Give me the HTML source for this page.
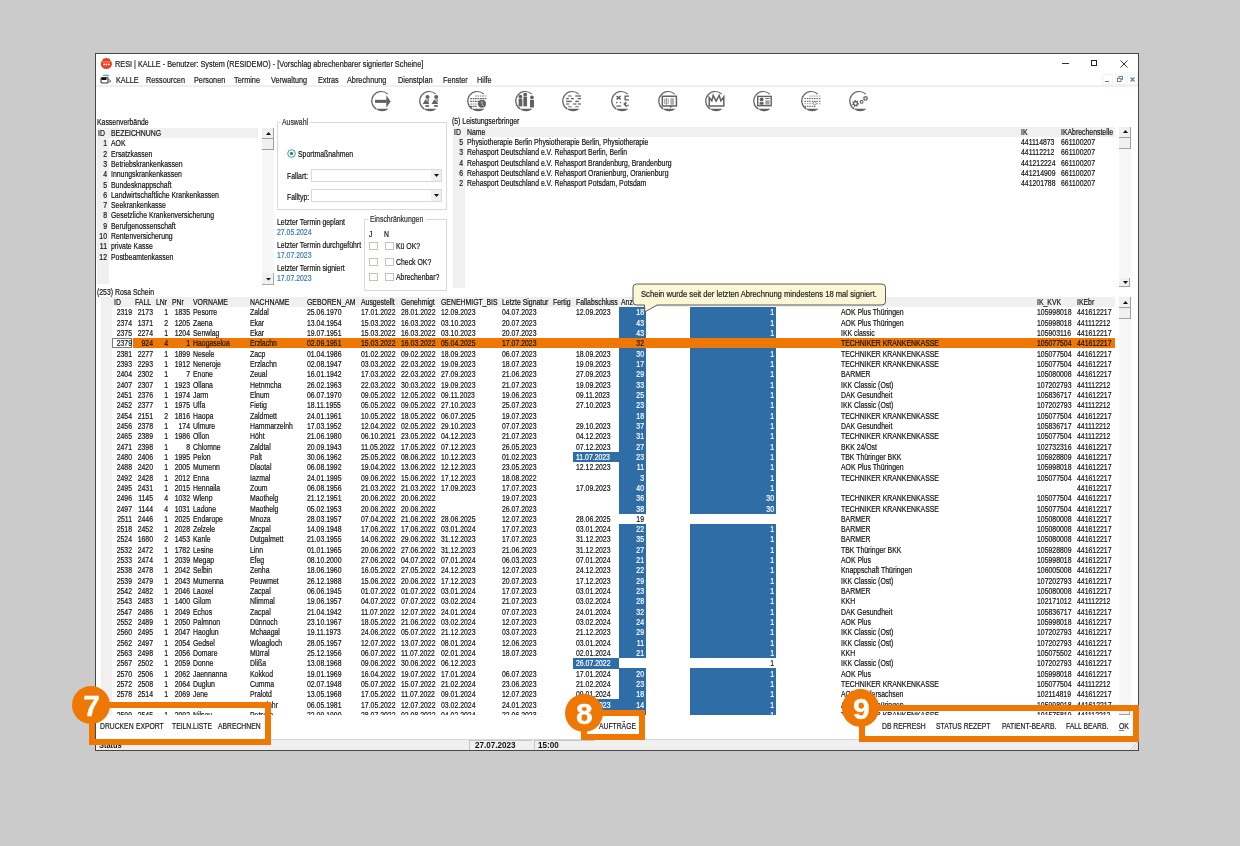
<!DOCTYPE html>
<html><head><meta charset="utf-8"><style>
html,body{margin:0;padding:0;}
body{width:1240px;height:846px;background:#cbcbcb;position:relative;overflow:hidden;font-family:"Liberation Sans",sans-serif;}
div,span,svg{position:absolute;}
span{white-space:pre;}
</style></head><body>
<div style="left:0;top:0;width:1240px;height:846px;will-change:transform;">
<div style="left:95px;top:53px;width:1044px;height:698px;background:#fff;box-sizing:border-box;border:1px solid #474747;"></div>
<svg style="position:absolute;left:100px;top:57px" width="13" height="13" viewBox="0 0 13 13"><ellipse cx="6.4" cy="6.9" rx="5.6" ry="5.2" fill="#e8431f"/><ellipse cx="6.4" cy="2.6" rx="3.6" ry="1.6" fill="#e8431f"/><circle cx="4.1" cy="7.4" r="0.9" fill="#fff"/><circle cx="6.4" cy="7.4" r="0.9" fill="#fff"/><circle cx="8.7" cy="7.4" r="0.9" fill="#fff"/><rect x="2.2" y="4.6" width="8.4" height="0.6" fill="#f7b9a8"/></svg>
<span style="left:114.80px;top:57.95px;font-size:8.30px;line-height:12px;color:#222;font-weight:normal;transform:scaleX(0.88);-webkit-text-stroke:0.2px currentColor;transform-origin:0 0;">RESI | KALLE - Benutzer: System (RESIDEMO) - [Vorschlag abrechenbarer signierter Scheine]</span>
<div style="left:1062px;top:63px;width:7px;height:1px;background:#333;"></div>
<div style="left:1091px;top:60px;width:6px;height:6px;box-sizing:border-box;border:1px solid #222;"></div>
<svg style="position:absolute;left:1120px;top:59.5px" width="8" height="8" viewBox="0 0 8 8"><path d="M0.5 0.5L7.5 7.5M7.5 0.5L0.5 7.5" stroke="#333" stroke-width="1"/></svg>
<svg style="position:absolute;left:100px;top:74px" width="12" height="11" viewBox="0 0 12 11"><path d="M3 1.5 Q6 0.5 9 2" stroke="#39a6b8" stroke-width="1.2" fill="none"/><rect x="1" y="3.5" width="7" height="5.5" rx="1" fill="#fff" stroke="#333" stroke-width="1.1"/><rect x="1.5" y="4" width="5" height="2" fill="#111"/><path d="M8.5 5 L11 7.2 L8.5 8.5" stroke="#555" stroke-width="0.9" fill="none"/></svg>
<span style="left:115.60px;top:73.75px;font-size:8.30px;line-height:12px;color:#222;font-weight:normal;transform:scaleX(0.88);-webkit-text-stroke:0.2px currentColor;transform-origin:0 0;">KALLE</span>
<span style="left:145.80px;top:73.75px;font-size:8.30px;line-height:12px;color:#222;font-weight:normal;transform:scaleX(0.88);-webkit-text-stroke:0.2px currentColor;transform-origin:0 0;">Ressourcen</span>
<span style="left:193.70px;top:73.75px;font-size:8.30px;line-height:12px;color:#222;font-weight:normal;transform:scaleX(0.88);-webkit-text-stroke:0.2px currentColor;transform-origin:0 0;">Personen</span>
<span style="left:234.00px;top:73.75px;font-size:8.30px;line-height:12px;color:#222;font-weight:normal;transform:scaleX(0.88);-webkit-text-stroke:0.2px currentColor;transform-origin:0 0;">Termine</span>
<span style="left:270.90px;top:73.75px;font-size:8.30px;line-height:12px;color:#222;font-weight:normal;transform:scaleX(0.88);-webkit-text-stroke:0.2px currentColor;transform-origin:0 0;">Verwaltung</span>
<span style="left:317.60px;top:73.75px;font-size:8.30px;line-height:12px;color:#222;font-weight:normal;transform:scaleX(0.88);-webkit-text-stroke:0.2px currentColor;transform-origin:0 0;">Extras</span>
<span style="left:346.60px;top:73.75px;font-size:8.30px;line-height:12px;color:#222;font-weight:normal;transform:scaleX(0.88);-webkit-text-stroke:0.2px currentColor;transform-origin:0 0;">Abrechnung</span>
<span style="left:397.80px;top:73.75px;font-size:8.30px;line-height:12px;color:#222;font-weight:normal;transform:scaleX(0.88);-webkit-text-stroke:0.2px currentColor;transform-origin:0 0;">Dienstplan</span>
<span style="left:443.40px;top:73.75px;font-size:8.30px;line-height:12px;color:#222;font-weight:normal;transform:scaleX(0.88);-webkit-text-stroke:0.2px currentColor;transform-origin:0 0;">Fenster</span>
<span style="left:476.50px;top:73.75px;font-size:8.30px;line-height:12px;color:#222;font-weight:normal;transform:scaleX(0.88);-webkit-text-stroke:0.2px currentColor;transform-origin:0 0;">Hilfe</span>
<div style="left:96px;top:85px;width:1042px;height:1.5px;background:#efefef;"></div>
<div style="left:1102px;top:74px;width:11px;height:11px;background:#fff;box-sizing:border-box;border:1px solid #f2f2f2;"></div>
<div style="left:1114.5px;top:74px;width:11px;height:11px;background:#fff;box-sizing:border-box;border:1px solid #f2f2f2;"></div>
<div style="left:1127px;top:74px;width:11px;height:11px;background:#fff;box-sizing:border-box;border:1px solid #f2f2f2;"></div>
<div style="left:1105px;top:81.2px;width:4.2px;height:1.2px;background:#5a7a96;"></div>
<svg style="position:absolute;left:1117px;top:76.2px" width="6" height="6" viewBox="0 0 6 6"><rect x="2" y="0.5" width="3.5" height="3" fill="none" stroke="#5a7a96" stroke-width="0.9"/><rect x="0.5" y="2.5" width="3.5" height="3" fill="#fff" stroke="#5a7a96" stroke-width="0.9"/></svg>
<svg style="position:absolute;left:1130px;top:77px" width="5" height="5" viewBox="0 0 5 5"><path d="M0.5 0.5L4.5 4.5M4.5 0.5L0.5 4.5" stroke="#5a7a96" stroke-width="1.1"/></svg>
<svg style="position:absolute;left:368.00px;top:88px" width="26" height="26" viewBox="0 0 26 26"><path d="M19.73 6.14 A9.4 9.4 0 1 0 8.22 20.87" stroke="#616161" stroke-width="1.2" fill="none"/><path d="M8.0 20.8 L20.3 20.8 Q18.6 23.2 14.1 23.2 Q9.7 23.1 8.0 20.8Z" fill="#616161"/><g transform="translate(0.00,0)"><rect x="7.07" y="11.8" width="11.5" height="3.1" fill="#616161"/><path d="M18.3 7.2 L22.6 13.4 L18.3 19.7Z" fill="#616161"/></g></svg>
<svg style="position:absolute;left:415.87px;top:88px" width="26" height="26" viewBox="0 0 26 26"><path d="M19.73 6.14 A9.4 9.4 0 1 0 8.22 20.87" stroke="#616161" stroke-width="1.2" fill="none"/><path d="M8.0 20.8 L20.3 20.8 Q18.6 23.2 14.1 23.2 Q9.7 23.1 8.0 20.8Z" fill="#616161"/><g transform="translate(0.13,0)"><circle cx="11.37" cy="9.07" r="2.0" fill="#616161"/><path d="M6.60 16.1 L9.30 11.5 L12.90 11.5 L12.90 16.1Z" fill="#616161"/><path d="M10.00 11.4 L13.10 14.6" stroke="#fff" stroke-width="0.9"/><rect x="9.20" y="17.1" width="3.7" height="1.7" fill="#616161"/><circle cx="20.13" cy="9.07" r="2.0" fill="#616161"/><path d="M15.36 16.1 L18.06 11.5 L21.66 11.5 L21.66 16.1Z" fill="#616161"/><path d="M18.76 11.4 L21.86 14.6" stroke="#fff" stroke-width="0.9"/><rect x="17.96" y="17.1" width="3.7" height="1.7" fill="#616161"/></g></svg>
<svg style="position:absolute;left:464.00px;top:88px" width="26" height="26" viewBox="0 0 26 26"><path d="M19.73 6.14 A9.4 9.4 0 1 0 8.22 20.87" stroke="#616161" stroke-width="1.2" fill="none"/><path d="M8.0 20.8 L20.3 20.8 Q18.6 23.2 14.1 23.2 Q9.7 23.1 8.0 20.8Z" fill="#616161"/><g transform="translate(0.00,0)"><rect x="10.9" y="7.4" width="1.8" height="1.2" fill="#616161" opacity="0.6"/><rect x="13.4" y="7.4" width="1.8" height="1.2" fill="#616161" opacity="0.6"/><rect x="15.8" y="7.4" width="1.8" height="1.2" fill="#616161" opacity="0.6"/><rect x="18.2" y="7.4" width="1.8" height="1.2" fill="#616161" opacity="0.6"/><rect x="20.6" y="7.4" width="1.8" height="1.2" fill="#616161" opacity="0.6"/><rect x="6.2" y="10.0" width="1.8" height="1.2" fill="#616161" opacity="1"/><rect x="8.6" y="10.0" width="1.8" height="1.2" fill="#616161" opacity="1"/><rect x="10.9" y="10.0" width="1.8" height="1.2" fill="#616161" opacity="1"/><rect x="13.4" y="10.0" width="1.8" height="1.2" fill="#616161" opacity="1"/><rect x="15.8" y="10.0" width="1.8" height="1.2" fill="#616161" opacity="1"/><rect x="18.2" y="10.0" width="1.8" height="1.2" fill="#616161" opacity="1"/><rect x="20.6" y="10.0" width="1.8" height="1.2" fill="#616161" opacity="1"/><rect x="6.2" y="12.8" width="1.8" height="1.2" fill="#616161" opacity="1"/><rect x="8.6" y="12.8" width="1.8" height="1.2" fill="#616161" opacity="1"/><rect x="10.9" y="12.8" width="1.8" height="1.2" fill="#616161" opacity="1"/><rect x="13.4" y="12.8" width="1.8" height="1.2" fill="#616161" opacity="1"/><rect x="6.2" y="15.4" width="1.8" height="1.2" fill="#616161" opacity="0.6"/><rect x="8.6" y="15.4" width="1.8" height="1.2" fill="#616161" opacity="0.6"/><rect x="10.9" y="15.4" width="1.8" height="1.2" fill="#616161" opacity="0.6"/><rect x="13.4" y="15.4" width="1.8" height="1.2" fill="#616161" opacity="0.6"/><rect x="6.2" y="17.8" width="1.8" height="1.2" fill="#616161" opacity="1"/><rect x="8.6" y="17.8" width="1.8" height="1.2" fill="#616161" opacity="1"/><rect x="10.9" y="17.8" width="1.8" height="1.2" fill="#616161" opacity="1"/><circle cx="18" cy="15.8" r="4.0" fill="#616161"/><path d="M17.9 12.9 V16.3 L20.0 18.3" stroke="#c8c8c8" stroke-width="0.9" fill="none"/></g></svg>
<svg style="position:absolute;left:511.70px;top:88px" width="26" height="26" viewBox="0 0 26 26"><path d="M19.73 6.14 A9.4 9.4 0 1 0 8.22 20.87" stroke="#616161" stroke-width="1.2" fill="none"/><path d="M8.0 20.8 L20.3 20.8 Q18.6 23.2 14.1 23.2 Q9.7 23.1 8.0 20.8Z" fill="#616161"/><g transform="translate(0.30,0)"><circle cx="8.14" cy="8.76" r="1.9" fill="#616161"/><rect x="6.3" y="10.9" width="3.7" height="7.5" fill="#616161"/><circle cx="12.9" cy="6.76" r="1.9" fill="#616161"/><rect x="11.06" y="8.9" width="3.7" height="9.5" fill="#616161"/><circle cx="19.67" cy="9.37" r="1.85" fill="#616161"/><rect x="17.67" y="11.8" width="4.0" height="7.7" fill="#616161"/></g></svg>
<svg style="position:absolute;left:559.00px;top:88px" width="26" height="26" viewBox="0 0 26 26"><path d="M19.73 6.14 A9.4 9.4 0 1 0 8.22 20.87" stroke="#616161" stroke-width="1.2" fill="none"/><path d="M8.0 20.8 L20.3 20.8 Q18.6 23.2 14.1 23.2 Q9.7 23.1 8.0 20.8Z" fill="#616161"/><g transform="translate(0.00,0)"><rect x="9.2" y="7.3" width="3.4" height="1.4" fill="#616161" opacity="0.75"/><rect x="16.3" y="7.3" width="5.7" height="1.4" fill="#616161" opacity="0.9"/><rect x="7.1" y="9.9" width="2.7" height="1.4" fill="#616161" opacity="1"/><rect x="12" y="9.9" width="2.8" height="1.4" fill="#616161" opacity="1"/><rect x="18.7" y="9.9" width="3.3" height="1.4" fill="#616161" opacity="1"/><rect x="7.1" y="12.7" width="5.5" height="1.4" fill="#616161" opacity="1"/><rect x="16.3" y="12.7" width="3.5" height="1.4" fill="#616161" opacity="1"/><rect x="7.1" y="15.3" width="2.9" height="1.4" fill="#616161" opacity="0.85"/><rect x="14.1" y="15.3" width="3.4" height="1.4" fill="#616161" opacity="0.85"/><rect x="19" y="15.3" width="3.0" height="1.4" fill="#616161" opacity="0.85"/><rect x="9.2" y="17.9" width="3.4" height="1.4" fill="#616161" opacity="0.7"/><rect x="16.3" y="17.9" width="3.4" height="1.4" fill="#616161" opacity="0.7"/></g></svg>
<svg style="position:absolute;left:607.80px;top:88px" width="26" height="26" viewBox="0 0 26 26"><path d="M19.73 6.14 A9.4 9.4 0 1 0 8.22 20.87" stroke="#616161" stroke-width="1.2" fill="none"/><path d="M8.0 20.8 L20.3 20.8 Q18.6 23.2 14.1 23.2 Q9.7 23.1 8.0 20.8Z" fill="#616161"/><g transform="translate(-0.80,0)"><path d="M9.4 8.0 L13.4 11.4 M13.4 8.0 L9.4 11.4" stroke="#616161" stroke-width="1.5"/><path d="M21.8 8.1 H18.0 V11.9 H21.8" stroke="#616161" stroke-width="1.4" fill="none"/><circle cx="9.5" cy="14.6" r="0.8" fill="#616161"/><circle cx="13.4" cy="14.6" r="0.8" fill="#616161"/><rect x="9.1" y="17.5" width="4.9" height="1.2" fill="#616161"/><path d="M16.6 15.4 L19.6 18.6 M19.2 14.3 L18.0 15.6 M20.3 17.4 L21.4 17.6" stroke="#616161" stroke-width="1.6"/></g></svg>
<svg style="position:absolute;left:654.87px;top:88px" width="26" height="26" viewBox="0 0 26 26"><path d="M19.73 6.14 A9.4 9.4 0 1 0 8.22 20.87" stroke="#616161" stroke-width="1.2" fill="none"/><path d="M8.0 20.8 L20.3 20.8 Q18.6 23.2 14.1 23.2 Q9.7 23.1 8.0 20.8Z" fill="#616161"/><g transform="translate(0.13,0)"><rect x="7.2" y="8.25" width="14.1" height="9.7" fill="none" stroke="#616161" stroke-width="1.5"/><rect x="15.2" y="10.1" width="3.7" height="6.6" fill="#616161" opacity="0.5"/><path d="M9.7 10.6 Q8.9 13.4 9.7 16.2 M12.9 10.6 Q13.7 13.4 12.9 16.2" stroke="#616161" stroke-width="0.6" fill="none"/><path d="M11.3 10.4 Q10.5 13.4 11.3 16.5 Q12.1 13.4 11.3 10.4Z" stroke="#616161" stroke-width="0.6" fill="none"/><path d="M14.2 17.9 L15.4 20.1 L17.4 17.9Z" fill="#616161"/></g></svg>
<svg style="position:absolute;left:702.40px;top:88px" width="26" height="26" viewBox="0 0 26 26"><path d="M19.73 6.14 A9.4 9.4 0 1 0 8.22 20.87" stroke="#616161" stroke-width="1.2" fill="none"/><path d="M8.0 20.8 L20.3 20.8 Q18.6 23.2 14.1 23.2 Q9.7 23.1 8.0 20.8Z" fill="#616161"/><g transform="translate(0.60,0)"><path d="M6.6 18.1 V9.5 L9.2 12.9 L10.6 7.4 L13.5 13.2 L16.6 7.4 L18.3 12.9 L21.2 8.9 V18.1Z" fill="none" stroke="#616161" stroke-width="1.5" stroke-linejoin="miter"/></g></svg>
<svg style="position:absolute;left:750.20px;top:88px" width="26" height="26" viewBox="0 0 26 26"><path d="M19.73 6.14 A9.4 9.4 0 1 0 8.22 20.87" stroke="#616161" stroke-width="1.2" fill="none"/><path d="M8.0 20.8 L20.3 20.8 Q18.6 23.2 14.1 23.2 Q9.7 23.1 8.0 20.8Z" fill="#616161"/><g transform="translate(-0.20,0)"><rect x="7.9" y="8.4" width="13.5" height="9.3" fill="none" stroke="#616161" stroke-width="1.4"/><circle cx="11.8" cy="11.5" r="1.9" fill="#616161"/><rect x="9.8" y="14.1" width="4.0" height="2.6" fill="#616161"/><rect x="15.4" y="10.0" width="4.3" height="0.9" fill="#616161"/><rect x="15.5" y="12.3" width="4.2" height="4.4" fill="#616161" opacity="0.6"/></g></svg>
<svg style="position:absolute;left:797.87px;top:88px" width="26" height="26" viewBox="0 0 26 26"><path d="M19.73 6.14 A9.4 9.4 0 1 0 8.22 20.87" stroke="#616161" stroke-width="1.2" fill="none"/><path d="M8.0 20.8 L20.3 20.8 Q18.6 23.2 14.1 23.2 Q9.7 23.1 8.0 20.8Z" fill="#616161"/><g transform="translate(0.13,0)"><rect x="11.0" y="7.5" width="1.6" height="1.1" fill="#616161" opacity="0.55"/><rect x="13.5" y="7.5" width="1.6" height="1.1" fill="#616161" opacity="0.55"/><rect x="15.8" y="7.5" width="1.6" height="1.1" fill="#616161" opacity="0.55"/><rect x="18.2" y="7.5" width="1.6" height="1.1" fill="#616161" opacity="0.55"/><rect x="20.7" y="7.5" width="1.6" height="1.1" fill="#616161" opacity="0.55"/><rect x="6.3" y="10.0" width="1.6" height="1.1" fill="#616161" opacity="0.95"/><rect x="8.7" y="10.0" width="1.6" height="1.1" fill="#616161" opacity="0.95"/><rect x="11.0" y="10.0" width="1.6" height="1.1" fill="#616161" opacity="0.95"/><rect x="13.5" y="10.0" width="1.6" height="1.1" fill="#616161" opacity="0.95"/><rect x="15.8" y="10.0" width="1.6" height="1.1" fill="#616161" opacity="0.95"/><rect x="18.2" y="10.0" width="1.6" height="1.1" fill="#616161" opacity="0.95"/><rect x="20.7" y="10.0" width="1.6" height="1.1" fill="#616161" opacity="0.95"/><rect x="6.3" y="12.8" width="1.6" height="1.1" fill="#616161" opacity="0.95"/><rect x="8.7" y="12.8" width="1.6" height="1.1" fill="#616161" opacity="0.95"/><rect x="11.0" y="12.8" width="1.6" height="1.1" fill="#616161" opacity="0.95"/><rect x="13.5" y="12.8" width="1.6" height="1.1" fill="#616161" opacity="0.95"/><rect x="15.8" y="12.8" width="1.6" height="1.1" fill="#616161" opacity="0.95"/><rect x="18.2" y="12.8" width="1.6" height="1.1" fill="#616161" opacity="0.95"/><rect x="20.7" y="12.8" width="1.6" height="1.1" fill="#616161" opacity="0.95"/><rect x="6.3" y="15.1" width="1.6" height="1.1" fill="#616161" opacity="0.55"/><rect x="8.7" y="15.1" width="1.6" height="1.1" fill="#616161" opacity="0.55"/><rect x="11.0" y="15.1" width="1.6" height="1.1" fill="#616161" opacity="0.55"/><rect x="13.5" y="15.1" width="1.6" height="1.1" fill="#616161" opacity="0.55"/><rect x="15.8" y="15.1" width="1.6" height="1.1" fill="#616161" opacity="0.55"/><rect x="18.2" y="15.1" width="1.6" height="1.1" fill="#616161" opacity="0.55"/><rect x="20.7" y="15.1" width="1.6" height="1.1" fill="#616161" opacity="0.55"/><rect x="6.3" y="17.8" width="1.6" height="1.1" fill="#616161" opacity="0.95"/><rect x="8.7" y="17.8" width="1.6" height="1.1" fill="#616161" opacity="0.95"/><rect x="11.0" y="17.8" width="1.6" height="1.1" fill="#616161" opacity="0.95"/><rect x="13.5" y="17.8" width="1.6" height="1.1" fill="#616161" opacity="0.95"/><rect x="15.8" y="17.8" width="1.6" height="1.1" fill="#616161" opacity="0.95"/><circle cx="16.6" cy="15.4" r="1.5" fill="#fff" stroke="#616161" stroke-width="0.6"/></g></svg>
<svg style="position:absolute;left:846.00px;top:88px" width="26" height="26" viewBox="0 0 26 26"><path d="M19.73 6.14 A9.4 9.4 0 1 0 8.22 20.87" stroke="#616161" stroke-width="1.2" fill="none"/><path d="M8.0 20.8 L20.3 20.8 Q18.6 23.2 14.1 23.2 Q9.7 23.1 8.0 20.8Z" fill="#616161"/><g transform="translate(0.00,0)"><path d="M13.00 15.50 L12.91 16.28 L11.84 16.63 L11.53 17.12 L11.68 18.24 L11.02 18.65 L10.08 18.03 L9.50 18.10 L8.72 18.91 L7.98 18.65 L7.88 17.53 L7.47 17.12 L6.35 17.02 L6.09 16.28 L6.90 15.50 L6.97 14.92 L6.35 13.98 L6.76 13.32 L7.88 13.47 L8.37 13.16 L8.72 12.09 L9.50 12.00 L10.08 12.97 L10.63 13.16 L11.68 12.76 L12.24 13.32 L11.84 14.37 L12.03 14.92Z M10.80 15.50 A1.3 1.3 0 1 0 8.20 15.50 A1.3 1.3 0 1 0 10.80 15.50Z" fill="#616161" fill-rule="evenodd"/><path d="M17.80 13.80 L17.73 14.37 L17.07 14.65 L16.80 15.00 L16.70 15.71 L16.17 15.93 L15.60 15.50 L15.16 15.44 L14.50 15.71 L14.04 15.36 L14.13 14.65 L13.96 14.24 L13.40 13.80 L13.47 13.23 L14.13 12.95 L14.40 12.60 L14.50 11.89 L15.03 11.67 L15.60 12.10 L16.04 12.16 L16.70 11.89 L17.16 12.24 L17.07 12.95 L17.24 13.36Z M16.50 13.80 A0.9 0.9 0 1 0 14.70 13.80 A0.9 0.9 0 1 0 16.50 13.80Z" fill="#616161" fill-rule="evenodd"/><path d="M22.20 10.40 L22.13 11.00 L21.30 11.27 L21.06 11.65 L21.18 12.51 L20.67 12.83 L19.95 12.35 L19.50 12.40 L18.90 13.03 L18.33 12.83 L18.25 11.96 L17.94 11.65 L17.07 11.57 L16.87 11.00 L17.50 10.40 L17.55 9.95 L17.07 9.23 L17.39 8.72 L18.25 8.84 L18.63 8.60 L18.90 7.77 L19.50 7.70 L19.95 8.45 L20.37 8.60 L21.18 8.29 L21.61 8.72 L21.30 9.53 L21.45 9.95Z M20.50 10.40 A1.0 1.0 0 1 0 18.50 10.40 A1.0 1.0 0 1 0 20.50 10.40Z" fill="#616161" fill-rule="evenodd"/></g></svg>
<span style="left:96.60px;top:116.45px;font-size:8.31px;line-height:12px;color:#141414;font-weight:normal;transform:scaleX(0.83);-webkit-text-stroke:0.2px currentColor;transform-origin:0 0;">Kassenverbände</span>
<div style="left:97px;top:128px;width:161px;height:10px;background:#f0f0f0;"></div>
<div style="left:97px;top:138px;width:12px;height:146px;background:#f0f0f0;"></div>
<span style="left:97.80px;top:127.15px;font-size:8.31px;line-height:12px;color:#141414;font-weight:normal;transform:scaleX(0.83);-webkit-text-stroke:0.2px currentColor;transform-origin:0 0;">ID</span>
<span style="left:110.80px;top:127.15px;font-size:8.31px;line-height:12px;color:#141414;font-weight:normal;transform:scaleX(0.83);-webkit-text-stroke:0.2px currentColor;transform-origin:0 0;">BEZEICHNUNG</span>
<span style="left:-193.00px;width:300px;text-align:right;top:137.25px;font-size:8.31px;line-height:12px;color:#141414;font-weight:normal;transform:scaleX(0.83);-webkit-text-stroke:0.2px currentColor;transform-origin:100% 0;">1</span>
<span style="left:110.80px;top:137.25px;font-size:8.31px;line-height:12px;color:#141414;font-weight:normal;transform:scaleX(0.83);-webkit-text-stroke:0.2px currentColor;transform-origin:0 0;">AOK</span>
<span style="left:-193.00px;width:300px;text-align:right;top:147.57px;font-size:8.31px;line-height:12px;color:#141414;font-weight:normal;transform:scaleX(0.83);-webkit-text-stroke:0.2px currentColor;transform-origin:100% 0;">2</span>
<span style="left:110.80px;top:147.57px;font-size:8.31px;line-height:12px;color:#141414;font-weight:normal;transform:scaleX(0.83);-webkit-text-stroke:0.2px currentColor;transform-origin:0 0;">Ersatzkassen</span>
<span style="left:-193.00px;width:300px;text-align:right;top:157.89px;font-size:8.31px;line-height:12px;color:#141414;font-weight:normal;transform:scaleX(0.83);-webkit-text-stroke:0.2px currentColor;transform-origin:100% 0;">3</span>
<span style="left:110.80px;top:157.89px;font-size:8.31px;line-height:12px;color:#141414;font-weight:normal;transform:scaleX(0.83);-webkit-text-stroke:0.2px currentColor;transform-origin:0 0;">Betriebskrankenkassen</span>
<span style="left:-193.00px;width:300px;text-align:right;top:168.21px;font-size:8.31px;line-height:12px;color:#141414;font-weight:normal;transform:scaleX(0.83);-webkit-text-stroke:0.2px currentColor;transform-origin:100% 0;">4</span>
<span style="left:110.80px;top:168.21px;font-size:8.31px;line-height:12px;color:#141414;font-weight:normal;transform:scaleX(0.83);-webkit-text-stroke:0.2px currentColor;transform-origin:0 0;">Innungskrankenkassen</span>
<span style="left:-193.00px;width:300px;text-align:right;top:178.53px;font-size:8.31px;line-height:12px;color:#141414;font-weight:normal;transform:scaleX(0.83);-webkit-text-stroke:0.2px currentColor;transform-origin:100% 0;">5</span>
<span style="left:110.80px;top:178.53px;font-size:8.31px;line-height:12px;color:#141414;font-weight:normal;transform:scaleX(0.83);-webkit-text-stroke:0.2px currentColor;transform-origin:0 0;">Bundesknappschaft</span>
<span style="left:-193.00px;width:300px;text-align:right;top:188.85px;font-size:8.31px;line-height:12px;color:#141414;font-weight:normal;transform:scaleX(0.83);-webkit-text-stroke:0.2px currentColor;transform-origin:100% 0;">6</span>
<span style="left:110.80px;top:188.85px;font-size:8.31px;line-height:12px;color:#141414;font-weight:normal;transform:scaleX(0.83);-webkit-text-stroke:0.2px currentColor;transform-origin:0 0;">Landwirtschaftliche Krankenkassen</span>
<span style="left:-193.00px;width:300px;text-align:right;top:199.17px;font-size:8.31px;line-height:12px;color:#141414;font-weight:normal;transform:scaleX(0.83);-webkit-text-stroke:0.2px currentColor;transform-origin:100% 0;">7</span>
<span style="left:110.80px;top:199.17px;font-size:8.31px;line-height:12px;color:#141414;font-weight:normal;transform:scaleX(0.83);-webkit-text-stroke:0.2px currentColor;transform-origin:0 0;">Seekrankenkasse</span>
<span style="left:-193.00px;width:300px;text-align:right;top:209.49px;font-size:8.31px;line-height:12px;color:#141414;font-weight:normal;transform:scaleX(0.83);-webkit-text-stroke:0.2px currentColor;transform-origin:100% 0;">8</span>
<span style="left:110.80px;top:209.49px;font-size:8.31px;line-height:12px;color:#141414;font-weight:normal;transform:scaleX(0.83);-webkit-text-stroke:0.2px currentColor;transform-origin:0 0;">Gesetzliche Krankenversicherung</span>
<span style="left:-193.00px;width:300px;text-align:right;top:219.81px;font-size:8.31px;line-height:12px;color:#141414;font-weight:normal;transform:scaleX(0.83);-webkit-text-stroke:0.2px currentColor;transform-origin:100% 0;">9</span>
<span style="left:110.80px;top:219.81px;font-size:8.31px;line-height:12px;color:#141414;font-weight:normal;transform:scaleX(0.83);-webkit-text-stroke:0.2px currentColor;transform-origin:0 0;">Berufgenossenschaft</span>
<span style="left:-193.00px;width:300px;text-align:right;top:230.13px;font-size:8.31px;line-height:12px;color:#141414;font-weight:normal;transform:scaleX(0.83);-webkit-text-stroke:0.2px currentColor;transform-origin:100% 0;">10</span>
<span style="left:110.80px;top:230.13px;font-size:8.31px;line-height:12px;color:#141414;font-weight:normal;transform:scaleX(0.83);-webkit-text-stroke:0.2px currentColor;transform-origin:0 0;">Rentenversicherung</span>
<span style="left:-193.00px;width:300px;text-align:right;top:240.45px;font-size:8.31px;line-height:12px;color:#141414;font-weight:normal;transform:scaleX(0.83);-webkit-text-stroke:0.2px currentColor;transform-origin:100% 0;">11</span>
<span style="left:110.80px;top:240.45px;font-size:8.31px;line-height:12px;color:#141414;font-weight:normal;transform:scaleX(0.83);-webkit-text-stroke:0.2px currentColor;transform-origin:0 0;">private Kasse</span>
<span style="left:-193.00px;width:300px;text-align:right;top:250.77px;font-size:8.31px;line-height:12px;color:#141414;font-weight:normal;transform:scaleX(0.83);-webkit-text-stroke:0.2px currentColor;transform-origin:100% 0;">12</span>
<span style="left:110.80px;top:250.77px;font-size:8.31px;line-height:12px;color:#141414;font-weight:normal;transform:scaleX(0.83);-webkit-text-stroke:0.2px currentColor;transform-origin:0 0;">Postbeamtenkassen</span>
<div style="left:262.3px;top:128px;width:11.5px;height:156.7px;background:#f7f7f7;"></div>
<div style="left:262.3px;top:128px;width:11.5px;height:10.8px;background:#f0f0f0;box-sizing:border-box;border-right:1px solid #a0a0a0;border-bottom:1px solid #a0a0a0;"></div>
<svg style="position:absolute;left:265.5px;top:131.6px" width="5" height="3" viewBox="0 0 5 3"><path d="M0 3 L2.5 0 L5 3Z" fill="#111"/></svg>
<div style="left:262.3px;top:139px;width:11.5px;height:11px;background:#f0f0f0;box-sizing:border-box;border-right:1px solid #a0a0a0;border-bottom:1px solid #a0a0a0;"></div>
<div style="left:262.3px;top:273.3px;width:11.3px;height:11.4px;background:#f0f0f0;box-sizing:border-box;border-right:1.5px solid #a8a8a8;border-bottom:1.5px solid #a8a8a8;"></div>
<svg style="position:absolute;left:265.6px;top:277.9px" width="5" height="3" viewBox="0 0 5 3"><path d="M0 0 L5 0 L2.5 2.5Z" fill="#111"/></svg>
<div style="left:276.8px;top:121.5px;width:170.2px;height:88.3px;box-sizing:border-box;border:1px solid #d9d9d9;"></div>
<div style="left:280.5px;top:118px;width:29.5px;height:7px;background:#fff;"></div>
<span style="left:282.30px;top:115.85px;font-size:8.31px;line-height:12px;color:#333;font-weight:normal;transform:scaleX(0.83);-webkit-text-stroke:0.2px currentColor;transform-origin:0 0;">Auswahl</span>
<svg style="position:absolute;left:286.5px;top:149px" width="9" height="9" viewBox="0 0 9 9"><circle cx="4.5" cy="4.5" r="3.8" fill="#fff" stroke="#3c7fb1" stroke-width="0.9"/><circle cx="4.5" cy="4.5" r="1.7" fill="#1c9a4a"/></svg>
<span style="left:297.90px;top:147.75px;font-size:8.31px;line-height:12px;color:#141414;font-weight:normal;transform:scaleX(0.83);-webkit-text-stroke:0.2px currentColor;transform-origin:0 0;">Sportmaßnahmen</span>
<span style="left:287.00px;top:170.15px;font-size:8.31px;line-height:12px;color:#141414;font-weight:normal;transform:scaleX(0.83);-webkit-text-stroke:0.2px currentColor;transform-origin:0 0;">Fallart:</span>
<span style="left:287.00px;top:190.95px;font-size:8.31px;line-height:12px;color:#141414;font-weight:normal;transform:scaleX(0.83);-webkit-text-stroke:0.2px currentColor;transform-origin:0 0;">Falltyp:</span>
<div style="left:310.6px;top:169.0px;width:131.4px;height:12.8px;box-sizing:border-box;border:1px solid #dadada;background:#fff;"></div>
<div style="left:431px;top:170.0px;width:10px;height:10.8px;background:#f0f0f0;"></div>
<svg style="position:absolute;left:433.5px;top:174.0px" width="5" height="3" viewBox="0 0 5 3"><path d="M0 0 L2.5 3 L5 0Z" fill="#111"/></svg>
<div style="left:310.6px;top:189.2px;width:131.4px;height:12.8px;box-sizing:border-box;border:1px solid #dadada;background:#fff;"></div>
<div style="left:431px;top:190.2px;width:10px;height:10.8px;background:#f0f0f0;"></div>
<svg style="position:absolute;left:433.5px;top:194.2px" width="5" height="3" viewBox="0 0 5 3"><path d="M0 0 L2.5 3 L5 0Z" fill="#111"/></svg>
<span style="left:277.00px;top:215.85px;font-size:8.31px;line-height:12px;color:#141414;font-weight:normal;transform:scaleX(0.83);-webkit-text-stroke:0.2px currentColor;transform-origin:0 0;">Letzter Termin geplant</span>
<span style="left:277.00px;top:226.45px;font-size:8.31px;line-height:12px;color:#3b78b8;font-weight:normal;transform:scaleX(0.83);-webkit-text-stroke:0.2px currentColor;transform-origin:0 0;">27.05.2024</span>
<span style="left:277.00px;top:239.15px;font-size:8.31px;line-height:12px;color:#141414;font-weight:normal;transform:scaleX(0.83);-webkit-text-stroke:0.2px currentColor;transform-origin:0 0;">Letzter Termin durchgeführt</span>
<span style="left:277.00px;top:249.45px;font-size:8.31px;line-height:12px;color:#3b78b8;font-weight:normal;transform:scaleX(0.83);-webkit-text-stroke:0.2px currentColor;transform-origin:0 0;">17.07.2023</span>
<span style="left:277.00px;top:262.05px;font-size:8.31px;line-height:12px;color:#141414;font-weight:normal;transform:scaleX(0.83);-webkit-text-stroke:0.2px currentColor;transform-origin:0 0;">Letzter Termin signiert</span>
<span style="left:277.00px;top:272.15px;font-size:8.31px;line-height:12px;color:#3b78b8;font-weight:normal;transform:scaleX(0.83);-webkit-text-stroke:0.2px currentColor;transform-origin:0 0;">17.07.2023</span>
<div style="left:364.0px;top:218.5px;width:82.8px;height:72.8px;box-sizing:border-box;border:1px solid #d9d9d9;"></div>
<div style="left:367.5px;top:214px;width:58.5px;height:8px;background:#fff;"></div>
<span style="left:370.20px;top:212.75px;font-size:8.31px;line-height:12px;color:#333;font-weight:normal;transform:scaleX(0.83);-webkit-text-stroke:0.2px currentColor;transform-origin:0 0;">Einschränkungen</span>
<span style="left:369.20px;top:227.95px;font-size:8.31px;line-height:12px;color:#141414;font-weight:normal;transform:scaleX(0.83);-webkit-text-stroke:0.2px currentColor;transform-origin:0 0;">J</span>
<span style="left:384.20px;top:227.95px;font-size:8.31px;line-height:12px;color:#141414;font-weight:normal;transform:scaleX(0.83);-webkit-text-stroke:0.2px currentColor;transform-origin:0 0;">N</span>
<div style="left:369.2px;top:242.1px;width:8.5px;height:8.0px;box-sizing:border-box;border:1px solid #c4c4b6;background:#fff;"></div>
<div style="left:385.1px;top:242.1px;width:8.6px;height:8.0px;box-sizing:border-box;border:1px solid #c4c4b6;background:#fff;"></div>
<span style="left:395.50px;top:239.85px;font-size:8.31px;line-height:12px;color:#141414;font-weight:normal;transform:scaleX(0.83);-webkit-text-stroke:0.2px currentColor;transform-origin:0 0;">Kü OK?</span>
<div style="left:369.2px;top:257.9px;width:8.5px;height:8.0px;box-sizing:border-box;border:1px solid #c4c4b6;background:#fff;"></div>
<div style="left:385.1px;top:257.9px;width:8.6px;height:8.0px;box-sizing:border-box;border:1px solid #c4c4b6;background:#fff;"></div>
<span style="left:395.50px;top:255.65px;font-size:8.31px;line-height:12px;color:#141414;font-weight:normal;transform:scaleX(0.83);-webkit-text-stroke:0.2px currentColor;transform-origin:0 0;">Check OK?</span>
<div style="left:369.2px;top:273.0px;width:8.5px;height:8.0px;box-sizing:border-box;border:1px solid #c4c4b6;background:#fff;"></div>
<div style="left:385.1px;top:273.0px;width:8.6px;height:8.0px;box-sizing:border-box;border:1px solid #c4c4b6;background:#fff;"></div>
<span style="left:395.50px;top:270.75px;font-size:8.31px;line-height:12px;color:#141414;font-weight:normal;transform:scaleX(0.83);-webkit-text-stroke:0.2px currentColor;transform-origin:0 0;">Abrechenbar?</span>
<span style="left:451.90px;top:114.65px;font-size:8.31px;line-height:12px;color:#141414;font-weight:normal;transform:scaleX(0.83);-webkit-text-stroke:0.2px currentColor;transform-origin:0 0;">(5) Leistungserbringer</span>
<div style="left:452.7px;top:126.7px;width:662px;height:10px;background:#f0f0f0;"></div>
<div style="left:452.7px;top:136.7px;width:12px;height:151px;background:#f0f0f0;"></div>
<span style="left:454.00px;top:125.85px;font-size:8.31px;line-height:12px;color:#141414;font-weight:normal;transform:scaleX(0.83);-webkit-text-stroke:0.2px currentColor;transform-origin:0 0;">ID</span>
<span style="left:466.80px;top:125.85px;font-size:8.31px;line-height:12px;color:#141414;font-weight:normal;transform:scaleX(0.83);-webkit-text-stroke:0.2px currentColor;transform-origin:0 0;">Name</span>
<span style="left:1020.90px;top:125.85px;font-size:8.31px;line-height:12px;color:#141414;font-weight:normal;transform:scaleX(0.83);-webkit-text-stroke:0.2px currentColor;transform-origin:0 0;">IK</span>
<span style="left:1060.80px;top:125.85px;font-size:8.31px;line-height:12px;color:#141414;font-weight:normal;transform:scaleX(0.83);-webkit-text-stroke:0.2px currentColor;transform-origin:0 0;">IKAbrechenstelle</span>
<span style="left:162.60px;width:300px;text-align:right;top:136.05px;font-size:8.31px;line-height:12px;color:#141414;font-weight:normal;transform:scaleX(0.83);-webkit-text-stroke:0.2px currentColor;transform-origin:100% 0;">5</span>
<span style="left:466.60px;top:136.05px;font-size:8.31px;line-height:12px;color:#141414;font-weight:normal;transform:scaleX(0.83);-webkit-text-stroke:0.2px currentColor;transform-origin:0 0;">Physiotherapie Berlin Physiotherapie Berlin, Physiotherapie</span>
<span style="left:1020.90px;top:136.05px;font-size:8.31px;line-height:12px;color:#141414;font-weight:normal;transform:scaleX(0.83);-webkit-text-stroke:0.2px currentColor;transform-origin:0 0;">441114873</span>
<span style="left:1060.80px;top:136.05px;font-size:8.31px;line-height:12px;color:#141414;font-weight:normal;transform:scaleX(0.83);-webkit-text-stroke:0.2px currentColor;transform-origin:0 0;">661100207</span>
<span style="left:162.60px;width:300px;text-align:right;top:146.37px;font-size:8.31px;line-height:12px;color:#141414;font-weight:normal;transform:scaleX(0.83);-webkit-text-stroke:0.2px currentColor;transform-origin:100% 0;">3</span>
<span style="left:466.60px;top:146.37px;font-size:8.31px;line-height:12px;color:#141414;font-weight:normal;transform:scaleX(0.83);-webkit-text-stroke:0.2px currentColor;transform-origin:0 0;">Rehasport Deutschland e.V. Rehasport Berlin, Berlin</span>
<span style="left:1020.90px;top:146.37px;font-size:8.31px;line-height:12px;color:#141414;font-weight:normal;transform:scaleX(0.83);-webkit-text-stroke:0.2px currentColor;transform-origin:0 0;">441112212</span>
<span style="left:1060.80px;top:146.37px;font-size:8.31px;line-height:12px;color:#141414;font-weight:normal;transform:scaleX(0.83);-webkit-text-stroke:0.2px currentColor;transform-origin:0 0;">661100207</span>
<span style="left:162.60px;width:300px;text-align:right;top:156.69px;font-size:8.31px;line-height:12px;color:#141414;font-weight:normal;transform:scaleX(0.83);-webkit-text-stroke:0.2px currentColor;transform-origin:100% 0;">4</span>
<span style="left:466.60px;top:156.69px;font-size:8.31px;line-height:12px;color:#141414;font-weight:normal;transform:scaleX(0.83);-webkit-text-stroke:0.2px currentColor;transform-origin:0 0;">Rehasport Deutschland e.V. Rehasport Brandenburg, Brandenburg</span>
<span style="left:1020.90px;top:156.69px;font-size:8.31px;line-height:12px;color:#141414;font-weight:normal;transform:scaleX(0.83);-webkit-text-stroke:0.2px currentColor;transform-origin:0 0;">441212224</span>
<span style="left:1060.80px;top:156.69px;font-size:8.31px;line-height:12px;color:#141414;font-weight:normal;transform:scaleX(0.83);-webkit-text-stroke:0.2px currentColor;transform-origin:0 0;">661100207</span>
<span style="left:162.60px;width:300px;text-align:right;top:167.01px;font-size:8.31px;line-height:12px;color:#141414;font-weight:normal;transform:scaleX(0.83);-webkit-text-stroke:0.2px currentColor;transform-origin:100% 0;">6</span>
<span style="left:466.60px;top:167.01px;font-size:8.31px;line-height:12px;color:#141414;font-weight:normal;transform:scaleX(0.83);-webkit-text-stroke:0.2px currentColor;transform-origin:0 0;">Rehasport Deutschland e.V. Rehasport Oranienburg, Oranienburg</span>
<span style="left:1020.90px;top:167.01px;font-size:8.31px;line-height:12px;color:#141414;font-weight:normal;transform:scaleX(0.83);-webkit-text-stroke:0.2px currentColor;transform-origin:0 0;">441214909</span>
<span style="left:1060.80px;top:167.01px;font-size:8.31px;line-height:12px;color:#141414;font-weight:normal;transform:scaleX(0.83);-webkit-text-stroke:0.2px currentColor;transform-origin:0 0;">661100207</span>
<span style="left:162.60px;width:300px;text-align:right;top:177.33px;font-size:8.31px;line-height:12px;color:#141414;font-weight:normal;transform:scaleX(0.83);-webkit-text-stroke:0.2px currentColor;transform-origin:100% 0;">2</span>
<span style="left:466.60px;top:177.33px;font-size:8.31px;line-height:12px;color:#141414;font-weight:normal;transform:scaleX(0.83);-webkit-text-stroke:0.2px currentColor;transform-origin:0 0;">Rehasport Deutschland e.V. Rehasport Potsdam, Potsdam</span>
<span style="left:1020.90px;top:177.33px;font-size:8.31px;line-height:12px;color:#141414;font-weight:normal;transform:scaleX(0.83);-webkit-text-stroke:0.2px currentColor;transform-origin:0 0;">441201788</span>
<span style="left:1060.80px;top:177.33px;font-size:8.31px;line-height:12px;color:#141414;font-weight:normal;transform:scaleX(0.83);-webkit-text-stroke:0.2px currentColor;transform-origin:0 0;">661100207</span>
<div style="left:1119.4px;top:126.8px;width:11.5px;height:160.7px;background:#f7f7f7;"></div>
<div style="left:1119.4px;top:126.8px;width:11.5px;height:10.8px;background:#f0f0f0;box-sizing:border-box;border-right:1px solid #a0a0a0;border-bottom:1px solid #a0a0a0;"></div>
<svg style="position:absolute;left:1122.6000000000001px;top:130.4px" width="5" height="3" viewBox="0 0 5 3"><path d="M0 3 L2.5 0 L5 3Z" fill="#111"/></svg>
<div style="left:1119.4px;top:137.8px;width:11.5px;height:11px;background:#f0f0f0;box-sizing:border-box;border-right:1px solid #a0a0a0;border-bottom:1px solid #a0a0a0;"></div>
<div style="left:1119.4px;top:277.8px;width:11px;height:9.5px;background:#f0f0f0;box-sizing:border-box;border-right:1px solid #a0a0a0;border-bottom:1px solid #a0a0a0;"></div>
<svg style="position:absolute;left:1122.5px;top:281px" width="5" height="3" viewBox="0 0 5 3"><path d="M0 0 L2.5 3 L5 0Z" fill="#111"/></svg>
<span style="left:96.50px;top:286.45px;font-size:8.31px;line-height:12px;color:#141414;font-weight:normal;transform:scaleX(0.83);-webkit-text-stroke:0.2px currentColor;transform-origin:0 0;">(253) Rosa Schein</span>
<div style="left:101px;top:297px;width:1013.8px;height:10px;background:#f0f0f0;"></div>
<div style="left:101px;top:307px;width:11px;height:407.5px;background:#f0f0f0;"></div>
<span style="left:114.20px;top:296.05px;font-size:8.31px;line-height:12px;color:#141414;font-weight:normal;transform:scaleX(0.83);-webkit-text-stroke:0.2px currentColor;transform-origin:0 0;">ID</span>
<span style="left:134.80px;top:296.05px;font-size:8.31px;line-height:12px;color:#141414;font-weight:normal;transform:scaleX(0.83);-webkit-text-stroke:0.2px currentColor;transform-origin:0 0;">FALL</span>
<span style="left:156.30px;top:296.05px;font-size:8.31px;line-height:12px;color:#141414;font-weight:normal;transform:scaleX(0.83);-webkit-text-stroke:0.2px currentColor;transform-origin:0 0;">LNr</span>
<span style="left:172.30px;top:296.05px;font-size:8.31px;line-height:12px;color:#141414;font-weight:normal;transform:scaleX(0.83);-webkit-text-stroke:0.2px currentColor;transform-origin:0 0;">PNr</span>
<span style="left:192.90px;top:296.05px;font-size:8.31px;line-height:12px;color:#141414;font-weight:normal;transform:scaleX(0.83);-webkit-text-stroke:0.2px currentColor;transform-origin:0 0;">VORNAME</span>
<span style="left:250.20px;top:296.05px;font-size:8.31px;line-height:12px;color:#141414;font-weight:normal;transform:scaleX(0.83);-webkit-text-stroke:0.2px currentColor;transform-origin:0 0;">NACHNAME</span>
<span style="left:307.20px;top:296.05px;font-size:8.31px;line-height:12px;color:#141414;font-weight:normal;transform:scaleX(0.83);-webkit-text-stroke:0.2px currentColor;transform-origin:0 0;">GEBOREN_AM</span>
<span style="left:360.60px;top:296.05px;font-size:8.31px;line-height:12px;color:#141414;font-weight:normal;transform:scaleX(0.83);-webkit-text-stroke:0.2px currentColor;transform-origin:0 0;">Ausgestellt</span>
<span style="left:400.60px;top:296.05px;font-size:8.31px;line-height:12px;color:#141414;font-weight:normal;transform:scaleX(0.83);-webkit-text-stroke:0.2px currentColor;transform-origin:0 0;">Genehmigt</span>
<span style="left:440.90px;top:296.05px;font-size:8.31px;line-height:12px;color:#141414;font-weight:normal;transform:scaleX(0.83);-webkit-text-stroke:0.2px currentColor;transform-origin:0 0;">GENEHMIGT_BIS</span>
<span style="left:502.40px;top:296.05px;font-size:8.31px;line-height:12px;color:#141414;font-weight:normal;transform:scaleX(0.83);-webkit-text-stroke:0.2px currentColor;transform-origin:0 0;">Letzte Signatur</span>
<span style="left:553.20px;top:296.05px;font-size:8.31px;line-height:12px;color:#141414;font-weight:normal;transform:scaleX(0.83);-webkit-text-stroke:0.2px currentColor;transform-origin:0 0;">Fertig</span>
<span style="left:575.80px;top:296.05px;font-size:8.31px;line-height:12px;color:#141414;font-weight:normal;transform:scaleX(0.83);-webkit-text-stroke:0.2px currentColor;transform-origin:0 0;">Fallabschluss</span>
<span style="left:621.00px;top:296.05px;font-size:8.31px;line-height:12px;color:#141414;font-weight:normal;transform:scaleX(0.83);-webkit-text-stroke:0.2px currentColor;transform-origin:0 0;">Anz</span>
<span style="left:841.20px;top:296.05px;font-size:8.31px;line-height:12px;color:#141414;font-weight:normal;transform:scaleX(0.83);-webkit-text-stroke:0.2px currentColor;transform-origin:0 0;">Krankenkasse</span>
<span style="left:1037.40px;top:296.05px;font-size:8.31px;line-height:12px;color:#141414;font-weight:normal;transform:scaleX(0.83);-webkit-text-stroke:0.2px currentColor;transform-origin:0 0;">IK_KVK</span>
<span style="left:1077.20px;top:296.05px;font-size:8.31px;line-height:12px;color:#141414;font-weight:normal;transform:scaleX(0.83);-webkit-text-stroke:0.2px currentColor;transform-origin:0 0;">IKEbr</span>
<div style="left:96px;top:307.0px;width:1042px;height:407.5px;overflow:hidden;">
<div style="left:523.2px;top:0.0px;width:26.8px;height:10.527px;background:#2f6da6;"></div>
<div style="left:594.1px;top:0.0px;width:85.8px;height:10.527px;background:#2f6da6;"></div>
<div style="left:523.2px;top:10.326999999999998px;width:26.8px;height:10.527px;background:#2f6da6;"></div>
<div style="left:594.1px;top:10.326999999999998px;width:85.8px;height:10.527px;background:#2f6da6;"></div>
<div style="left:523.2px;top:20.653999999999996px;width:26.8px;height:10.527px;background:#2f6da6;"></div>
<div style="left:594.1px;top:20.653999999999996px;width:85.8px;height:10.527px;background:#2f6da6;"></div>
<div style="left:36.599999999999994px;top:30.899999999999977px;width:982.1px;height:10.3px;background:#ef7804;"></div>
<div style="left:523.2px;top:41.30799999999999px;width:26.8px;height:10.527px;background:#2f6da6;"></div>
<div style="left:594.1px;top:41.30799999999999px;width:85.8px;height:10.527px;background:#2f6da6;"></div>
<div style="left:523.2px;top:51.63499999999999px;width:26.8px;height:10.527px;background:#2f6da6;"></div>
<div style="left:594.1px;top:51.63499999999999px;width:85.8px;height:10.527px;background:#2f6da6;"></div>
<div style="left:523.2px;top:61.96199999999999px;width:26.8px;height:10.527px;background:#2f6da6;"></div>
<div style="left:594.1px;top:61.96199999999999px;width:85.8px;height:10.527px;background:#2f6da6;"></div>
<div style="left:523.2px;top:72.28899999999999px;width:26.8px;height:10.527px;background:#2f6da6;"></div>
<div style="left:594.1px;top:72.28899999999999px;width:85.8px;height:10.527px;background:#2f6da6;"></div>
<div style="left:523.2px;top:82.61599999999999px;width:26.8px;height:10.527px;background:#2f6da6;"></div>
<div style="left:594.1px;top:82.61599999999999px;width:85.8px;height:10.527px;background:#2f6da6;"></div>
<div style="left:523.2px;top:92.94299999999998px;width:26.8px;height:10.527px;background:#2f6da6;"></div>
<div style="left:594.1px;top:92.94299999999998px;width:85.8px;height:10.527px;background:#2f6da6;"></div>
<div style="left:523.2px;top:103.26999999999998px;width:26.8px;height:10.527px;background:#2f6da6;"></div>
<div style="left:594.1px;top:103.26999999999998px;width:85.8px;height:10.527px;background:#2f6da6;"></div>
<div style="left:523.2px;top:113.59699999999998px;width:26.8px;height:10.527px;background:#2f6da6;"></div>
<div style="left:594.1px;top:113.59699999999998px;width:85.8px;height:10.527px;background:#2f6da6;"></div>
<div style="left:523.2px;top:123.92399999999998px;width:26.8px;height:10.527px;background:#2f6da6;"></div>
<div style="left:594.1px;top:123.92399999999998px;width:85.8px;height:10.527px;background:#2f6da6;"></div>
<div style="left:523.2px;top:134.25099999999998px;width:26.8px;height:10.527px;background:#2f6da6;"></div>
<div style="left:594.1px;top:134.25099999999998px;width:85.8px;height:10.527px;background:#2f6da6;"></div>
<div style="left:523.2px;top:144.57799999999997px;width:26.8px;height:10.527px;background:#2f6da6;"></div>
<div style="left:594.1px;top:144.57799999999997px;width:85.8px;height:10.527px;background:#2f6da6;"></div>
<div style="left:477.29999999999995px;top:144.57799999999997px;width:45.90000000000009px;height:10.527px;background:#2f6da6;"></div>
<div style="left:523.2px;top:154.90499999999997px;width:26.8px;height:10.527px;background:#2f6da6;"></div>
<div style="left:594.1px;top:154.90499999999997px;width:85.8px;height:10.527px;background:#2f6da6;"></div>
<div style="left:523.2px;top:165.23199999999997px;width:26.8px;height:10.527px;background:#2f6da6;"></div>
<div style="left:594.1px;top:165.23199999999997px;width:85.8px;height:10.527px;background:#2f6da6;"></div>
<div style="left:523.2px;top:175.55899999999997px;width:26.8px;height:10.527px;background:#2f6da6;"></div>
<div style="left:594.1px;top:175.55899999999997px;width:85.8px;height:10.527px;background:#2f6da6;"></div>
<div style="left:523.2px;top:185.88599999999997px;width:26.8px;height:10.527px;background:#2f6da6;"></div>
<div style="left:594.1px;top:185.88599999999997px;width:85.8px;height:10.527px;background:#2f6da6;"></div>
<div style="left:523.2px;top:196.21299999999997px;width:26.8px;height:10.527px;background:#2f6da6;"></div>
<div style="left:594.1px;top:196.21299999999997px;width:85.8px;height:10.527px;background:#2f6da6;"></div>
<div style="left:523.2px;top:216.86699999999996px;width:26.8px;height:10.527px;background:#2f6da6;"></div>
<div style="left:594.1px;top:216.86699999999996px;width:85.8px;height:10.527px;background:#2f6da6;"></div>
<div style="left:523.2px;top:227.19399999999996px;width:26.8px;height:10.527px;background:#2f6da6;"></div>
<div style="left:594.1px;top:227.19399999999996px;width:85.8px;height:10.527px;background:#2f6da6;"></div>
<div style="left:523.2px;top:237.52099999999996px;width:26.8px;height:10.527px;background:#2f6da6;"></div>
<div style="left:594.1px;top:237.52099999999996px;width:85.8px;height:10.527px;background:#2f6da6;"></div>
<div style="left:523.2px;top:247.84799999999996px;width:26.8px;height:10.527px;background:#2f6da6;"></div>
<div style="left:594.1px;top:247.84799999999996px;width:85.8px;height:10.527px;background:#2f6da6;"></div>
<div style="left:523.2px;top:258.17499999999995px;width:26.8px;height:10.527px;background:#2f6da6;"></div>
<div style="left:594.1px;top:258.17499999999995px;width:85.8px;height:10.527px;background:#2f6da6;"></div>
<div style="left:523.2px;top:268.50199999999995px;width:26.8px;height:10.527px;background:#2f6da6;"></div>
<div style="left:594.1px;top:268.50199999999995px;width:85.8px;height:10.527px;background:#2f6da6;"></div>
<div style="left:523.2px;top:278.82899999999995px;width:26.8px;height:10.527px;background:#2f6da6;"></div>
<div style="left:594.1px;top:278.82899999999995px;width:85.8px;height:10.527px;background:#2f6da6;"></div>
<div style="left:523.2px;top:289.15599999999995px;width:26.8px;height:10.527px;background:#2f6da6;"></div>
<div style="left:594.1px;top:289.15599999999995px;width:85.8px;height:10.527px;background:#2f6da6;"></div>
<div style="left:523.2px;top:299.48299999999995px;width:26.8px;height:10.527px;background:#2f6da6;"></div>
<div style="left:594.1px;top:299.48299999999995px;width:85.8px;height:10.527px;background:#2f6da6;"></div>
<div style="left:523.2px;top:309.80999999999995px;width:26.8px;height:10.527px;background:#2f6da6;"></div>
<div style="left:594.1px;top:309.80999999999995px;width:85.8px;height:10.527px;background:#2f6da6;"></div>
<div style="left:523.2px;top:320.13699999999994px;width:26.8px;height:10.527px;background:#2f6da6;"></div>
<div style="left:594.1px;top:320.13699999999994px;width:85.8px;height:10.527px;background:#2f6da6;"></div>
<div style="left:523.2px;top:330.46399999999994px;width:26.8px;height:10.527px;background:#2f6da6;"></div>
<div style="left:594.1px;top:330.46399999999994px;width:85.8px;height:10.527px;background:#2f6da6;"></div>
<div style="left:523.2px;top:340.79099999999994px;width:26.8px;height:10.527px;background:#2f6da6;"></div>
<div style="left:594.1px;top:340.79099999999994px;width:85.8px;height:10.527px;background:#2f6da6;"></div>
<div style="left:477.29999999999995px;top:351.11799999999994px;width:45.90000000000009px;height:10.527px;background:#2f6da6;"></div>
<div style="left:523.2px;top:361.44499999999994px;width:26.8px;height:10.527px;background:#2f6da6;"></div>
<div style="left:594.1px;top:361.44499999999994px;width:85.8px;height:10.527px;background:#2f6da6;"></div>
<div style="left:523.2px;top:371.77199999999993px;width:26.8px;height:10.527px;background:#2f6da6;"></div>
<div style="left:594.1px;top:371.77199999999993px;width:85.8px;height:10.527px;background:#2f6da6;"></div>
<div style="left:523.2px;top:382.09899999999993px;width:26.8px;height:10.527px;background:#2f6da6;"></div>
<div style="left:594.1px;top:382.09899999999993px;width:85.8px;height:10.527px;background:#2f6da6;"></div>
<div style="left:523.2px;top:392.42599999999993px;width:26.8px;height:10.527px;background:#2f6da6;"></div>
<div style="left:594.1px;top:392.42599999999993px;width:85.8px;height:10.527px;background:#2f6da6;"></div>
<div style="left:477.29999999999995px;top:392.42599999999993px;width:45.90000000000009px;height:10.527px;background:#2f6da6;"></div>
<div style="left:523.2px;top:402.75299999999993px;width:26.8px;height:10.527px;background:#2f6da6;"></div>
<div style="left:594.1px;top:402.75299999999993px;width:85.8px;height:10.527px;background:#2f6da6;"></div>
<div style="left:16.200000000000003px;top:31.0px;width:19.6px;height:9.8px;box-sizing:border-box;border:1px solid #7a7a7a;"></div>
<span style="left:-264.50px;width:300px;text-align:right;top:-0.70px;font-size:8.31px;line-height:12px;color:#141414;font-weight:normal;transform:scaleX(0.83);-webkit-text-stroke:0.2px currentColor;transform-origin:100% 0;">2319</span>
<span style="left:-243.10px;width:300px;text-align:right;top:-0.70px;font-size:8.31px;line-height:12px;color:#141414;font-weight:normal;transform:scaleX(0.83);-webkit-text-stroke:0.2px currentColor;transform-origin:100% 0;">2173</span>
<span style="left:-227.60px;width:300px;text-align:right;top:-0.70px;font-size:8.31px;line-height:12px;color:#141414;font-weight:normal;transform:scaleX(0.83);-webkit-text-stroke:0.2px currentColor;transform-origin:100% 0;">1</span>
<span style="left:-205.70px;width:300px;text-align:right;top:-0.70px;font-size:8.31px;line-height:12px;color:#141414;font-weight:normal;transform:scaleX(0.83);-webkit-text-stroke:0.2px currentColor;transform-origin:100% 0;">1835</span>
<span style="left:96.90px;top:-0.70px;font-size:8.31px;line-height:12px;color:#141414;font-weight:normal;transform:scaleX(0.83);-webkit-text-stroke:0.2px currentColor;transform-origin:0 0;">Pesorre</span>
<span style="left:154.20px;top:-0.70px;font-size:8.31px;line-height:12px;color:#141414;font-weight:normal;transform:scaleX(0.83);-webkit-text-stroke:0.2px currentColor;transform-origin:0 0;">Zaldal</span>
<span style="left:211.20px;top:-0.70px;font-size:8.31px;line-height:12px;color:#141414;font-weight:normal;transform:scaleX(0.83);-webkit-text-stroke:0.2px currentColor;transform-origin:0 0;">25.06.1970</span>
<span style="left:264.60px;top:-0.70px;font-size:8.31px;line-height:12px;color:#141414;font-weight:normal;transform:scaleX(0.83);-webkit-text-stroke:0.2px currentColor;transform-origin:0 0;">17.01.2022</span>
<span style="left:304.60px;top:-0.70px;font-size:8.31px;line-height:12px;color:#141414;font-weight:normal;transform:scaleX(0.83);-webkit-text-stroke:0.2px currentColor;transform-origin:0 0;">28.01.2022</span>
<span style="left:344.90px;top:-0.70px;font-size:8.31px;line-height:12px;color:#141414;font-weight:normal;transform:scaleX(0.83);-webkit-text-stroke:0.2px currentColor;transform-origin:0 0;">12.09.2023</span>
<span style="left:406.40px;top:-0.70px;font-size:8.31px;line-height:12px;color:#141414;font-weight:normal;transform:scaleX(0.83);-webkit-text-stroke:0.2px currentColor;transform-origin:0 0;">04.07.2023</span>
<span style="left:479.80px;top:-0.70px;font-size:8.31px;line-height:12px;color:#141414;font-weight:normal;transform:scaleX(0.83);-webkit-text-stroke:0.2px currentColor;transform-origin:0 0;">12.09.2023</span>
<span style="left:248.40px;width:300px;text-align:right;top:-0.70px;font-size:8.31px;line-height:12px;color:#fff;font-weight:normal;transform:scaleX(0.83);-webkit-text-stroke:0.2px currentColor;transform-origin:100% 0;">18</span>
<span style="left:377.70px;width:300px;text-align:right;top:-0.70px;font-size:8.31px;line-height:12px;color:#fff;font-weight:normal;transform:scaleX(0.83);-webkit-text-stroke:0.2px currentColor;transform-origin:100% 0;">1</span>
<span style="left:745.20px;top:-0.70px;font-size:8.31px;line-height:12px;color:#141414;font-weight:normal;transform:scaleX(0.83);-webkit-text-stroke:0.2px currentColor;transform-origin:0 0;">AOK Plus Thüringen</span>
<span style="left:941.40px;top:-0.70px;font-size:8.31px;line-height:12px;color:#141414;font-weight:normal;transform:scaleX(0.83);-webkit-text-stroke:0.2px currentColor;transform-origin:0 0;">105998018</span>
<span style="left:981.20px;top:-0.70px;font-size:8.31px;line-height:12px;color:#141414;font-weight:normal;transform:scaleX(0.83);-webkit-text-stroke:0.2px currentColor;transform-origin:0 0;">441612217</span>
<span style="left:-264.50px;width:300px;text-align:right;top:9.63px;font-size:8.31px;line-height:12px;color:#141414;font-weight:normal;transform:scaleX(0.83);-webkit-text-stroke:0.2px currentColor;transform-origin:100% 0;">2374</span>
<span style="left:-243.10px;width:300px;text-align:right;top:9.63px;font-size:8.31px;line-height:12px;color:#141414;font-weight:normal;transform:scaleX(0.83);-webkit-text-stroke:0.2px currentColor;transform-origin:100% 0;">1371</span>
<span style="left:-227.60px;width:300px;text-align:right;top:9.63px;font-size:8.31px;line-height:12px;color:#141414;font-weight:normal;transform:scaleX(0.83);-webkit-text-stroke:0.2px currentColor;transform-origin:100% 0;">2</span>
<span style="left:-205.70px;width:300px;text-align:right;top:9.63px;font-size:8.31px;line-height:12px;color:#141414;font-weight:normal;transform:scaleX(0.83);-webkit-text-stroke:0.2px currentColor;transform-origin:100% 0;">1205</span>
<span style="left:96.90px;top:9.63px;font-size:8.31px;line-height:12px;color:#141414;font-weight:normal;transform:scaleX(0.83);-webkit-text-stroke:0.2px currentColor;transform-origin:0 0;">Zaena</span>
<span style="left:154.20px;top:9.63px;font-size:8.31px;line-height:12px;color:#141414;font-weight:normal;transform:scaleX(0.83);-webkit-text-stroke:0.2px currentColor;transform-origin:0 0;">Ekar</span>
<span style="left:211.20px;top:9.63px;font-size:8.31px;line-height:12px;color:#141414;font-weight:normal;transform:scaleX(0.83);-webkit-text-stroke:0.2px currentColor;transform-origin:0 0;">13.04.1954</span>
<span style="left:264.60px;top:9.63px;font-size:8.31px;line-height:12px;color:#141414;font-weight:normal;transform:scaleX(0.83);-webkit-text-stroke:0.2px currentColor;transform-origin:0 0;">15.03.2022</span>
<span style="left:304.60px;top:9.63px;font-size:8.31px;line-height:12px;color:#141414;font-weight:normal;transform:scaleX(0.83);-webkit-text-stroke:0.2px currentColor;transform-origin:0 0;">16.03.2022</span>
<span style="left:344.90px;top:9.63px;font-size:8.31px;line-height:12px;color:#141414;font-weight:normal;transform:scaleX(0.83);-webkit-text-stroke:0.2px currentColor;transform-origin:0 0;">03.10.2023</span>
<span style="left:406.40px;top:9.63px;font-size:8.31px;line-height:12px;color:#141414;font-weight:normal;transform:scaleX(0.83);-webkit-text-stroke:0.2px currentColor;transform-origin:0 0;">20.07.2023</span>
<span style="left:479.80px;top:9.63px;font-size:8.31px;line-height:12px;color:#141414;font-weight:normal;transform:scaleX(0.83);-webkit-text-stroke:0.2px currentColor;transform-origin:0 0;"></span>
<span style="left:248.40px;width:300px;text-align:right;top:9.63px;font-size:8.31px;line-height:12px;color:#fff;font-weight:normal;transform:scaleX(0.83);-webkit-text-stroke:0.2px currentColor;transform-origin:100% 0;">43</span>
<span style="left:377.70px;width:300px;text-align:right;top:9.63px;font-size:8.31px;line-height:12px;color:#fff;font-weight:normal;transform:scaleX(0.83);-webkit-text-stroke:0.2px currentColor;transform-origin:100% 0;">1</span>
<span style="left:745.20px;top:9.63px;font-size:8.31px;line-height:12px;color:#141414;font-weight:normal;transform:scaleX(0.83);-webkit-text-stroke:0.2px currentColor;transform-origin:0 0;">AOK Plus Thüringen</span>
<span style="left:941.40px;top:9.63px;font-size:8.31px;line-height:12px;color:#141414;font-weight:normal;transform:scaleX(0.83);-webkit-text-stroke:0.2px currentColor;transform-origin:0 0;">105998018</span>
<span style="left:981.20px;top:9.63px;font-size:8.31px;line-height:12px;color:#141414;font-weight:normal;transform:scaleX(0.83);-webkit-text-stroke:0.2px currentColor;transform-origin:0 0;">441112212</span>
<span style="left:-264.50px;width:300px;text-align:right;top:19.95px;font-size:8.31px;line-height:12px;color:#141414;font-weight:normal;transform:scaleX(0.83);-webkit-text-stroke:0.2px currentColor;transform-origin:100% 0;">2375</span>
<span style="left:-243.10px;width:300px;text-align:right;top:19.95px;font-size:8.31px;line-height:12px;color:#141414;font-weight:normal;transform:scaleX(0.83);-webkit-text-stroke:0.2px currentColor;transform-origin:100% 0;">2274</span>
<span style="left:-227.60px;width:300px;text-align:right;top:19.95px;font-size:8.31px;line-height:12px;color:#141414;font-weight:normal;transform:scaleX(0.83);-webkit-text-stroke:0.2px currentColor;transform-origin:100% 0;">1</span>
<span style="left:-205.70px;width:300px;text-align:right;top:19.95px;font-size:8.31px;line-height:12px;color:#141414;font-weight:normal;transform:scaleX(0.83);-webkit-text-stroke:0.2px currentColor;transform-origin:100% 0;">1204</span>
<span style="left:96.90px;top:19.95px;font-size:8.31px;line-height:12px;color:#141414;font-weight:normal;transform:scaleX(0.83);-webkit-text-stroke:0.2px currentColor;transform-origin:0 0;">Senwlag</span>
<span style="left:154.20px;top:19.95px;font-size:8.31px;line-height:12px;color:#141414;font-weight:normal;transform:scaleX(0.83);-webkit-text-stroke:0.2px currentColor;transform-origin:0 0;">Ekar</span>
<span style="left:211.20px;top:19.95px;font-size:8.31px;line-height:12px;color:#141414;font-weight:normal;transform:scaleX(0.83);-webkit-text-stroke:0.2px currentColor;transform-origin:0 0;">19.07.1951</span>
<span style="left:264.60px;top:19.95px;font-size:8.31px;line-height:12px;color:#141414;font-weight:normal;transform:scaleX(0.83);-webkit-text-stroke:0.2px currentColor;transform-origin:0 0;">15.03.2022</span>
<span style="left:304.60px;top:19.95px;font-size:8.31px;line-height:12px;color:#141414;font-weight:normal;transform:scaleX(0.83);-webkit-text-stroke:0.2px currentColor;transform-origin:0 0;">16.03.2022</span>
<span style="left:344.90px;top:19.95px;font-size:8.31px;line-height:12px;color:#141414;font-weight:normal;transform:scaleX(0.83);-webkit-text-stroke:0.2px currentColor;transform-origin:0 0;">03.10.2023</span>
<span style="left:406.40px;top:19.95px;font-size:8.31px;line-height:12px;color:#141414;font-weight:normal;transform:scaleX(0.83);-webkit-text-stroke:0.2px currentColor;transform-origin:0 0;">20.07.2023</span>
<span style="left:479.80px;top:19.95px;font-size:8.31px;line-height:12px;color:#141414;font-weight:normal;transform:scaleX(0.83);-webkit-text-stroke:0.2px currentColor;transform-origin:0 0;"></span>
<span style="left:248.40px;width:300px;text-align:right;top:19.95px;font-size:8.31px;line-height:12px;color:#fff;font-weight:normal;transform:scaleX(0.83);-webkit-text-stroke:0.2px currentColor;transform-origin:100% 0;">43</span>
<span style="left:377.70px;width:300px;text-align:right;top:19.95px;font-size:8.31px;line-height:12px;color:#fff;font-weight:normal;transform:scaleX(0.83);-webkit-text-stroke:0.2px currentColor;transform-origin:100% 0;">1</span>
<span style="left:745.20px;top:19.95px;font-size:8.31px;line-height:12px;color:#141414;font-weight:normal;transform:scaleX(0.83);-webkit-text-stroke:0.2px currentColor;transform-origin:0 0;">IKK classic</span>
<span style="left:941.40px;top:19.95px;font-size:8.31px;line-height:12px;color:#141414;font-weight:normal;transform:scaleX(0.83);-webkit-text-stroke:0.2px currentColor;transform-origin:0 0;">105903116</span>
<span style="left:981.20px;top:19.95px;font-size:8.31px;line-height:12px;color:#141414;font-weight:normal;transform:scaleX(0.83);-webkit-text-stroke:0.2px currentColor;transform-origin:0 0;">441612217</span>
<span style="left:-264.50px;width:300px;text-align:right;top:30.28px;font-size:8.31px;line-height:12px;color:#141414;font-weight:normal;transform:scaleX(0.83);-webkit-text-stroke:0.2px currentColor;transform-origin:100% 0;">2379</span>
<span style="left:-243.10px;width:300px;text-align:right;top:30.28px;font-size:8.31px;line-height:12px;color:#141414;font-weight:normal;transform:scaleX(0.83);-webkit-text-stroke:0.2px currentColor;transform-origin:100% 0;">924</span>
<span style="left:-227.60px;width:300px;text-align:right;top:30.28px;font-size:8.31px;line-height:12px;color:#141414;font-weight:normal;transform:scaleX(0.83);-webkit-text-stroke:0.2px currentColor;transform-origin:100% 0;">4</span>
<span style="left:-205.70px;width:300px;text-align:right;top:30.28px;font-size:8.31px;line-height:12px;color:#141414;font-weight:normal;transform:scaleX(0.83);-webkit-text-stroke:0.2px currentColor;transform-origin:100% 0;">1</span>
<span style="left:96.90px;top:30.28px;font-size:8.31px;line-height:12px;color:#141414;font-weight:normal;transform:scaleX(0.83);-webkit-text-stroke:0.2px currentColor;transform-origin:0 0;">Haogaseloa</span>
<span style="left:154.20px;top:30.28px;font-size:8.31px;line-height:12px;color:#141414;font-weight:normal;transform:scaleX(0.83);-webkit-text-stroke:0.2px currentColor;transform-origin:0 0;">Erzlachn</span>
<span style="left:211.20px;top:30.28px;font-size:8.31px;line-height:12px;color:#141414;font-weight:normal;transform:scaleX(0.83);-webkit-text-stroke:0.2px currentColor;transform-origin:0 0;">02.09.1951</span>
<span style="left:264.60px;top:30.28px;font-size:8.31px;line-height:12px;color:#141414;font-weight:normal;transform:scaleX(0.83);-webkit-text-stroke:0.2px currentColor;transform-origin:0 0;">15.03.2022</span>
<span style="left:304.60px;top:30.28px;font-size:8.31px;line-height:12px;color:#141414;font-weight:normal;transform:scaleX(0.83);-webkit-text-stroke:0.2px currentColor;transform-origin:0 0;">16.03.2022</span>
<span style="left:344.90px;top:30.28px;font-size:8.31px;line-height:12px;color:#141414;font-weight:normal;transform:scaleX(0.83);-webkit-text-stroke:0.2px currentColor;transform-origin:0 0;">05.04.2025</span>
<span style="left:406.40px;top:30.28px;font-size:8.31px;line-height:12px;color:#141414;font-weight:normal;transform:scaleX(0.83);-webkit-text-stroke:0.2px currentColor;transform-origin:0 0;">17.07.2023</span>
<span style="left:479.80px;top:30.28px;font-size:8.31px;line-height:12px;color:#141414;font-weight:normal;transform:scaleX(0.83);-webkit-text-stroke:0.2px currentColor;transform-origin:0 0;"></span>
<span style="left:248.40px;width:300px;text-align:right;top:30.28px;font-size:8.31px;line-height:12px;color:#141414;font-weight:normal;transform:scaleX(0.83);-webkit-text-stroke:0.2px currentColor;transform-origin:100% 0;">32</span>
<span style="left:377.70px;width:300px;text-align:right;top:30.28px;font-size:8.31px;line-height:12px;color:#141414;font-weight:normal;transform:scaleX(0.83);-webkit-text-stroke:0.2px currentColor;transform-origin:100% 0;"></span>
<span style="left:745.20px;top:30.28px;font-size:8.31px;line-height:12px;color:#141414;font-weight:normal;transform:scaleX(0.83);-webkit-text-stroke:0.2px currentColor;transform-origin:0 0;">TECHNIKER KRANKENKASSE</span>
<span style="left:941.40px;top:30.28px;font-size:8.31px;line-height:12px;color:#141414;font-weight:normal;transform:scaleX(0.83);-webkit-text-stroke:0.2px currentColor;transform-origin:0 0;">105077504</span>
<span style="left:981.20px;top:30.28px;font-size:8.31px;line-height:12px;color:#141414;font-weight:normal;transform:scaleX(0.83);-webkit-text-stroke:0.2px currentColor;transform-origin:0 0;">441612217</span>
<span style="left:-264.50px;width:300px;text-align:right;top:40.61px;font-size:8.31px;line-height:12px;color:#141414;font-weight:normal;transform:scaleX(0.83);-webkit-text-stroke:0.2px currentColor;transform-origin:100% 0;">2381</span>
<span style="left:-243.10px;width:300px;text-align:right;top:40.61px;font-size:8.31px;line-height:12px;color:#141414;font-weight:normal;transform:scaleX(0.83);-webkit-text-stroke:0.2px currentColor;transform-origin:100% 0;">2277</span>
<span style="left:-227.60px;width:300px;text-align:right;top:40.61px;font-size:8.31px;line-height:12px;color:#141414;font-weight:normal;transform:scaleX(0.83);-webkit-text-stroke:0.2px currentColor;transform-origin:100% 0;">1</span>
<span style="left:-205.70px;width:300px;text-align:right;top:40.61px;font-size:8.31px;line-height:12px;color:#141414;font-weight:normal;transform:scaleX(0.83);-webkit-text-stroke:0.2px currentColor;transform-origin:100% 0;">1899</span>
<span style="left:96.90px;top:40.61px;font-size:8.31px;line-height:12px;color:#141414;font-weight:normal;transform:scaleX(0.83);-webkit-text-stroke:0.2px currentColor;transform-origin:0 0;">Nesele</span>
<span style="left:154.20px;top:40.61px;font-size:8.31px;line-height:12px;color:#141414;font-weight:normal;transform:scaleX(0.83);-webkit-text-stroke:0.2px currentColor;transform-origin:0 0;">Zacp</span>
<span style="left:211.20px;top:40.61px;font-size:8.31px;line-height:12px;color:#141414;font-weight:normal;transform:scaleX(0.83);-webkit-text-stroke:0.2px currentColor;transform-origin:0 0;">01.04.1986</span>
<span style="left:264.60px;top:40.61px;font-size:8.31px;line-height:12px;color:#141414;font-weight:normal;transform:scaleX(0.83);-webkit-text-stroke:0.2px currentColor;transform-origin:0 0;">01.02.2022</span>
<span style="left:304.60px;top:40.61px;font-size:8.31px;line-height:12px;color:#141414;font-weight:normal;transform:scaleX(0.83);-webkit-text-stroke:0.2px currentColor;transform-origin:0 0;">09.02.2022</span>
<span style="left:344.90px;top:40.61px;font-size:8.31px;line-height:12px;color:#141414;font-weight:normal;transform:scaleX(0.83);-webkit-text-stroke:0.2px currentColor;transform-origin:0 0;">18.09.2023</span>
<span style="left:406.40px;top:40.61px;font-size:8.31px;line-height:12px;color:#141414;font-weight:normal;transform:scaleX(0.83);-webkit-text-stroke:0.2px currentColor;transform-origin:0 0;">06.07.2023</span>
<span style="left:479.80px;top:40.61px;font-size:8.31px;line-height:12px;color:#141414;font-weight:normal;transform:scaleX(0.83);-webkit-text-stroke:0.2px currentColor;transform-origin:0 0;">18.09.2023</span>
<span style="left:248.40px;width:300px;text-align:right;top:40.61px;font-size:8.31px;line-height:12px;color:#fff;font-weight:normal;transform:scaleX(0.83);-webkit-text-stroke:0.2px currentColor;transform-origin:100% 0;">30</span>
<span style="left:377.70px;width:300px;text-align:right;top:40.61px;font-size:8.31px;line-height:12px;color:#fff;font-weight:normal;transform:scaleX(0.83);-webkit-text-stroke:0.2px currentColor;transform-origin:100% 0;">1</span>
<span style="left:745.20px;top:40.61px;font-size:8.31px;line-height:12px;color:#141414;font-weight:normal;transform:scaleX(0.83);-webkit-text-stroke:0.2px currentColor;transform-origin:0 0;">TECHNIKER KRANKENKASSE</span>
<span style="left:941.40px;top:40.61px;font-size:8.31px;line-height:12px;color:#141414;font-weight:normal;transform:scaleX(0.83);-webkit-text-stroke:0.2px currentColor;transform-origin:0 0;">105077504</span>
<span style="left:981.20px;top:40.61px;font-size:8.31px;line-height:12px;color:#141414;font-weight:normal;transform:scaleX(0.83);-webkit-text-stroke:0.2px currentColor;transform-origin:0 0;">441612217</span>
<span style="left:-264.50px;width:300px;text-align:right;top:50.93px;font-size:8.31px;line-height:12px;color:#141414;font-weight:normal;transform:scaleX(0.83);-webkit-text-stroke:0.2px currentColor;transform-origin:100% 0;">2393</span>
<span style="left:-243.10px;width:300px;text-align:right;top:50.93px;font-size:8.31px;line-height:12px;color:#141414;font-weight:normal;transform:scaleX(0.83);-webkit-text-stroke:0.2px currentColor;transform-origin:100% 0;">2293</span>
<span style="left:-227.60px;width:300px;text-align:right;top:50.93px;font-size:8.31px;line-height:12px;color:#141414;font-weight:normal;transform:scaleX(0.83);-webkit-text-stroke:0.2px currentColor;transform-origin:100% 0;">1</span>
<span style="left:-205.70px;width:300px;text-align:right;top:50.93px;font-size:8.31px;line-height:12px;color:#141414;font-weight:normal;transform:scaleX(0.83);-webkit-text-stroke:0.2px currentColor;transform-origin:100% 0;">1912</span>
<span style="left:96.90px;top:50.93px;font-size:8.31px;line-height:12px;color:#141414;font-weight:normal;transform:scaleX(0.83);-webkit-text-stroke:0.2px currentColor;transform-origin:0 0;">Neneroje</span>
<span style="left:154.20px;top:50.93px;font-size:8.31px;line-height:12px;color:#141414;font-weight:normal;transform:scaleX(0.83);-webkit-text-stroke:0.2px currentColor;transform-origin:0 0;">Erzlachn</span>
<span style="left:211.20px;top:50.93px;font-size:8.31px;line-height:12px;color:#141414;font-weight:normal;transform:scaleX(0.83);-webkit-text-stroke:0.2px currentColor;transform-origin:0 0;">02.08.1947</span>
<span style="left:264.60px;top:50.93px;font-size:8.31px;line-height:12px;color:#141414;font-weight:normal;transform:scaleX(0.83);-webkit-text-stroke:0.2px currentColor;transform-origin:0 0;">03.03.2022</span>
<span style="left:304.60px;top:50.93px;font-size:8.31px;line-height:12px;color:#141414;font-weight:normal;transform:scaleX(0.83);-webkit-text-stroke:0.2px currentColor;transform-origin:0 0;">22.03.2022</span>
<span style="left:344.90px;top:50.93px;font-size:8.31px;line-height:12px;color:#141414;font-weight:normal;transform:scaleX(0.83);-webkit-text-stroke:0.2px currentColor;transform-origin:0 0;">19.09.2023</span>
<span style="left:406.40px;top:50.93px;font-size:8.31px;line-height:12px;color:#141414;font-weight:normal;transform:scaleX(0.83);-webkit-text-stroke:0.2px currentColor;transform-origin:0 0;">18.07.2023</span>
<span style="left:479.80px;top:50.93px;font-size:8.31px;line-height:12px;color:#141414;font-weight:normal;transform:scaleX(0.83);-webkit-text-stroke:0.2px currentColor;transform-origin:0 0;">19.09.2023</span>
<span style="left:248.40px;width:300px;text-align:right;top:50.93px;font-size:8.31px;line-height:12px;color:#fff;font-weight:normal;transform:scaleX(0.83);-webkit-text-stroke:0.2px currentColor;transform-origin:100% 0;">17</span>
<span style="left:377.70px;width:300px;text-align:right;top:50.93px;font-size:8.31px;line-height:12px;color:#fff;font-weight:normal;transform:scaleX(0.83);-webkit-text-stroke:0.2px currentColor;transform-origin:100% 0;">1</span>
<span style="left:745.20px;top:50.93px;font-size:8.31px;line-height:12px;color:#141414;font-weight:normal;transform:scaleX(0.83);-webkit-text-stroke:0.2px currentColor;transform-origin:0 0;">TECHNIKER KRANKENKASSE</span>
<span style="left:941.40px;top:50.93px;font-size:8.31px;line-height:12px;color:#141414;font-weight:normal;transform:scaleX(0.83);-webkit-text-stroke:0.2px currentColor;transform-origin:0 0;">105077504</span>
<span style="left:981.20px;top:50.93px;font-size:8.31px;line-height:12px;color:#141414;font-weight:normal;transform:scaleX(0.83);-webkit-text-stroke:0.2px currentColor;transform-origin:0 0;">441612217</span>
<span style="left:-264.50px;width:300px;text-align:right;top:61.26px;font-size:8.31px;line-height:12px;color:#141414;font-weight:normal;transform:scaleX(0.83);-webkit-text-stroke:0.2px currentColor;transform-origin:100% 0;">2404</span>
<span style="left:-243.10px;width:300px;text-align:right;top:61.26px;font-size:8.31px;line-height:12px;color:#141414;font-weight:normal;transform:scaleX(0.83);-webkit-text-stroke:0.2px currentColor;transform-origin:100% 0;">2302</span>
<span style="left:-227.60px;width:300px;text-align:right;top:61.26px;font-size:8.31px;line-height:12px;color:#141414;font-weight:normal;transform:scaleX(0.83);-webkit-text-stroke:0.2px currentColor;transform-origin:100% 0;">1</span>
<span style="left:-205.70px;width:300px;text-align:right;top:61.26px;font-size:8.31px;line-height:12px;color:#141414;font-weight:normal;transform:scaleX(0.83);-webkit-text-stroke:0.2px currentColor;transform-origin:100% 0;">7</span>
<span style="left:96.90px;top:61.26px;font-size:8.31px;line-height:12px;color:#141414;font-weight:normal;transform:scaleX(0.83);-webkit-text-stroke:0.2px currentColor;transform-origin:0 0;">Enone</span>
<span style="left:154.20px;top:61.26px;font-size:8.31px;line-height:12px;color:#141414;font-weight:normal;transform:scaleX(0.83);-webkit-text-stroke:0.2px currentColor;transform-origin:0 0;">Zeual</span>
<span style="left:211.20px;top:61.26px;font-size:8.31px;line-height:12px;color:#141414;font-weight:normal;transform:scaleX(0.83);-webkit-text-stroke:0.2px currentColor;transform-origin:0 0;">16.01.1942</span>
<span style="left:264.60px;top:61.26px;font-size:8.31px;line-height:12px;color:#141414;font-weight:normal;transform:scaleX(0.83);-webkit-text-stroke:0.2px currentColor;transform-origin:0 0;">17.03.2022</span>
<span style="left:304.60px;top:61.26px;font-size:8.31px;line-height:12px;color:#141414;font-weight:normal;transform:scaleX(0.83);-webkit-text-stroke:0.2px currentColor;transform-origin:0 0;">22.03.2022</span>
<span style="left:344.90px;top:61.26px;font-size:8.31px;line-height:12px;color:#141414;font-weight:normal;transform:scaleX(0.83);-webkit-text-stroke:0.2px currentColor;transform-origin:0 0;">27.09.2023</span>
<span style="left:406.40px;top:61.26px;font-size:8.31px;line-height:12px;color:#141414;font-weight:normal;transform:scaleX(0.83);-webkit-text-stroke:0.2px currentColor;transform-origin:0 0;">21.06.2023</span>
<span style="left:479.80px;top:61.26px;font-size:8.31px;line-height:12px;color:#141414;font-weight:normal;transform:scaleX(0.83);-webkit-text-stroke:0.2px currentColor;transform-origin:0 0;">27.09.2023</span>
<span style="left:248.40px;width:300px;text-align:right;top:61.26px;font-size:8.31px;line-height:12px;color:#fff;font-weight:normal;transform:scaleX(0.83);-webkit-text-stroke:0.2px currentColor;transform-origin:100% 0;">29</span>
<span style="left:377.70px;width:300px;text-align:right;top:61.26px;font-size:8.31px;line-height:12px;color:#fff;font-weight:normal;transform:scaleX(0.83);-webkit-text-stroke:0.2px currentColor;transform-origin:100% 0;">1</span>
<span style="left:745.20px;top:61.26px;font-size:8.31px;line-height:12px;color:#141414;font-weight:normal;transform:scaleX(0.83);-webkit-text-stroke:0.2px currentColor;transform-origin:0 0;">BARMER</span>
<span style="left:941.40px;top:61.26px;font-size:8.31px;line-height:12px;color:#141414;font-weight:normal;transform:scaleX(0.83);-webkit-text-stroke:0.2px currentColor;transform-origin:0 0;">105080008</span>
<span style="left:981.20px;top:61.26px;font-size:8.31px;line-height:12px;color:#141414;font-weight:normal;transform:scaleX(0.83);-webkit-text-stroke:0.2px currentColor;transform-origin:0 0;">441612217</span>
<span style="left:-264.50px;width:300px;text-align:right;top:71.59px;font-size:8.31px;line-height:12px;color:#141414;font-weight:normal;transform:scaleX(0.83);-webkit-text-stroke:0.2px currentColor;transform-origin:100% 0;">2407</span>
<span style="left:-243.10px;width:300px;text-align:right;top:71.59px;font-size:8.31px;line-height:12px;color:#141414;font-weight:normal;transform:scaleX(0.83);-webkit-text-stroke:0.2px currentColor;transform-origin:100% 0;">2307</span>
<span style="left:-227.60px;width:300px;text-align:right;top:71.59px;font-size:8.31px;line-height:12px;color:#141414;font-weight:normal;transform:scaleX(0.83);-webkit-text-stroke:0.2px currentColor;transform-origin:100% 0;">1</span>
<span style="left:-205.70px;width:300px;text-align:right;top:71.59px;font-size:8.31px;line-height:12px;color:#141414;font-weight:normal;transform:scaleX(0.83);-webkit-text-stroke:0.2px currentColor;transform-origin:100% 0;">1923</span>
<span style="left:96.90px;top:71.59px;font-size:8.31px;line-height:12px;color:#141414;font-weight:normal;transform:scaleX(0.83);-webkit-text-stroke:0.2px currentColor;transform-origin:0 0;">Ollana</span>
<span style="left:154.20px;top:71.59px;font-size:8.31px;line-height:12px;color:#141414;font-weight:normal;transform:scaleX(0.83);-webkit-text-stroke:0.2px currentColor;transform-origin:0 0;">Hetnmcha</span>
<span style="left:211.20px;top:71.59px;font-size:8.31px;line-height:12px;color:#141414;font-weight:normal;transform:scaleX(0.83);-webkit-text-stroke:0.2px currentColor;transform-origin:0 0;">26.02.1963</span>
<span style="left:264.60px;top:71.59px;font-size:8.31px;line-height:12px;color:#141414;font-weight:normal;transform:scaleX(0.83);-webkit-text-stroke:0.2px currentColor;transform-origin:0 0;">22.03.2022</span>
<span style="left:304.60px;top:71.59px;font-size:8.31px;line-height:12px;color:#141414;font-weight:normal;transform:scaleX(0.83);-webkit-text-stroke:0.2px currentColor;transform-origin:0 0;">30.03.2022</span>
<span style="left:344.90px;top:71.59px;font-size:8.31px;line-height:12px;color:#141414;font-weight:normal;transform:scaleX(0.83);-webkit-text-stroke:0.2px currentColor;transform-origin:0 0;">19.09.2023</span>
<span style="left:406.40px;top:71.59px;font-size:8.31px;line-height:12px;color:#141414;font-weight:normal;transform:scaleX(0.83);-webkit-text-stroke:0.2px currentColor;transform-origin:0 0;">21.07.2023</span>
<span style="left:479.80px;top:71.59px;font-size:8.31px;line-height:12px;color:#141414;font-weight:normal;transform:scaleX(0.83);-webkit-text-stroke:0.2px currentColor;transform-origin:0 0;">19.09.2023</span>
<span style="left:248.40px;width:300px;text-align:right;top:71.59px;font-size:8.31px;line-height:12px;color:#fff;font-weight:normal;transform:scaleX(0.83);-webkit-text-stroke:0.2px currentColor;transform-origin:100% 0;">33</span>
<span style="left:377.70px;width:300px;text-align:right;top:71.59px;font-size:8.31px;line-height:12px;color:#fff;font-weight:normal;transform:scaleX(0.83);-webkit-text-stroke:0.2px currentColor;transform-origin:100% 0;">1</span>
<span style="left:745.20px;top:71.59px;font-size:8.31px;line-height:12px;color:#141414;font-weight:normal;transform:scaleX(0.83);-webkit-text-stroke:0.2px currentColor;transform-origin:0 0;">IKK Classic (Ost)</span>
<span style="left:941.40px;top:71.59px;font-size:8.31px;line-height:12px;color:#141414;font-weight:normal;transform:scaleX(0.83);-webkit-text-stroke:0.2px currentColor;transform-origin:0 0;">107202793</span>
<span style="left:981.20px;top:71.59px;font-size:8.31px;line-height:12px;color:#141414;font-weight:normal;transform:scaleX(0.83);-webkit-text-stroke:0.2px currentColor;transform-origin:0 0;">441112212</span>
<span style="left:-264.50px;width:300px;text-align:right;top:81.92px;font-size:8.31px;line-height:12px;color:#141414;font-weight:normal;transform:scaleX(0.83);-webkit-text-stroke:0.2px currentColor;transform-origin:100% 0;">2451</span>
<span style="left:-243.10px;width:300px;text-align:right;top:81.92px;font-size:8.31px;line-height:12px;color:#141414;font-weight:normal;transform:scaleX(0.83);-webkit-text-stroke:0.2px currentColor;transform-origin:100% 0;">2376</span>
<span style="left:-227.60px;width:300px;text-align:right;top:81.92px;font-size:8.31px;line-height:12px;color:#141414;font-weight:normal;transform:scaleX(0.83);-webkit-text-stroke:0.2px currentColor;transform-origin:100% 0;">1</span>
<span style="left:-205.70px;width:300px;text-align:right;top:81.92px;font-size:8.31px;line-height:12px;color:#141414;font-weight:normal;transform:scaleX(0.83);-webkit-text-stroke:0.2px currentColor;transform-origin:100% 0;">1974</span>
<span style="left:96.90px;top:81.92px;font-size:8.31px;line-height:12px;color:#141414;font-weight:normal;transform:scaleX(0.83);-webkit-text-stroke:0.2px currentColor;transform-origin:0 0;">Jarm</span>
<span style="left:154.20px;top:81.92px;font-size:8.31px;line-height:12px;color:#141414;font-weight:normal;transform:scaleX(0.83);-webkit-text-stroke:0.2px currentColor;transform-origin:0 0;">Elnum</span>
<span style="left:211.20px;top:81.92px;font-size:8.31px;line-height:12px;color:#141414;font-weight:normal;transform:scaleX(0.83);-webkit-text-stroke:0.2px currentColor;transform-origin:0 0;">06.07.1970</span>
<span style="left:264.60px;top:81.92px;font-size:8.31px;line-height:12px;color:#141414;font-weight:normal;transform:scaleX(0.83);-webkit-text-stroke:0.2px currentColor;transform-origin:0 0;">09.05.2022</span>
<span style="left:304.60px;top:81.92px;font-size:8.31px;line-height:12px;color:#141414;font-weight:normal;transform:scaleX(0.83);-webkit-text-stroke:0.2px currentColor;transform-origin:0 0;">12.05.2022</span>
<span style="left:344.90px;top:81.92px;font-size:8.31px;line-height:12px;color:#141414;font-weight:normal;transform:scaleX(0.83);-webkit-text-stroke:0.2px currentColor;transform-origin:0 0;">09.11.2023</span>
<span style="left:406.40px;top:81.92px;font-size:8.31px;line-height:12px;color:#141414;font-weight:normal;transform:scaleX(0.83);-webkit-text-stroke:0.2px currentColor;transform-origin:0 0;">19.06.2023</span>
<span style="left:479.80px;top:81.92px;font-size:8.31px;line-height:12px;color:#141414;font-weight:normal;transform:scaleX(0.83);-webkit-text-stroke:0.2px currentColor;transform-origin:0 0;">09.11.2023</span>
<span style="left:248.40px;width:300px;text-align:right;top:81.92px;font-size:8.31px;line-height:12px;color:#fff;font-weight:normal;transform:scaleX(0.83);-webkit-text-stroke:0.2px currentColor;transform-origin:100% 0;">25</span>
<span style="left:377.70px;width:300px;text-align:right;top:81.92px;font-size:8.31px;line-height:12px;color:#fff;font-weight:normal;transform:scaleX(0.83);-webkit-text-stroke:0.2px currentColor;transform-origin:100% 0;">1</span>
<span style="left:745.20px;top:81.92px;font-size:8.31px;line-height:12px;color:#141414;font-weight:normal;transform:scaleX(0.83);-webkit-text-stroke:0.2px currentColor;transform-origin:0 0;">DAK Gesundheit</span>
<span style="left:941.40px;top:81.92px;font-size:8.31px;line-height:12px;color:#141414;font-weight:normal;transform:scaleX(0.83);-webkit-text-stroke:0.2px currentColor;transform-origin:0 0;">105836717</span>
<span style="left:981.20px;top:81.92px;font-size:8.31px;line-height:12px;color:#141414;font-weight:normal;transform:scaleX(0.83);-webkit-text-stroke:0.2px currentColor;transform-origin:0 0;">441612217</span>
<span style="left:-264.50px;width:300px;text-align:right;top:92.24px;font-size:8.31px;line-height:12px;color:#141414;font-weight:normal;transform:scaleX(0.83);-webkit-text-stroke:0.2px currentColor;transform-origin:100% 0;">2452</span>
<span style="left:-243.10px;width:300px;text-align:right;top:92.24px;font-size:8.31px;line-height:12px;color:#141414;font-weight:normal;transform:scaleX(0.83);-webkit-text-stroke:0.2px currentColor;transform-origin:100% 0;">2377</span>
<span style="left:-227.60px;width:300px;text-align:right;top:92.24px;font-size:8.31px;line-height:12px;color:#141414;font-weight:normal;transform:scaleX(0.83);-webkit-text-stroke:0.2px currentColor;transform-origin:100% 0;">1</span>
<span style="left:-205.70px;width:300px;text-align:right;top:92.24px;font-size:8.31px;line-height:12px;color:#141414;font-weight:normal;transform:scaleX(0.83);-webkit-text-stroke:0.2px currentColor;transform-origin:100% 0;">1975</span>
<span style="left:96.90px;top:92.24px;font-size:8.31px;line-height:12px;color:#141414;font-weight:normal;transform:scaleX(0.83);-webkit-text-stroke:0.2px currentColor;transform-origin:0 0;">Ulfa</span>
<span style="left:154.20px;top:92.24px;font-size:8.31px;line-height:12px;color:#141414;font-weight:normal;transform:scaleX(0.83);-webkit-text-stroke:0.2px currentColor;transform-origin:0 0;">Fietig</span>
<span style="left:211.20px;top:92.24px;font-size:8.31px;line-height:12px;color:#141414;font-weight:normal;transform:scaleX(0.83);-webkit-text-stroke:0.2px currentColor;transform-origin:0 0;">18.11.1955</span>
<span style="left:264.60px;top:92.24px;font-size:8.31px;line-height:12px;color:#141414;font-weight:normal;transform:scaleX(0.83);-webkit-text-stroke:0.2px currentColor;transform-origin:0 0;">05.05.2022</span>
<span style="left:304.60px;top:92.24px;font-size:8.31px;line-height:12px;color:#141414;font-weight:normal;transform:scaleX(0.83);-webkit-text-stroke:0.2px currentColor;transform-origin:0 0;">09.05.2022</span>
<span style="left:344.90px;top:92.24px;font-size:8.31px;line-height:12px;color:#141414;font-weight:normal;transform:scaleX(0.83);-webkit-text-stroke:0.2px currentColor;transform-origin:0 0;">27.10.2023</span>
<span style="left:406.40px;top:92.24px;font-size:8.31px;line-height:12px;color:#141414;font-weight:normal;transform:scaleX(0.83);-webkit-text-stroke:0.2px currentColor;transform-origin:0 0;">25.07.2023</span>
<span style="left:479.80px;top:92.24px;font-size:8.31px;line-height:12px;color:#141414;font-weight:normal;transform:scaleX(0.83);-webkit-text-stroke:0.2px currentColor;transform-origin:0 0;">27.10.2023</span>
<span style="left:248.40px;width:300px;text-align:right;top:92.24px;font-size:8.31px;line-height:12px;color:#fff;font-weight:normal;transform:scaleX(0.83);-webkit-text-stroke:0.2px currentColor;transform-origin:100% 0;">23</span>
<span style="left:377.70px;width:300px;text-align:right;top:92.24px;font-size:8.31px;line-height:12px;color:#fff;font-weight:normal;transform:scaleX(0.83);-webkit-text-stroke:0.2px currentColor;transform-origin:100% 0;">1</span>
<span style="left:745.20px;top:92.24px;font-size:8.31px;line-height:12px;color:#141414;font-weight:normal;transform:scaleX(0.83);-webkit-text-stroke:0.2px currentColor;transform-origin:0 0;">IKK Classic (Ost)</span>
<span style="left:941.40px;top:92.24px;font-size:8.31px;line-height:12px;color:#141414;font-weight:normal;transform:scaleX(0.83);-webkit-text-stroke:0.2px currentColor;transform-origin:0 0;">107202793</span>
<span style="left:981.20px;top:92.24px;font-size:8.31px;line-height:12px;color:#141414;font-weight:normal;transform:scaleX(0.83);-webkit-text-stroke:0.2px currentColor;transform-origin:0 0;">441112212</span>
<span style="left:-264.50px;width:300px;text-align:right;top:102.57px;font-size:8.31px;line-height:12px;color:#141414;font-weight:normal;transform:scaleX(0.83);-webkit-text-stroke:0.2px currentColor;transform-origin:100% 0;">2454</span>
<span style="left:-243.10px;width:300px;text-align:right;top:102.57px;font-size:8.31px;line-height:12px;color:#141414;font-weight:normal;transform:scaleX(0.83);-webkit-text-stroke:0.2px currentColor;transform-origin:100% 0;">2151</span>
<span style="left:-227.60px;width:300px;text-align:right;top:102.57px;font-size:8.31px;line-height:12px;color:#141414;font-weight:normal;transform:scaleX(0.83);-webkit-text-stroke:0.2px currentColor;transform-origin:100% 0;">2</span>
<span style="left:-205.70px;width:300px;text-align:right;top:102.57px;font-size:8.31px;line-height:12px;color:#141414;font-weight:normal;transform:scaleX(0.83);-webkit-text-stroke:0.2px currentColor;transform-origin:100% 0;">1816</span>
<span style="left:96.90px;top:102.57px;font-size:8.31px;line-height:12px;color:#141414;font-weight:normal;transform:scaleX(0.83);-webkit-text-stroke:0.2px currentColor;transform-origin:0 0;">Haopa</span>
<span style="left:154.20px;top:102.57px;font-size:8.31px;line-height:12px;color:#141414;font-weight:normal;transform:scaleX(0.83);-webkit-text-stroke:0.2px currentColor;transform-origin:0 0;">Zaldmett</span>
<span style="left:211.20px;top:102.57px;font-size:8.31px;line-height:12px;color:#141414;font-weight:normal;transform:scaleX(0.83);-webkit-text-stroke:0.2px currentColor;transform-origin:0 0;">24.01.1961</span>
<span style="left:264.60px;top:102.57px;font-size:8.31px;line-height:12px;color:#141414;font-weight:normal;transform:scaleX(0.83);-webkit-text-stroke:0.2px currentColor;transform-origin:0 0;">10.05.2022</span>
<span style="left:304.60px;top:102.57px;font-size:8.31px;line-height:12px;color:#141414;font-weight:normal;transform:scaleX(0.83);-webkit-text-stroke:0.2px currentColor;transform-origin:0 0;">18.05.2022</span>
<span style="left:344.90px;top:102.57px;font-size:8.31px;line-height:12px;color:#141414;font-weight:normal;transform:scaleX(0.83);-webkit-text-stroke:0.2px currentColor;transform-origin:0 0;">06.07.2025</span>
<span style="left:406.40px;top:102.57px;font-size:8.31px;line-height:12px;color:#141414;font-weight:normal;transform:scaleX(0.83);-webkit-text-stroke:0.2px currentColor;transform-origin:0 0;">19.07.2023</span>
<span style="left:479.80px;top:102.57px;font-size:8.31px;line-height:12px;color:#141414;font-weight:normal;transform:scaleX(0.83);-webkit-text-stroke:0.2px currentColor;transform-origin:0 0;"></span>
<span style="left:248.40px;width:300px;text-align:right;top:102.57px;font-size:8.31px;line-height:12px;color:#fff;font-weight:normal;transform:scaleX(0.83);-webkit-text-stroke:0.2px currentColor;transform-origin:100% 0;">18</span>
<span style="left:377.70px;width:300px;text-align:right;top:102.57px;font-size:8.31px;line-height:12px;color:#fff;font-weight:normal;transform:scaleX(0.83);-webkit-text-stroke:0.2px currentColor;transform-origin:100% 0;">1</span>
<span style="left:745.20px;top:102.57px;font-size:8.31px;line-height:12px;color:#141414;font-weight:normal;transform:scaleX(0.83);-webkit-text-stroke:0.2px currentColor;transform-origin:0 0;">TECHNIKER KRANKENKASSE</span>
<span style="left:941.40px;top:102.57px;font-size:8.31px;line-height:12px;color:#141414;font-weight:normal;transform:scaleX(0.83);-webkit-text-stroke:0.2px currentColor;transform-origin:0 0;">105077504</span>
<span style="left:981.20px;top:102.57px;font-size:8.31px;line-height:12px;color:#141414;font-weight:normal;transform:scaleX(0.83);-webkit-text-stroke:0.2px currentColor;transform-origin:0 0;">441612217</span>
<span style="left:-264.50px;width:300px;text-align:right;top:112.90px;font-size:8.31px;line-height:12px;color:#141414;font-weight:normal;transform:scaleX(0.83);-webkit-text-stroke:0.2px currentColor;transform-origin:100% 0;">2456</span>
<span style="left:-243.10px;width:300px;text-align:right;top:112.90px;font-size:8.31px;line-height:12px;color:#141414;font-weight:normal;transform:scaleX(0.83);-webkit-text-stroke:0.2px currentColor;transform-origin:100% 0;">2378</span>
<span style="left:-227.60px;width:300px;text-align:right;top:112.90px;font-size:8.31px;line-height:12px;color:#141414;font-weight:normal;transform:scaleX(0.83);-webkit-text-stroke:0.2px currentColor;transform-origin:100% 0;">1</span>
<span style="left:-205.70px;width:300px;text-align:right;top:112.90px;font-size:8.31px;line-height:12px;color:#141414;font-weight:normal;transform:scaleX(0.83);-webkit-text-stroke:0.2px currentColor;transform-origin:100% 0;">174</span>
<span style="left:96.90px;top:112.90px;font-size:8.31px;line-height:12px;color:#141414;font-weight:normal;transform:scaleX(0.83);-webkit-text-stroke:0.2px currentColor;transform-origin:0 0;">Ulmure</span>
<span style="left:154.20px;top:112.90px;font-size:8.31px;line-height:12px;color:#141414;font-weight:normal;transform:scaleX(0.83);-webkit-text-stroke:0.2px currentColor;transform-origin:0 0;">Hammarzelnh</span>
<span style="left:211.20px;top:112.90px;font-size:8.31px;line-height:12px;color:#141414;font-weight:normal;transform:scaleX(0.83);-webkit-text-stroke:0.2px currentColor;transform-origin:0 0;">17.03.1952</span>
<span style="left:264.60px;top:112.90px;font-size:8.31px;line-height:12px;color:#141414;font-weight:normal;transform:scaleX(0.83);-webkit-text-stroke:0.2px currentColor;transform-origin:0 0;">12.04.2022</span>
<span style="left:304.60px;top:112.90px;font-size:8.31px;line-height:12px;color:#141414;font-weight:normal;transform:scaleX(0.83);-webkit-text-stroke:0.2px currentColor;transform-origin:0 0;">02.05.2022</span>
<span style="left:344.90px;top:112.90px;font-size:8.31px;line-height:12px;color:#141414;font-weight:normal;transform:scaleX(0.83);-webkit-text-stroke:0.2px currentColor;transform-origin:0 0;">29.10.2023</span>
<span style="left:406.40px;top:112.90px;font-size:8.31px;line-height:12px;color:#141414;font-weight:normal;transform:scaleX(0.83);-webkit-text-stroke:0.2px currentColor;transform-origin:0 0;">07.07.2023</span>
<span style="left:479.80px;top:112.90px;font-size:8.31px;line-height:12px;color:#141414;font-weight:normal;transform:scaleX(0.83);-webkit-text-stroke:0.2px currentColor;transform-origin:0 0;">29.10.2023</span>
<span style="left:248.40px;width:300px;text-align:right;top:112.90px;font-size:8.31px;line-height:12px;color:#fff;font-weight:normal;transform:scaleX(0.83);-webkit-text-stroke:0.2px currentColor;transform-origin:100% 0;">37</span>
<span style="left:377.70px;width:300px;text-align:right;top:112.90px;font-size:8.31px;line-height:12px;color:#fff;font-weight:normal;transform:scaleX(0.83);-webkit-text-stroke:0.2px currentColor;transform-origin:100% 0;">1</span>
<span style="left:745.20px;top:112.90px;font-size:8.31px;line-height:12px;color:#141414;font-weight:normal;transform:scaleX(0.83);-webkit-text-stroke:0.2px currentColor;transform-origin:0 0;">DAK Gesundheit</span>
<span style="left:941.40px;top:112.90px;font-size:8.31px;line-height:12px;color:#141414;font-weight:normal;transform:scaleX(0.83);-webkit-text-stroke:0.2px currentColor;transform-origin:0 0;">105836717</span>
<span style="left:981.20px;top:112.90px;font-size:8.31px;line-height:12px;color:#141414;font-weight:normal;transform:scaleX(0.83);-webkit-text-stroke:0.2px currentColor;transform-origin:0 0;">441112212</span>
<span style="left:-264.50px;width:300px;text-align:right;top:123.22px;font-size:8.31px;line-height:12px;color:#141414;font-weight:normal;transform:scaleX(0.83);-webkit-text-stroke:0.2px currentColor;transform-origin:100% 0;">2465</span>
<span style="left:-243.10px;width:300px;text-align:right;top:123.22px;font-size:8.31px;line-height:12px;color:#141414;font-weight:normal;transform:scaleX(0.83);-webkit-text-stroke:0.2px currentColor;transform-origin:100% 0;">2389</span>
<span style="left:-227.60px;width:300px;text-align:right;top:123.22px;font-size:8.31px;line-height:12px;color:#141414;font-weight:normal;transform:scaleX(0.83);-webkit-text-stroke:0.2px currentColor;transform-origin:100% 0;">1</span>
<span style="left:-205.70px;width:300px;text-align:right;top:123.22px;font-size:8.31px;line-height:12px;color:#141414;font-weight:normal;transform:scaleX(0.83);-webkit-text-stroke:0.2px currentColor;transform-origin:100% 0;">1986</span>
<span style="left:96.90px;top:123.22px;font-size:8.31px;line-height:12px;color:#141414;font-weight:normal;transform:scaleX(0.83);-webkit-text-stroke:0.2px currentColor;transform-origin:0 0;">Ollon</span>
<span style="left:154.20px;top:123.22px;font-size:8.31px;line-height:12px;color:#141414;font-weight:normal;transform:scaleX(0.83);-webkit-text-stroke:0.2px currentColor;transform-origin:0 0;">Höht</span>
<span style="left:211.20px;top:123.22px;font-size:8.31px;line-height:12px;color:#141414;font-weight:normal;transform:scaleX(0.83);-webkit-text-stroke:0.2px currentColor;transform-origin:0 0;">21.06.1980</span>
<span style="left:264.60px;top:123.22px;font-size:8.31px;line-height:12px;color:#141414;font-weight:normal;transform:scaleX(0.83);-webkit-text-stroke:0.2px currentColor;transform-origin:0 0;">06.10.2021</span>
<span style="left:304.60px;top:123.22px;font-size:8.31px;line-height:12px;color:#141414;font-weight:normal;transform:scaleX(0.83);-webkit-text-stroke:0.2px currentColor;transform-origin:0 0;">23.05.2022</span>
<span style="left:344.90px;top:123.22px;font-size:8.31px;line-height:12px;color:#141414;font-weight:normal;transform:scaleX(0.83);-webkit-text-stroke:0.2px currentColor;transform-origin:0 0;">04.12.2023</span>
<span style="left:406.40px;top:123.22px;font-size:8.31px;line-height:12px;color:#141414;font-weight:normal;transform:scaleX(0.83);-webkit-text-stroke:0.2px currentColor;transform-origin:0 0;">21.07.2023</span>
<span style="left:479.80px;top:123.22px;font-size:8.31px;line-height:12px;color:#141414;font-weight:normal;transform:scaleX(0.83);-webkit-text-stroke:0.2px currentColor;transform-origin:0 0;">04.12.2023</span>
<span style="left:248.40px;width:300px;text-align:right;top:123.22px;font-size:8.31px;line-height:12px;color:#fff;font-weight:normal;transform:scaleX(0.83);-webkit-text-stroke:0.2px currentColor;transform-origin:100% 0;">31</span>
<span style="left:377.70px;width:300px;text-align:right;top:123.22px;font-size:8.31px;line-height:12px;color:#fff;font-weight:normal;transform:scaleX(0.83);-webkit-text-stroke:0.2px currentColor;transform-origin:100% 0;">1</span>
<span style="left:745.20px;top:123.22px;font-size:8.31px;line-height:12px;color:#141414;font-weight:normal;transform:scaleX(0.83);-webkit-text-stroke:0.2px currentColor;transform-origin:0 0;">TECHNIKER KRANKENKASSE</span>
<span style="left:941.40px;top:123.22px;font-size:8.31px;line-height:12px;color:#141414;font-weight:normal;transform:scaleX(0.83);-webkit-text-stroke:0.2px currentColor;transform-origin:0 0;">105077504</span>
<span style="left:981.20px;top:123.22px;font-size:8.31px;line-height:12px;color:#141414;font-weight:normal;transform:scaleX(0.83);-webkit-text-stroke:0.2px currentColor;transform-origin:0 0;">441112212</span>
<span style="left:-264.50px;width:300px;text-align:right;top:133.55px;font-size:8.31px;line-height:12px;color:#141414;font-weight:normal;transform:scaleX(0.83);-webkit-text-stroke:0.2px currentColor;transform-origin:100% 0;">2471</span>
<span style="left:-243.10px;width:300px;text-align:right;top:133.55px;font-size:8.31px;line-height:12px;color:#141414;font-weight:normal;transform:scaleX(0.83);-webkit-text-stroke:0.2px currentColor;transform-origin:100% 0;">2398</span>
<span style="left:-227.60px;width:300px;text-align:right;top:133.55px;font-size:8.31px;line-height:12px;color:#141414;font-weight:normal;transform:scaleX(0.83);-webkit-text-stroke:0.2px currentColor;transform-origin:100% 0;">1</span>
<span style="left:-205.70px;width:300px;text-align:right;top:133.55px;font-size:8.31px;line-height:12px;color:#141414;font-weight:normal;transform:scaleX(0.83);-webkit-text-stroke:0.2px currentColor;transform-origin:100% 0;">8</span>
<span style="left:96.90px;top:133.55px;font-size:8.31px;line-height:12px;color:#141414;font-weight:normal;transform:scaleX(0.83);-webkit-text-stroke:0.2px currentColor;transform-origin:0 0;">Chlomne</span>
<span style="left:154.20px;top:133.55px;font-size:8.31px;line-height:12px;color:#141414;font-weight:normal;transform:scaleX(0.83);-webkit-text-stroke:0.2px currentColor;transform-origin:0 0;">Zaldtal</span>
<span style="left:211.20px;top:133.55px;font-size:8.31px;line-height:12px;color:#141414;font-weight:normal;transform:scaleX(0.83);-webkit-text-stroke:0.2px currentColor;transform-origin:0 0;">20.09.1943</span>
<span style="left:264.60px;top:133.55px;font-size:8.31px;line-height:12px;color:#141414;font-weight:normal;transform:scaleX(0.83);-webkit-text-stroke:0.2px currentColor;transform-origin:0 0;">11.05.2022</span>
<span style="left:304.60px;top:133.55px;font-size:8.31px;line-height:12px;color:#141414;font-weight:normal;transform:scaleX(0.83);-webkit-text-stroke:0.2px currentColor;transform-origin:0 0;">17.05.2022</span>
<span style="left:344.90px;top:133.55px;font-size:8.31px;line-height:12px;color:#141414;font-weight:normal;transform:scaleX(0.83);-webkit-text-stroke:0.2px currentColor;transform-origin:0 0;">07.12.2023</span>
<span style="left:406.40px;top:133.55px;font-size:8.31px;line-height:12px;color:#141414;font-weight:normal;transform:scaleX(0.83);-webkit-text-stroke:0.2px currentColor;transform-origin:0 0;">26.05.2023</span>
<span style="left:479.80px;top:133.55px;font-size:8.31px;line-height:12px;color:#141414;font-weight:normal;transform:scaleX(0.83);-webkit-text-stroke:0.2px currentColor;transform-origin:0 0;">07.12.2023</span>
<span style="left:248.40px;width:300px;text-align:right;top:133.55px;font-size:8.31px;line-height:12px;color:#fff;font-weight:normal;transform:scaleX(0.83);-webkit-text-stroke:0.2px currentColor;transform-origin:100% 0;">27</span>
<span style="left:377.70px;width:300px;text-align:right;top:133.55px;font-size:8.31px;line-height:12px;color:#fff;font-weight:normal;transform:scaleX(0.83);-webkit-text-stroke:0.2px currentColor;transform-origin:100% 0;">1</span>
<span style="left:745.20px;top:133.55px;font-size:8.31px;line-height:12px;color:#141414;font-weight:normal;transform:scaleX(0.83);-webkit-text-stroke:0.2px currentColor;transform-origin:0 0;">BKK 24/Ost</span>
<span style="left:941.40px;top:133.55px;font-size:8.31px;line-height:12px;color:#141414;font-weight:normal;transform:scaleX(0.83);-webkit-text-stroke:0.2px currentColor;transform-origin:0 0;">102732316</span>
<span style="left:981.20px;top:133.55px;font-size:8.31px;line-height:12px;color:#141414;font-weight:normal;transform:scaleX(0.83);-webkit-text-stroke:0.2px currentColor;transform-origin:0 0;">441612217</span>
<span style="left:-264.50px;width:300px;text-align:right;top:143.88px;font-size:8.31px;line-height:12px;color:#141414;font-weight:normal;transform:scaleX(0.83);-webkit-text-stroke:0.2px currentColor;transform-origin:100% 0;">2480</span>
<span style="left:-243.10px;width:300px;text-align:right;top:143.88px;font-size:8.31px;line-height:12px;color:#141414;font-weight:normal;transform:scaleX(0.83);-webkit-text-stroke:0.2px currentColor;transform-origin:100% 0;">2406</span>
<span style="left:-227.60px;width:300px;text-align:right;top:143.88px;font-size:8.31px;line-height:12px;color:#141414;font-weight:normal;transform:scaleX(0.83);-webkit-text-stroke:0.2px currentColor;transform-origin:100% 0;">1</span>
<span style="left:-205.70px;width:300px;text-align:right;top:143.88px;font-size:8.31px;line-height:12px;color:#141414;font-weight:normal;transform:scaleX(0.83);-webkit-text-stroke:0.2px currentColor;transform-origin:100% 0;">1995</span>
<span style="left:96.90px;top:143.88px;font-size:8.31px;line-height:12px;color:#141414;font-weight:normal;transform:scaleX(0.83);-webkit-text-stroke:0.2px currentColor;transform-origin:0 0;">Pelon</span>
<span style="left:154.20px;top:143.88px;font-size:8.31px;line-height:12px;color:#141414;font-weight:normal;transform:scaleX(0.83);-webkit-text-stroke:0.2px currentColor;transform-origin:0 0;">Palt</span>
<span style="left:211.20px;top:143.88px;font-size:8.31px;line-height:12px;color:#141414;font-weight:normal;transform:scaleX(0.83);-webkit-text-stroke:0.2px currentColor;transform-origin:0 0;">30.06.1962</span>
<span style="left:264.60px;top:143.88px;font-size:8.31px;line-height:12px;color:#141414;font-weight:normal;transform:scaleX(0.83);-webkit-text-stroke:0.2px currentColor;transform-origin:0 0;">25.05.2022</span>
<span style="left:304.60px;top:143.88px;font-size:8.31px;line-height:12px;color:#141414;font-weight:normal;transform:scaleX(0.83);-webkit-text-stroke:0.2px currentColor;transform-origin:0 0;">08.06.2022</span>
<span style="left:344.90px;top:143.88px;font-size:8.31px;line-height:12px;color:#141414;font-weight:normal;transform:scaleX(0.83);-webkit-text-stroke:0.2px currentColor;transform-origin:0 0;">10.12.2023</span>
<span style="left:406.40px;top:143.88px;font-size:8.31px;line-height:12px;color:#141414;font-weight:normal;transform:scaleX(0.83);-webkit-text-stroke:0.2px currentColor;transform-origin:0 0;">01.02.2023</span>
<span style="left:479.80px;top:143.88px;font-size:8.31px;line-height:12px;color:#fff;font-weight:normal;transform:scaleX(0.83);-webkit-text-stroke:0.2px currentColor;transform-origin:0 0;">11.07.2023</span>
<span style="left:248.40px;width:300px;text-align:right;top:143.88px;font-size:8.31px;line-height:12px;color:#fff;font-weight:normal;transform:scaleX(0.83);-webkit-text-stroke:0.2px currentColor;transform-origin:100% 0;">23</span>
<span style="left:377.70px;width:300px;text-align:right;top:143.88px;font-size:8.31px;line-height:12px;color:#fff;font-weight:normal;transform:scaleX(0.83);-webkit-text-stroke:0.2px currentColor;transform-origin:100% 0;">1</span>
<span style="left:745.20px;top:143.88px;font-size:8.31px;line-height:12px;color:#141414;font-weight:normal;transform:scaleX(0.83);-webkit-text-stroke:0.2px currentColor;transform-origin:0 0;">TBK Thüringer BKK</span>
<span style="left:941.40px;top:143.88px;font-size:8.31px;line-height:12px;color:#141414;font-weight:normal;transform:scaleX(0.83);-webkit-text-stroke:0.2px currentColor;transform-origin:0 0;">105928809</span>
<span style="left:981.20px;top:143.88px;font-size:8.31px;line-height:12px;color:#141414;font-weight:normal;transform:scaleX(0.83);-webkit-text-stroke:0.2px currentColor;transform-origin:0 0;">441612217</span>
<span style="left:-264.50px;width:300px;text-align:right;top:154.20px;font-size:8.31px;line-height:12px;color:#141414;font-weight:normal;transform:scaleX(0.83);-webkit-text-stroke:0.2px currentColor;transform-origin:100% 0;">2488</span>
<span style="left:-243.10px;width:300px;text-align:right;top:154.20px;font-size:8.31px;line-height:12px;color:#141414;font-weight:normal;transform:scaleX(0.83);-webkit-text-stroke:0.2px currentColor;transform-origin:100% 0;">2420</span>
<span style="left:-227.60px;width:300px;text-align:right;top:154.20px;font-size:8.31px;line-height:12px;color:#141414;font-weight:normal;transform:scaleX(0.83);-webkit-text-stroke:0.2px currentColor;transform-origin:100% 0;">1</span>
<span style="left:-205.70px;width:300px;text-align:right;top:154.20px;font-size:8.31px;line-height:12px;color:#141414;font-weight:normal;transform:scaleX(0.83);-webkit-text-stroke:0.2px currentColor;transform-origin:100% 0;">2005</span>
<span style="left:96.90px;top:154.20px;font-size:8.31px;line-height:12px;color:#141414;font-weight:normal;transform:scaleX(0.83);-webkit-text-stroke:0.2px currentColor;transform-origin:0 0;">Mumenn</span>
<span style="left:154.20px;top:154.20px;font-size:8.31px;line-height:12px;color:#141414;font-weight:normal;transform:scaleX(0.83);-webkit-text-stroke:0.2px currentColor;transform-origin:0 0;">Dlaotal</span>
<span style="left:211.20px;top:154.20px;font-size:8.31px;line-height:12px;color:#141414;font-weight:normal;transform:scaleX(0.83);-webkit-text-stroke:0.2px currentColor;transform-origin:0 0;">06.08.1992</span>
<span style="left:264.60px;top:154.20px;font-size:8.31px;line-height:12px;color:#141414;font-weight:normal;transform:scaleX(0.83);-webkit-text-stroke:0.2px currentColor;transform-origin:0 0;">19.04.2022</span>
<span style="left:304.60px;top:154.20px;font-size:8.31px;line-height:12px;color:#141414;font-weight:normal;transform:scaleX(0.83);-webkit-text-stroke:0.2px currentColor;transform-origin:0 0;">13.06.2022</span>
<span style="left:344.90px;top:154.20px;font-size:8.31px;line-height:12px;color:#141414;font-weight:normal;transform:scaleX(0.83);-webkit-text-stroke:0.2px currentColor;transform-origin:0 0;">12.12.2023</span>
<span style="left:406.40px;top:154.20px;font-size:8.31px;line-height:12px;color:#141414;font-weight:normal;transform:scaleX(0.83);-webkit-text-stroke:0.2px currentColor;transform-origin:0 0;">23.05.2023</span>
<span style="left:479.80px;top:154.20px;font-size:8.31px;line-height:12px;color:#141414;font-weight:normal;transform:scaleX(0.83);-webkit-text-stroke:0.2px currentColor;transform-origin:0 0;">12.12.2023</span>
<span style="left:248.40px;width:300px;text-align:right;top:154.20px;font-size:8.31px;line-height:12px;color:#fff;font-weight:normal;transform:scaleX(0.83);-webkit-text-stroke:0.2px currentColor;transform-origin:100% 0;">11</span>
<span style="left:377.70px;width:300px;text-align:right;top:154.20px;font-size:8.31px;line-height:12px;color:#fff;font-weight:normal;transform:scaleX(0.83);-webkit-text-stroke:0.2px currentColor;transform-origin:100% 0;">1</span>
<span style="left:745.20px;top:154.20px;font-size:8.31px;line-height:12px;color:#141414;font-weight:normal;transform:scaleX(0.83);-webkit-text-stroke:0.2px currentColor;transform-origin:0 0;">AOK Plus Thüringen</span>
<span style="left:941.40px;top:154.20px;font-size:8.31px;line-height:12px;color:#141414;font-weight:normal;transform:scaleX(0.83);-webkit-text-stroke:0.2px currentColor;transform-origin:0 0;">105998018</span>
<span style="left:981.20px;top:154.20px;font-size:8.31px;line-height:12px;color:#141414;font-weight:normal;transform:scaleX(0.83);-webkit-text-stroke:0.2px currentColor;transform-origin:0 0;">441612217</span>
<span style="left:-264.50px;width:300px;text-align:right;top:164.53px;font-size:8.31px;line-height:12px;color:#141414;font-weight:normal;transform:scaleX(0.83);-webkit-text-stroke:0.2px currentColor;transform-origin:100% 0;">2492</span>
<span style="left:-243.10px;width:300px;text-align:right;top:164.53px;font-size:8.31px;line-height:12px;color:#141414;font-weight:normal;transform:scaleX(0.83);-webkit-text-stroke:0.2px currentColor;transform-origin:100% 0;">2428</span>
<span style="left:-227.60px;width:300px;text-align:right;top:164.53px;font-size:8.31px;line-height:12px;color:#141414;font-weight:normal;transform:scaleX(0.83);-webkit-text-stroke:0.2px currentColor;transform-origin:100% 0;">1</span>
<span style="left:-205.70px;width:300px;text-align:right;top:164.53px;font-size:8.31px;line-height:12px;color:#141414;font-weight:normal;transform:scaleX(0.83);-webkit-text-stroke:0.2px currentColor;transform-origin:100% 0;">2012</span>
<span style="left:96.90px;top:164.53px;font-size:8.31px;line-height:12px;color:#141414;font-weight:normal;transform:scaleX(0.83);-webkit-text-stroke:0.2px currentColor;transform-origin:0 0;">Enna</span>
<span style="left:154.20px;top:164.53px;font-size:8.31px;line-height:12px;color:#141414;font-weight:normal;transform:scaleX(0.83);-webkit-text-stroke:0.2px currentColor;transform-origin:0 0;">Iazmal</span>
<span style="left:211.20px;top:164.53px;font-size:8.31px;line-height:12px;color:#141414;font-weight:normal;transform:scaleX(0.83);-webkit-text-stroke:0.2px currentColor;transform-origin:0 0;">24.01.1995</span>
<span style="left:264.60px;top:164.53px;font-size:8.31px;line-height:12px;color:#141414;font-weight:normal;transform:scaleX(0.83);-webkit-text-stroke:0.2px currentColor;transform-origin:0 0;">09.06.2022</span>
<span style="left:304.60px;top:164.53px;font-size:8.31px;line-height:12px;color:#141414;font-weight:normal;transform:scaleX(0.83);-webkit-text-stroke:0.2px currentColor;transform-origin:0 0;">15.06.2022</span>
<span style="left:344.90px;top:164.53px;font-size:8.31px;line-height:12px;color:#141414;font-weight:normal;transform:scaleX(0.83);-webkit-text-stroke:0.2px currentColor;transform-origin:0 0;">17.12.2023</span>
<span style="left:406.40px;top:164.53px;font-size:8.31px;line-height:12px;color:#141414;font-weight:normal;transform:scaleX(0.83);-webkit-text-stroke:0.2px currentColor;transform-origin:0 0;">18.08.2022</span>
<span style="left:479.80px;top:164.53px;font-size:8.31px;line-height:12px;color:#141414;font-weight:normal;transform:scaleX(0.83);-webkit-text-stroke:0.2px currentColor;transform-origin:0 0;"></span>
<span style="left:248.40px;width:300px;text-align:right;top:164.53px;font-size:8.31px;line-height:12px;color:#fff;font-weight:normal;transform:scaleX(0.83);-webkit-text-stroke:0.2px currentColor;transform-origin:100% 0;">3</span>
<span style="left:377.70px;width:300px;text-align:right;top:164.53px;font-size:8.31px;line-height:12px;color:#fff;font-weight:normal;transform:scaleX(0.83);-webkit-text-stroke:0.2px currentColor;transform-origin:100% 0;">1</span>
<span style="left:745.20px;top:164.53px;font-size:8.31px;line-height:12px;color:#141414;font-weight:normal;transform:scaleX(0.83);-webkit-text-stroke:0.2px currentColor;transform-origin:0 0;">TECHNIKER KRANKENKASSE</span>
<span style="left:941.40px;top:164.53px;font-size:8.31px;line-height:12px;color:#141414;font-weight:normal;transform:scaleX(0.83);-webkit-text-stroke:0.2px currentColor;transform-origin:0 0;">105077504</span>
<span style="left:981.20px;top:164.53px;font-size:8.31px;line-height:12px;color:#141414;font-weight:normal;transform:scaleX(0.83);-webkit-text-stroke:0.2px currentColor;transform-origin:0 0;">441612217</span>
<span style="left:-264.50px;width:300px;text-align:right;top:174.86px;font-size:8.31px;line-height:12px;color:#141414;font-weight:normal;transform:scaleX(0.83);-webkit-text-stroke:0.2px currentColor;transform-origin:100% 0;">2495</span>
<span style="left:-243.10px;width:300px;text-align:right;top:174.86px;font-size:8.31px;line-height:12px;color:#141414;font-weight:normal;transform:scaleX(0.83);-webkit-text-stroke:0.2px currentColor;transform-origin:100% 0;">2431</span>
<span style="left:-227.60px;width:300px;text-align:right;top:174.86px;font-size:8.31px;line-height:12px;color:#141414;font-weight:normal;transform:scaleX(0.83);-webkit-text-stroke:0.2px currentColor;transform-origin:100% 0;">1</span>
<span style="left:-205.70px;width:300px;text-align:right;top:174.86px;font-size:8.31px;line-height:12px;color:#141414;font-weight:normal;transform:scaleX(0.83);-webkit-text-stroke:0.2px currentColor;transform-origin:100% 0;">2015</span>
<span style="left:96.90px;top:174.86px;font-size:8.31px;line-height:12px;color:#141414;font-weight:normal;transform:scaleX(0.83);-webkit-text-stroke:0.2px currentColor;transform-origin:0 0;">Hennaila</span>
<span style="left:154.20px;top:174.86px;font-size:8.31px;line-height:12px;color:#141414;font-weight:normal;transform:scaleX(0.83);-webkit-text-stroke:0.2px currentColor;transform-origin:0 0;">Zoum</span>
<span style="left:211.20px;top:174.86px;font-size:8.31px;line-height:12px;color:#141414;font-weight:normal;transform:scaleX(0.83);-webkit-text-stroke:0.2px currentColor;transform-origin:0 0;">06.08.1956</span>
<span style="left:264.60px;top:174.86px;font-size:8.31px;line-height:12px;color:#141414;font-weight:normal;transform:scaleX(0.83);-webkit-text-stroke:0.2px currentColor;transform-origin:0 0;">21.03.2022</span>
<span style="left:304.60px;top:174.86px;font-size:8.31px;line-height:12px;color:#141414;font-weight:normal;transform:scaleX(0.83);-webkit-text-stroke:0.2px currentColor;transform-origin:0 0;">21.03.2022</span>
<span style="left:344.90px;top:174.86px;font-size:8.31px;line-height:12px;color:#141414;font-weight:normal;transform:scaleX(0.83);-webkit-text-stroke:0.2px currentColor;transform-origin:0 0;">17.09.2023</span>
<span style="left:406.40px;top:174.86px;font-size:8.31px;line-height:12px;color:#141414;font-weight:normal;transform:scaleX(0.83);-webkit-text-stroke:0.2px currentColor;transform-origin:0 0;">17.07.2023</span>
<span style="left:479.80px;top:174.86px;font-size:8.31px;line-height:12px;color:#141414;font-weight:normal;transform:scaleX(0.83);-webkit-text-stroke:0.2px currentColor;transform-origin:0 0;">17.09.2023</span>
<span style="left:248.40px;width:300px;text-align:right;top:174.86px;font-size:8.31px;line-height:12px;color:#fff;font-weight:normal;transform:scaleX(0.83);-webkit-text-stroke:0.2px currentColor;transform-origin:100% 0;">40</span>
<span style="left:377.70px;width:300px;text-align:right;top:174.86px;font-size:8.31px;line-height:12px;color:#fff;font-weight:normal;transform:scaleX(0.83);-webkit-text-stroke:0.2px currentColor;transform-origin:100% 0;">1</span>
<span style="left:745.20px;top:174.86px;font-size:8.31px;line-height:12px;color:#141414;font-weight:normal;transform:scaleX(0.83);-webkit-text-stroke:0.2px currentColor;transform-origin:0 0;"></span>
<span style="left:941.40px;top:174.86px;font-size:8.31px;line-height:12px;color:#141414;font-weight:normal;transform:scaleX(0.83);-webkit-text-stroke:0.2px currentColor;transform-origin:0 0;"></span>
<span style="left:981.20px;top:174.86px;font-size:8.31px;line-height:12px;color:#141414;font-weight:normal;transform:scaleX(0.83);-webkit-text-stroke:0.2px currentColor;transform-origin:0 0;">441612217</span>
<span style="left:-264.50px;width:300px;text-align:right;top:185.19px;font-size:8.31px;line-height:12px;color:#141414;font-weight:normal;transform:scaleX(0.83);-webkit-text-stroke:0.2px currentColor;transform-origin:100% 0;">2496</span>
<span style="left:-243.10px;width:300px;text-align:right;top:185.19px;font-size:8.31px;line-height:12px;color:#141414;font-weight:normal;transform:scaleX(0.83);-webkit-text-stroke:0.2px currentColor;transform-origin:100% 0;">1145</span>
<span style="left:-227.60px;width:300px;text-align:right;top:185.19px;font-size:8.31px;line-height:12px;color:#141414;font-weight:normal;transform:scaleX(0.83);-webkit-text-stroke:0.2px currentColor;transform-origin:100% 0;">4</span>
<span style="left:-205.70px;width:300px;text-align:right;top:185.19px;font-size:8.31px;line-height:12px;color:#141414;font-weight:normal;transform:scaleX(0.83);-webkit-text-stroke:0.2px currentColor;transform-origin:100% 0;">1032</span>
<span style="left:96.90px;top:185.19px;font-size:8.31px;line-height:12px;color:#141414;font-weight:normal;transform:scaleX(0.83);-webkit-text-stroke:0.2px currentColor;transform-origin:0 0;">Wlenp</span>
<span style="left:154.20px;top:185.19px;font-size:8.31px;line-height:12px;color:#141414;font-weight:normal;transform:scaleX(0.83);-webkit-text-stroke:0.2px currentColor;transform-origin:0 0;">Maothelg</span>
<span style="left:211.20px;top:185.19px;font-size:8.31px;line-height:12px;color:#141414;font-weight:normal;transform:scaleX(0.83);-webkit-text-stroke:0.2px currentColor;transform-origin:0 0;">21.12.1951</span>
<span style="left:264.60px;top:185.19px;font-size:8.31px;line-height:12px;color:#141414;font-weight:normal;transform:scaleX(0.83);-webkit-text-stroke:0.2px currentColor;transform-origin:0 0;">20.06.2022</span>
<span style="left:304.60px;top:185.19px;font-size:8.31px;line-height:12px;color:#141414;font-weight:normal;transform:scaleX(0.83);-webkit-text-stroke:0.2px currentColor;transform-origin:0 0;">20.06.2022</span>
<span style="left:344.90px;top:185.19px;font-size:8.31px;line-height:12px;color:#141414;font-weight:normal;transform:scaleX(0.83);-webkit-text-stroke:0.2px currentColor;transform-origin:0 0;"></span>
<span style="left:406.40px;top:185.19px;font-size:8.31px;line-height:12px;color:#141414;font-weight:normal;transform:scaleX(0.83);-webkit-text-stroke:0.2px currentColor;transform-origin:0 0;">19.07.2023</span>
<span style="left:479.80px;top:185.19px;font-size:8.31px;line-height:12px;color:#141414;font-weight:normal;transform:scaleX(0.83);-webkit-text-stroke:0.2px currentColor;transform-origin:0 0;"></span>
<span style="left:248.40px;width:300px;text-align:right;top:185.19px;font-size:8.31px;line-height:12px;color:#fff;font-weight:normal;transform:scaleX(0.83);-webkit-text-stroke:0.2px currentColor;transform-origin:100% 0;">36</span>
<span style="left:377.70px;width:300px;text-align:right;top:185.19px;font-size:8.31px;line-height:12px;color:#fff;font-weight:normal;transform:scaleX(0.83);-webkit-text-stroke:0.2px currentColor;transform-origin:100% 0;">30</span>
<span style="left:745.20px;top:185.19px;font-size:8.31px;line-height:12px;color:#141414;font-weight:normal;transform:scaleX(0.83);-webkit-text-stroke:0.2px currentColor;transform-origin:0 0;">TECHNIKER KRANKENKASSE</span>
<span style="left:941.40px;top:185.19px;font-size:8.31px;line-height:12px;color:#141414;font-weight:normal;transform:scaleX(0.83);-webkit-text-stroke:0.2px currentColor;transform-origin:0 0;">105077504</span>
<span style="left:981.20px;top:185.19px;font-size:8.31px;line-height:12px;color:#141414;font-weight:normal;transform:scaleX(0.83);-webkit-text-stroke:0.2px currentColor;transform-origin:0 0;">441612217</span>
<span style="left:-264.50px;width:300px;text-align:right;top:195.51px;font-size:8.31px;line-height:12px;color:#141414;font-weight:normal;transform:scaleX(0.83);-webkit-text-stroke:0.2px currentColor;transform-origin:100% 0;">2497</span>
<span style="left:-243.10px;width:300px;text-align:right;top:195.51px;font-size:8.31px;line-height:12px;color:#141414;font-weight:normal;transform:scaleX(0.83);-webkit-text-stroke:0.2px currentColor;transform-origin:100% 0;">1144</span>
<span style="left:-227.60px;width:300px;text-align:right;top:195.51px;font-size:8.31px;line-height:12px;color:#141414;font-weight:normal;transform:scaleX(0.83);-webkit-text-stroke:0.2px currentColor;transform-origin:100% 0;">4</span>
<span style="left:-205.70px;width:300px;text-align:right;top:195.51px;font-size:8.31px;line-height:12px;color:#141414;font-weight:normal;transform:scaleX(0.83);-webkit-text-stroke:0.2px currentColor;transform-origin:100% 0;">1031</span>
<span style="left:96.90px;top:195.51px;font-size:8.31px;line-height:12px;color:#141414;font-weight:normal;transform:scaleX(0.83);-webkit-text-stroke:0.2px currentColor;transform-origin:0 0;">Ladone</span>
<span style="left:154.20px;top:195.51px;font-size:8.31px;line-height:12px;color:#141414;font-weight:normal;transform:scaleX(0.83);-webkit-text-stroke:0.2px currentColor;transform-origin:0 0;">Maothelg</span>
<span style="left:211.20px;top:195.51px;font-size:8.31px;line-height:12px;color:#141414;font-weight:normal;transform:scaleX(0.83);-webkit-text-stroke:0.2px currentColor;transform-origin:0 0;">05.02.1953</span>
<span style="left:264.60px;top:195.51px;font-size:8.31px;line-height:12px;color:#141414;font-weight:normal;transform:scaleX(0.83);-webkit-text-stroke:0.2px currentColor;transform-origin:0 0;">20.06.2022</span>
<span style="left:304.60px;top:195.51px;font-size:8.31px;line-height:12px;color:#141414;font-weight:normal;transform:scaleX(0.83);-webkit-text-stroke:0.2px currentColor;transform-origin:0 0;">20.06.2022</span>
<span style="left:344.90px;top:195.51px;font-size:8.31px;line-height:12px;color:#141414;font-weight:normal;transform:scaleX(0.83);-webkit-text-stroke:0.2px currentColor;transform-origin:0 0;"></span>
<span style="left:406.40px;top:195.51px;font-size:8.31px;line-height:12px;color:#141414;font-weight:normal;transform:scaleX(0.83);-webkit-text-stroke:0.2px currentColor;transform-origin:0 0;">26.07.2023</span>
<span style="left:479.80px;top:195.51px;font-size:8.31px;line-height:12px;color:#141414;font-weight:normal;transform:scaleX(0.83);-webkit-text-stroke:0.2px currentColor;transform-origin:0 0;"></span>
<span style="left:248.40px;width:300px;text-align:right;top:195.51px;font-size:8.31px;line-height:12px;color:#fff;font-weight:normal;transform:scaleX(0.83);-webkit-text-stroke:0.2px currentColor;transform-origin:100% 0;">38</span>
<span style="left:377.70px;width:300px;text-align:right;top:195.51px;font-size:8.31px;line-height:12px;color:#fff;font-weight:normal;transform:scaleX(0.83);-webkit-text-stroke:0.2px currentColor;transform-origin:100% 0;">30</span>
<span style="left:745.20px;top:195.51px;font-size:8.31px;line-height:12px;color:#141414;font-weight:normal;transform:scaleX(0.83);-webkit-text-stroke:0.2px currentColor;transform-origin:0 0;">TECHNIKER KRANKENKASSE</span>
<span style="left:941.40px;top:195.51px;font-size:8.31px;line-height:12px;color:#141414;font-weight:normal;transform:scaleX(0.83);-webkit-text-stroke:0.2px currentColor;transform-origin:0 0;">105077504</span>
<span style="left:981.20px;top:195.51px;font-size:8.31px;line-height:12px;color:#141414;font-weight:normal;transform:scaleX(0.83);-webkit-text-stroke:0.2px currentColor;transform-origin:0 0;">441612217</span>
<span style="left:-264.50px;width:300px;text-align:right;top:205.84px;font-size:8.31px;line-height:12px;color:#141414;font-weight:normal;transform:scaleX(0.83);-webkit-text-stroke:0.2px currentColor;transform-origin:100% 0;">2511</span>
<span style="left:-243.10px;width:300px;text-align:right;top:205.84px;font-size:8.31px;line-height:12px;color:#141414;font-weight:normal;transform:scaleX(0.83);-webkit-text-stroke:0.2px currentColor;transform-origin:100% 0;">2446</span>
<span style="left:-227.60px;width:300px;text-align:right;top:205.84px;font-size:8.31px;line-height:12px;color:#141414;font-weight:normal;transform:scaleX(0.83);-webkit-text-stroke:0.2px currentColor;transform-origin:100% 0;">1</span>
<span style="left:-205.70px;width:300px;text-align:right;top:205.84px;font-size:8.31px;line-height:12px;color:#141414;font-weight:normal;transform:scaleX(0.83);-webkit-text-stroke:0.2px currentColor;transform-origin:100% 0;">2025</span>
<span style="left:96.90px;top:205.84px;font-size:8.31px;line-height:12px;color:#141414;font-weight:normal;transform:scaleX(0.83);-webkit-text-stroke:0.2px currentColor;transform-origin:0 0;">Endarope</span>
<span style="left:154.20px;top:205.84px;font-size:8.31px;line-height:12px;color:#141414;font-weight:normal;transform:scaleX(0.83);-webkit-text-stroke:0.2px currentColor;transform-origin:0 0;">Mnoza</span>
<span style="left:211.20px;top:205.84px;font-size:8.31px;line-height:12px;color:#141414;font-weight:normal;transform:scaleX(0.83);-webkit-text-stroke:0.2px currentColor;transform-origin:0 0;">28.03.1957</span>
<span style="left:264.60px;top:205.84px;font-size:8.31px;line-height:12px;color:#141414;font-weight:normal;transform:scaleX(0.83);-webkit-text-stroke:0.2px currentColor;transform-origin:0 0;">07.04.2022</span>
<span style="left:304.60px;top:205.84px;font-size:8.31px;line-height:12px;color:#141414;font-weight:normal;transform:scaleX(0.83);-webkit-text-stroke:0.2px currentColor;transform-origin:0 0;">21.06.2022</span>
<span style="left:344.90px;top:205.84px;font-size:8.31px;line-height:12px;color:#141414;font-weight:normal;transform:scaleX(0.83);-webkit-text-stroke:0.2px currentColor;transform-origin:0 0;">28.06.2025</span>
<span style="left:406.40px;top:205.84px;font-size:8.31px;line-height:12px;color:#141414;font-weight:normal;transform:scaleX(0.83);-webkit-text-stroke:0.2px currentColor;transform-origin:0 0;">12.07.2023</span>
<span style="left:479.80px;top:205.84px;font-size:8.31px;line-height:12px;color:#141414;font-weight:normal;transform:scaleX(0.83);-webkit-text-stroke:0.2px currentColor;transform-origin:0 0;">28.06.2025</span>
<span style="left:248.40px;width:300px;text-align:right;top:205.84px;font-size:8.31px;line-height:12px;color:#141414;font-weight:normal;transform:scaleX(0.83);-webkit-text-stroke:0.2px currentColor;transform-origin:100% 0;">19</span>
<span style="left:377.70px;width:300px;text-align:right;top:205.84px;font-size:8.31px;line-height:12px;color:#141414;font-weight:normal;transform:scaleX(0.83);-webkit-text-stroke:0.2px currentColor;transform-origin:100% 0;"></span>
<span style="left:745.20px;top:205.84px;font-size:8.31px;line-height:12px;color:#141414;font-weight:normal;transform:scaleX(0.83);-webkit-text-stroke:0.2px currentColor;transform-origin:0 0;">BARMER</span>
<span style="left:941.40px;top:205.84px;font-size:8.31px;line-height:12px;color:#141414;font-weight:normal;transform:scaleX(0.83);-webkit-text-stroke:0.2px currentColor;transform-origin:0 0;">105080008</span>
<span style="left:981.20px;top:205.84px;font-size:8.31px;line-height:12px;color:#141414;font-weight:normal;transform:scaleX(0.83);-webkit-text-stroke:0.2px currentColor;transform-origin:0 0;">441612217</span>
<span style="left:-264.50px;width:300px;text-align:right;top:216.17px;font-size:8.31px;line-height:12px;color:#141414;font-weight:normal;transform:scaleX(0.83);-webkit-text-stroke:0.2px currentColor;transform-origin:100% 0;">2518</span>
<span style="left:-243.10px;width:300px;text-align:right;top:216.17px;font-size:8.31px;line-height:12px;color:#141414;font-weight:normal;transform:scaleX(0.83);-webkit-text-stroke:0.2px currentColor;transform-origin:100% 0;">2452</span>
<span style="left:-227.60px;width:300px;text-align:right;top:216.17px;font-size:8.31px;line-height:12px;color:#141414;font-weight:normal;transform:scaleX(0.83);-webkit-text-stroke:0.2px currentColor;transform-origin:100% 0;">1</span>
<span style="left:-205.70px;width:300px;text-align:right;top:216.17px;font-size:8.31px;line-height:12px;color:#141414;font-weight:normal;transform:scaleX(0.83);-webkit-text-stroke:0.2px currentColor;transform-origin:100% 0;">2028</span>
<span style="left:96.90px;top:216.17px;font-size:8.31px;line-height:12px;color:#141414;font-weight:normal;transform:scaleX(0.83);-webkit-text-stroke:0.2px currentColor;transform-origin:0 0;">Zelzele</span>
<span style="left:154.20px;top:216.17px;font-size:8.31px;line-height:12px;color:#141414;font-weight:normal;transform:scaleX(0.83);-webkit-text-stroke:0.2px currentColor;transform-origin:0 0;">Zacpal</span>
<span style="left:211.20px;top:216.17px;font-size:8.31px;line-height:12px;color:#141414;font-weight:normal;transform:scaleX(0.83);-webkit-text-stroke:0.2px currentColor;transform-origin:0 0;">14.09.1948</span>
<span style="left:264.60px;top:216.17px;font-size:8.31px;line-height:12px;color:#141414;font-weight:normal;transform:scaleX(0.83);-webkit-text-stroke:0.2px currentColor;transform-origin:0 0;">17.06.2022</span>
<span style="left:304.60px;top:216.17px;font-size:8.31px;line-height:12px;color:#141414;font-weight:normal;transform:scaleX(0.83);-webkit-text-stroke:0.2px currentColor;transform-origin:0 0;">17.06.2022</span>
<span style="left:344.90px;top:216.17px;font-size:8.31px;line-height:12px;color:#141414;font-weight:normal;transform:scaleX(0.83);-webkit-text-stroke:0.2px currentColor;transform-origin:0 0;">03.01.2024</span>
<span style="left:406.40px;top:216.17px;font-size:8.31px;line-height:12px;color:#141414;font-weight:normal;transform:scaleX(0.83);-webkit-text-stroke:0.2px currentColor;transform-origin:0 0;">17.07.2023</span>
<span style="left:479.80px;top:216.17px;font-size:8.31px;line-height:12px;color:#141414;font-weight:normal;transform:scaleX(0.83);-webkit-text-stroke:0.2px currentColor;transform-origin:0 0;">03.01.2024</span>
<span style="left:248.40px;width:300px;text-align:right;top:216.17px;font-size:8.31px;line-height:12px;color:#fff;font-weight:normal;transform:scaleX(0.83);-webkit-text-stroke:0.2px currentColor;transform-origin:100% 0;">22</span>
<span style="left:377.70px;width:300px;text-align:right;top:216.17px;font-size:8.31px;line-height:12px;color:#fff;font-weight:normal;transform:scaleX(0.83);-webkit-text-stroke:0.2px currentColor;transform-origin:100% 0;">1</span>
<span style="left:745.20px;top:216.17px;font-size:8.31px;line-height:12px;color:#141414;font-weight:normal;transform:scaleX(0.83);-webkit-text-stroke:0.2px currentColor;transform-origin:0 0;">BARMER</span>
<span style="left:941.40px;top:216.17px;font-size:8.31px;line-height:12px;color:#141414;font-weight:normal;transform:scaleX(0.83);-webkit-text-stroke:0.2px currentColor;transform-origin:0 0;">105080008</span>
<span style="left:981.20px;top:216.17px;font-size:8.31px;line-height:12px;color:#141414;font-weight:normal;transform:scaleX(0.83);-webkit-text-stroke:0.2px currentColor;transform-origin:0 0;">441612217</span>
<span style="left:-264.50px;width:300px;text-align:right;top:226.49px;font-size:8.31px;line-height:12px;color:#141414;font-weight:normal;transform:scaleX(0.83);-webkit-text-stroke:0.2px currentColor;transform-origin:100% 0;">2524</span>
<span style="left:-243.10px;width:300px;text-align:right;top:226.49px;font-size:8.31px;line-height:12px;color:#141414;font-weight:normal;transform:scaleX(0.83);-webkit-text-stroke:0.2px currentColor;transform-origin:100% 0;">1680</span>
<span style="left:-227.60px;width:300px;text-align:right;top:226.49px;font-size:8.31px;line-height:12px;color:#141414;font-weight:normal;transform:scaleX(0.83);-webkit-text-stroke:0.2px currentColor;transform-origin:100% 0;">2</span>
<span style="left:-205.70px;width:300px;text-align:right;top:226.49px;font-size:8.31px;line-height:12px;color:#141414;font-weight:normal;transform:scaleX(0.83);-webkit-text-stroke:0.2px currentColor;transform-origin:100% 0;">1453</span>
<span style="left:96.90px;top:226.49px;font-size:8.31px;line-height:12px;color:#141414;font-weight:normal;transform:scaleX(0.83);-webkit-text-stroke:0.2px currentColor;transform-origin:0 0;">Kanle</span>
<span style="left:154.20px;top:226.49px;font-size:8.31px;line-height:12px;color:#141414;font-weight:normal;transform:scaleX(0.83);-webkit-text-stroke:0.2px currentColor;transform-origin:0 0;">Dutgalmett</span>
<span style="left:211.20px;top:226.49px;font-size:8.31px;line-height:12px;color:#141414;font-weight:normal;transform:scaleX(0.83);-webkit-text-stroke:0.2px currentColor;transform-origin:0 0;">21.03.1955</span>
<span style="left:264.60px;top:226.49px;font-size:8.31px;line-height:12px;color:#141414;font-weight:normal;transform:scaleX(0.83);-webkit-text-stroke:0.2px currentColor;transform-origin:0 0;">14.06.2022</span>
<span style="left:304.60px;top:226.49px;font-size:8.31px;line-height:12px;color:#141414;font-weight:normal;transform:scaleX(0.83);-webkit-text-stroke:0.2px currentColor;transform-origin:0 0;">29.06.2022</span>
<span style="left:344.90px;top:226.49px;font-size:8.31px;line-height:12px;color:#141414;font-weight:normal;transform:scaleX(0.83);-webkit-text-stroke:0.2px currentColor;transform-origin:0 0;">31.12.2023</span>
<span style="left:406.40px;top:226.49px;font-size:8.31px;line-height:12px;color:#141414;font-weight:normal;transform:scaleX(0.83);-webkit-text-stroke:0.2px currentColor;transform-origin:0 0;">17.07.2023</span>
<span style="left:479.80px;top:226.49px;font-size:8.31px;line-height:12px;color:#141414;font-weight:normal;transform:scaleX(0.83);-webkit-text-stroke:0.2px currentColor;transform-origin:0 0;">31.12.2023</span>
<span style="left:248.40px;width:300px;text-align:right;top:226.49px;font-size:8.31px;line-height:12px;color:#fff;font-weight:normal;transform:scaleX(0.83);-webkit-text-stroke:0.2px currentColor;transform-origin:100% 0;">35</span>
<span style="left:377.70px;width:300px;text-align:right;top:226.49px;font-size:8.31px;line-height:12px;color:#fff;font-weight:normal;transform:scaleX(0.83);-webkit-text-stroke:0.2px currentColor;transform-origin:100% 0;">1</span>
<span style="left:745.20px;top:226.49px;font-size:8.31px;line-height:12px;color:#141414;font-weight:normal;transform:scaleX(0.83);-webkit-text-stroke:0.2px currentColor;transform-origin:0 0;">BARMER</span>
<span style="left:941.40px;top:226.49px;font-size:8.31px;line-height:12px;color:#141414;font-weight:normal;transform:scaleX(0.83);-webkit-text-stroke:0.2px currentColor;transform-origin:0 0;">105080008</span>
<span style="left:981.20px;top:226.49px;font-size:8.31px;line-height:12px;color:#141414;font-weight:normal;transform:scaleX(0.83);-webkit-text-stroke:0.2px currentColor;transform-origin:0 0;">441612217</span>
<span style="left:-264.50px;width:300px;text-align:right;top:236.82px;font-size:8.31px;line-height:12px;color:#141414;font-weight:normal;transform:scaleX(0.83);-webkit-text-stroke:0.2px currentColor;transform-origin:100% 0;">2532</span>
<span style="left:-243.10px;width:300px;text-align:right;top:236.82px;font-size:8.31px;line-height:12px;color:#141414;font-weight:normal;transform:scaleX(0.83);-webkit-text-stroke:0.2px currentColor;transform-origin:100% 0;">2472</span>
<span style="left:-227.60px;width:300px;text-align:right;top:236.82px;font-size:8.31px;line-height:12px;color:#141414;font-weight:normal;transform:scaleX(0.83);-webkit-text-stroke:0.2px currentColor;transform-origin:100% 0;">1</span>
<span style="left:-205.70px;width:300px;text-align:right;top:236.82px;font-size:8.31px;line-height:12px;color:#141414;font-weight:normal;transform:scaleX(0.83);-webkit-text-stroke:0.2px currentColor;transform-origin:100% 0;">1782</span>
<span style="left:96.90px;top:236.82px;font-size:8.31px;line-height:12px;color:#141414;font-weight:normal;transform:scaleX(0.83);-webkit-text-stroke:0.2px currentColor;transform-origin:0 0;">Lesine</span>
<span style="left:154.20px;top:236.82px;font-size:8.31px;line-height:12px;color:#141414;font-weight:normal;transform:scaleX(0.83);-webkit-text-stroke:0.2px currentColor;transform-origin:0 0;">Linn</span>
<span style="left:211.20px;top:236.82px;font-size:8.31px;line-height:12px;color:#141414;font-weight:normal;transform:scaleX(0.83);-webkit-text-stroke:0.2px currentColor;transform-origin:0 0;">01.01.1965</span>
<span style="left:264.60px;top:236.82px;font-size:8.31px;line-height:12px;color:#141414;font-weight:normal;transform:scaleX(0.83);-webkit-text-stroke:0.2px currentColor;transform-origin:0 0;">20.06.2022</span>
<span style="left:304.60px;top:236.82px;font-size:8.31px;line-height:12px;color:#141414;font-weight:normal;transform:scaleX(0.83);-webkit-text-stroke:0.2px currentColor;transform-origin:0 0;">27.06.2022</span>
<span style="left:344.90px;top:236.82px;font-size:8.31px;line-height:12px;color:#141414;font-weight:normal;transform:scaleX(0.83);-webkit-text-stroke:0.2px currentColor;transform-origin:0 0;">31.12.2023</span>
<span style="left:406.40px;top:236.82px;font-size:8.31px;line-height:12px;color:#141414;font-weight:normal;transform:scaleX(0.83);-webkit-text-stroke:0.2px currentColor;transform-origin:0 0;">21.06.2023</span>
<span style="left:479.80px;top:236.82px;font-size:8.31px;line-height:12px;color:#141414;font-weight:normal;transform:scaleX(0.83);-webkit-text-stroke:0.2px currentColor;transform-origin:0 0;">31.12.2023</span>
<span style="left:248.40px;width:300px;text-align:right;top:236.82px;font-size:8.31px;line-height:12px;color:#fff;font-weight:normal;transform:scaleX(0.83);-webkit-text-stroke:0.2px currentColor;transform-origin:100% 0;">27</span>
<span style="left:377.70px;width:300px;text-align:right;top:236.82px;font-size:8.31px;line-height:12px;color:#fff;font-weight:normal;transform:scaleX(0.83);-webkit-text-stroke:0.2px currentColor;transform-origin:100% 0;">1</span>
<span style="left:745.20px;top:236.82px;font-size:8.31px;line-height:12px;color:#141414;font-weight:normal;transform:scaleX(0.83);-webkit-text-stroke:0.2px currentColor;transform-origin:0 0;">TBK Thüringer BKK</span>
<span style="left:941.40px;top:236.82px;font-size:8.31px;line-height:12px;color:#141414;font-weight:normal;transform:scaleX(0.83);-webkit-text-stroke:0.2px currentColor;transform-origin:0 0;">105928809</span>
<span style="left:981.20px;top:236.82px;font-size:8.31px;line-height:12px;color:#141414;font-weight:normal;transform:scaleX(0.83);-webkit-text-stroke:0.2px currentColor;transform-origin:0 0;">441612217</span>
<span style="left:-264.50px;width:300px;text-align:right;top:247.15px;font-size:8.31px;line-height:12px;color:#141414;font-weight:normal;transform:scaleX(0.83);-webkit-text-stroke:0.2px currentColor;transform-origin:100% 0;">2533</span>
<span style="left:-243.10px;width:300px;text-align:right;top:247.15px;font-size:8.31px;line-height:12px;color:#141414;font-weight:normal;transform:scaleX(0.83);-webkit-text-stroke:0.2px currentColor;transform-origin:100% 0;">2474</span>
<span style="left:-227.60px;width:300px;text-align:right;top:247.15px;font-size:8.31px;line-height:12px;color:#141414;font-weight:normal;transform:scaleX(0.83);-webkit-text-stroke:0.2px currentColor;transform-origin:100% 0;">1</span>
<span style="left:-205.70px;width:300px;text-align:right;top:247.15px;font-size:8.31px;line-height:12px;color:#141414;font-weight:normal;transform:scaleX(0.83);-webkit-text-stroke:0.2px currentColor;transform-origin:100% 0;">2039</span>
<span style="left:96.90px;top:247.15px;font-size:8.31px;line-height:12px;color:#141414;font-weight:normal;transform:scaleX(0.83);-webkit-text-stroke:0.2px currentColor;transform-origin:0 0;">Megap</span>
<span style="left:154.20px;top:247.15px;font-size:8.31px;line-height:12px;color:#141414;font-weight:normal;transform:scaleX(0.83);-webkit-text-stroke:0.2px currentColor;transform-origin:0 0;">Efeg</span>
<span style="left:211.20px;top:247.15px;font-size:8.31px;line-height:12px;color:#141414;font-weight:normal;transform:scaleX(0.83);-webkit-text-stroke:0.2px currentColor;transform-origin:0 0;">08.10.2000</span>
<span style="left:264.60px;top:247.15px;font-size:8.31px;line-height:12px;color:#141414;font-weight:normal;transform:scaleX(0.83);-webkit-text-stroke:0.2px currentColor;transform-origin:0 0;">27.06.2022</span>
<span style="left:304.60px;top:247.15px;font-size:8.31px;line-height:12px;color:#141414;font-weight:normal;transform:scaleX(0.83);-webkit-text-stroke:0.2px currentColor;transform-origin:0 0;">04.07.2022</span>
<span style="left:344.90px;top:247.15px;font-size:8.31px;line-height:12px;color:#141414;font-weight:normal;transform:scaleX(0.83);-webkit-text-stroke:0.2px currentColor;transform-origin:0 0;">07.01.2024</span>
<span style="left:406.40px;top:247.15px;font-size:8.31px;line-height:12px;color:#141414;font-weight:normal;transform:scaleX(0.83);-webkit-text-stroke:0.2px currentColor;transform-origin:0 0;">06.03.2023</span>
<span style="left:479.80px;top:247.15px;font-size:8.31px;line-height:12px;color:#141414;font-weight:normal;transform:scaleX(0.83);-webkit-text-stroke:0.2px currentColor;transform-origin:0 0;">07.01.2024</span>
<span style="left:248.40px;width:300px;text-align:right;top:247.15px;font-size:8.31px;line-height:12px;color:#fff;font-weight:normal;transform:scaleX(0.83);-webkit-text-stroke:0.2px currentColor;transform-origin:100% 0;">21</span>
<span style="left:377.70px;width:300px;text-align:right;top:247.15px;font-size:8.31px;line-height:12px;color:#fff;font-weight:normal;transform:scaleX(0.83);-webkit-text-stroke:0.2px currentColor;transform-origin:100% 0;">1</span>
<span style="left:745.20px;top:247.15px;font-size:8.31px;line-height:12px;color:#141414;font-weight:normal;transform:scaleX(0.83);-webkit-text-stroke:0.2px currentColor;transform-origin:0 0;">AOK Plus</span>
<span style="left:941.40px;top:247.15px;font-size:8.31px;line-height:12px;color:#141414;font-weight:normal;transform:scaleX(0.83);-webkit-text-stroke:0.2px currentColor;transform-origin:0 0;">105998018</span>
<span style="left:981.20px;top:247.15px;font-size:8.31px;line-height:12px;color:#141414;font-weight:normal;transform:scaleX(0.83);-webkit-text-stroke:0.2px currentColor;transform-origin:0 0;">441612217</span>
<span style="left:-264.50px;width:300px;text-align:right;top:257.47px;font-size:8.31px;line-height:12px;color:#141414;font-weight:normal;transform:scaleX(0.83);-webkit-text-stroke:0.2px currentColor;transform-origin:100% 0;">2538</span>
<span style="left:-243.10px;width:300px;text-align:right;top:257.47px;font-size:8.31px;line-height:12px;color:#141414;font-weight:normal;transform:scaleX(0.83);-webkit-text-stroke:0.2px currentColor;transform-origin:100% 0;">2478</span>
<span style="left:-227.60px;width:300px;text-align:right;top:257.47px;font-size:8.31px;line-height:12px;color:#141414;font-weight:normal;transform:scaleX(0.83);-webkit-text-stroke:0.2px currentColor;transform-origin:100% 0;">1</span>
<span style="left:-205.70px;width:300px;text-align:right;top:257.47px;font-size:8.31px;line-height:12px;color:#141414;font-weight:normal;transform:scaleX(0.83);-webkit-text-stroke:0.2px currentColor;transform-origin:100% 0;">2042</span>
<span style="left:96.90px;top:257.47px;font-size:8.31px;line-height:12px;color:#141414;font-weight:normal;transform:scaleX(0.83);-webkit-text-stroke:0.2px currentColor;transform-origin:0 0;">Selbin</span>
<span style="left:154.20px;top:257.47px;font-size:8.31px;line-height:12px;color:#141414;font-weight:normal;transform:scaleX(0.83);-webkit-text-stroke:0.2px currentColor;transform-origin:0 0;">Zenha</span>
<span style="left:211.20px;top:257.47px;font-size:8.31px;line-height:12px;color:#141414;font-weight:normal;transform:scaleX(0.83);-webkit-text-stroke:0.2px currentColor;transform-origin:0 0;">18.06.1960</span>
<span style="left:264.60px;top:257.47px;font-size:8.31px;line-height:12px;color:#141414;font-weight:normal;transform:scaleX(0.83);-webkit-text-stroke:0.2px currentColor;transform-origin:0 0;">16.05.2022</span>
<span style="left:304.60px;top:257.47px;font-size:8.31px;line-height:12px;color:#141414;font-weight:normal;transform:scaleX(0.83);-webkit-text-stroke:0.2px currentColor;transform-origin:0 0;">27.05.2022</span>
<span style="left:344.90px;top:257.47px;font-size:8.31px;line-height:12px;color:#141414;font-weight:normal;transform:scaleX(0.83);-webkit-text-stroke:0.2px currentColor;transform-origin:0 0;">24.12.2023</span>
<span style="left:406.40px;top:257.47px;font-size:8.31px;line-height:12px;color:#141414;font-weight:normal;transform:scaleX(0.83);-webkit-text-stroke:0.2px currentColor;transform-origin:0 0;">12.07.2023</span>
<span style="left:479.80px;top:257.47px;font-size:8.31px;line-height:12px;color:#141414;font-weight:normal;transform:scaleX(0.83);-webkit-text-stroke:0.2px currentColor;transform-origin:0 0;">24.12.2023</span>
<span style="left:248.40px;width:300px;text-align:right;top:257.47px;font-size:8.31px;line-height:12px;color:#fff;font-weight:normal;transform:scaleX(0.83);-webkit-text-stroke:0.2px currentColor;transform-origin:100% 0;">22</span>
<span style="left:377.70px;width:300px;text-align:right;top:257.47px;font-size:8.31px;line-height:12px;color:#fff;font-weight:normal;transform:scaleX(0.83);-webkit-text-stroke:0.2px currentColor;transform-origin:100% 0;">1</span>
<span style="left:745.20px;top:257.47px;font-size:8.31px;line-height:12px;color:#141414;font-weight:normal;transform:scaleX(0.83);-webkit-text-stroke:0.2px currentColor;transform-origin:0 0;">Knappschaft Thüringen</span>
<span style="left:941.40px;top:257.47px;font-size:8.31px;line-height:12px;color:#141414;font-weight:normal;transform:scaleX(0.83);-webkit-text-stroke:0.2px currentColor;transform-origin:0 0;">106005008</span>
<span style="left:981.20px;top:257.47px;font-size:8.31px;line-height:12px;color:#141414;font-weight:normal;transform:scaleX(0.83);-webkit-text-stroke:0.2px currentColor;transform-origin:0 0;">441612217</span>
<span style="left:-264.50px;width:300px;text-align:right;top:267.80px;font-size:8.31px;line-height:12px;color:#141414;font-weight:normal;transform:scaleX(0.83);-webkit-text-stroke:0.2px currentColor;transform-origin:100% 0;">2539</span>
<span style="left:-243.10px;width:300px;text-align:right;top:267.80px;font-size:8.31px;line-height:12px;color:#141414;font-weight:normal;transform:scaleX(0.83);-webkit-text-stroke:0.2px currentColor;transform-origin:100% 0;">2479</span>
<span style="left:-227.60px;width:300px;text-align:right;top:267.80px;font-size:8.31px;line-height:12px;color:#141414;font-weight:normal;transform:scaleX(0.83);-webkit-text-stroke:0.2px currentColor;transform-origin:100% 0;">1</span>
<span style="left:-205.70px;width:300px;text-align:right;top:267.80px;font-size:8.31px;line-height:12px;color:#141414;font-weight:normal;transform:scaleX(0.83);-webkit-text-stroke:0.2px currentColor;transform-origin:100% 0;">2043</span>
<span style="left:96.90px;top:267.80px;font-size:8.31px;line-height:12px;color:#141414;font-weight:normal;transform:scaleX(0.83);-webkit-text-stroke:0.2px currentColor;transform-origin:0 0;">Mumenna</span>
<span style="left:154.20px;top:267.80px;font-size:8.31px;line-height:12px;color:#141414;font-weight:normal;transform:scaleX(0.83);-webkit-text-stroke:0.2px currentColor;transform-origin:0 0;">Peuwmet</span>
<span style="left:211.20px;top:267.80px;font-size:8.31px;line-height:12px;color:#141414;font-weight:normal;transform:scaleX(0.83);-webkit-text-stroke:0.2px currentColor;transform-origin:0 0;">26.12.1988</span>
<span style="left:264.60px;top:267.80px;font-size:8.31px;line-height:12px;color:#141414;font-weight:normal;transform:scaleX(0.83);-webkit-text-stroke:0.2px currentColor;transform-origin:0 0;">15.06.2022</span>
<span style="left:304.60px;top:267.80px;font-size:8.31px;line-height:12px;color:#141414;font-weight:normal;transform:scaleX(0.83);-webkit-text-stroke:0.2px currentColor;transform-origin:0 0;">20.06.2022</span>
<span style="left:344.90px;top:267.80px;font-size:8.31px;line-height:12px;color:#141414;font-weight:normal;transform:scaleX(0.83);-webkit-text-stroke:0.2px currentColor;transform-origin:0 0;">17.12.2023</span>
<span style="left:406.40px;top:267.80px;font-size:8.31px;line-height:12px;color:#141414;font-weight:normal;transform:scaleX(0.83);-webkit-text-stroke:0.2px currentColor;transform-origin:0 0;">20.07.2023</span>
<span style="left:479.80px;top:267.80px;font-size:8.31px;line-height:12px;color:#141414;font-weight:normal;transform:scaleX(0.83);-webkit-text-stroke:0.2px currentColor;transform-origin:0 0;">17.12.2023</span>
<span style="left:248.40px;width:300px;text-align:right;top:267.80px;font-size:8.31px;line-height:12px;color:#fff;font-weight:normal;transform:scaleX(0.83);-webkit-text-stroke:0.2px currentColor;transform-origin:100% 0;">29</span>
<span style="left:377.70px;width:300px;text-align:right;top:267.80px;font-size:8.31px;line-height:12px;color:#fff;font-weight:normal;transform:scaleX(0.83);-webkit-text-stroke:0.2px currentColor;transform-origin:100% 0;">1</span>
<span style="left:745.20px;top:267.80px;font-size:8.31px;line-height:12px;color:#141414;font-weight:normal;transform:scaleX(0.83);-webkit-text-stroke:0.2px currentColor;transform-origin:0 0;">IKK Classic (Ost)</span>
<span style="left:941.40px;top:267.80px;font-size:8.31px;line-height:12px;color:#141414;font-weight:normal;transform:scaleX(0.83);-webkit-text-stroke:0.2px currentColor;transform-origin:0 0;">107202793</span>
<span style="left:981.20px;top:267.80px;font-size:8.31px;line-height:12px;color:#141414;font-weight:normal;transform:scaleX(0.83);-webkit-text-stroke:0.2px currentColor;transform-origin:0 0;">441612217</span>
<span style="left:-264.50px;width:300px;text-align:right;top:278.13px;font-size:8.31px;line-height:12px;color:#141414;font-weight:normal;transform:scaleX(0.83);-webkit-text-stroke:0.2px currentColor;transform-origin:100% 0;">2542</span>
<span style="left:-243.10px;width:300px;text-align:right;top:278.13px;font-size:8.31px;line-height:12px;color:#141414;font-weight:normal;transform:scaleX(0.83);-webkit-text-stroke:0.2px currentColor;transform-origin:100% 0;">2482</span>
<span style="left:-227.60px;width:300px;text-align:right;top:278.13px;font-size:8.31px;line-height:12px;color:#141414;font-weight:normal;transform:scaleX(0.83);-webkit-text-stroke:0.2px currentColor;transform-origin:100% 0;">1</span>
<span style="left:-205.70px;width:300px;text-align:right;top:278.13px;font-size:8.31px;line-height:12px;color:#141414;font-weight:normal;transform:scaleX(0.83);-webkit-text-stroke:0.2px currentColor;transform-origin:100% 0;">2046</span>
<span style="left:96.90px;top:278.13px;font-size:8.31px;line-height:12px;color:#141414;font-weight:normal;transform:scaleX(0.83);-webkit-text-stroke:0.2px currentColor;transform-origin:0 0;">Laoxel</span>
<span style="left:154.20px;top:278.13px;font-size:8.31px;line-height:12px;color:#141414;font-weight:normal;transform:scaleX(0.83);-webkit-text-stroke:0.2px currentColor;transform-origin:0 0;">Zacpal</span>
<span style="left:211.20px;top:278.13px;font-size:8.31px;line-height:12px;color:#141414;font-weight:normal;transform:scaleX(0.83);-webkit-text-stroke:0.2px currentColor;transform-origin:0 0;">06.06.1945</span>
<span style="left:264.60px;top:278.13px;font-size:8.31px;line-height:12px;color:#141414;font-weight:normal;transform:scaleX(0.83);-webkit-text-stroke:0.2px currentColor;transform-origin:0 0;">01.07.2022</span>
<span style="left:304.60px;top:278.13px;font-size:8.31px;line-height:12px;color:#141414;font-weight:normal;transform:scaleX(0.83);-webkit-text-stroke:0.2px currentColor;transform-origin:0 0;">01.07.2022</span>
<span style="left:344.90px;top:278.13px;font-size:8.31px;line-height:12px;color:#141414;font-weight:normal;transform:scaleX(0.83);-webkit-text-stroke:0.2px currentColor;transform-origin:0 0;">03.01.2024</span>
<span style="left:406.40px;top:278.13px;font-size:8.31px;line-height:12px;color:#141414;font-weight:normal;transform:scaleX(0.83);-webkit-text-stroke:0.2px currentColor;transform-origin:0 0;">17.07.2023</span>
<span style="left:479.80px;top:278.13px;font-size:8.31px;line-height:12px;color:#141414;font-weight:normal;transform:scaleX(0.83);-webkit-text-stroke:0.2px currentColor;transform-origin:0 0;">03.01.2024</span>
<span style="left:248.40px;width:300px;text-align:right;top:278.13px;font-size:8.31px;line-height:12px;color:#fff;font-weight:normal;transform:scaleX(0.83);-webkit-text-stroke:0.2px currentColor;transform-origin:100% 0;">23</span>
<span style="left:377.70px;width:300px;text-align:right;top:278.13px;font-size:8.31px;line-height:12px;color:#fff;font-weight:normal;transform:scaleX(0.83);-webkit-text-stroke:0.2px currentColor;transform-origin:100% 0;">1</span>
<span style="left:745.20px;top:278.13px;font-size:8.31px;line-height:12px;color:#141414;font-weight:normal;transform:scaleX(0.83);-webkit-text-stroke:0.2px currentColor;transform-origin:0 0;">BARMER</span>
<span style="left:941.40px;top:278.13px;font-size:8.31px;line-height:12px;color:#141414;font-weight:normal;transform:scaleX(0.83);-webkit-text-stroke:0.2px currentColor;transform-origin:0 0;">105080008</span>
<span style="left:981.20px;top:278.13px;font-size:8.31px;line-height:12px;color:#141414;font-weight:normal;transform:scaleX(0.83);-webkit-text-stroke:0.2px currentColor;transform-origin:0 0;">441612217</span>
<span style="left:-264.50px;width:300px;text-align:right;top:288.46px;font-size:8.31px;line-height:12px;color:#141414;font-weight:normal;transform:scaleX(0.83);-webkit-text-stroke:0.2px currentColor;transform-origin:100% 0;">2543</span>
<span style="left:-243.10px;width:300px;text-align:right;top:288.46px;font-size:8.31px;line-height:12px;color:#141414;font-weight:normal;transform:scaleX(0.83);-webkit-text-stroke:0.2px currentColor;transform-origin:100% 0;">2483</span>
<span style="left:-227.60px;width:300px;text-align:right;top:288.46px;font-size:8.31px;line-height:12px;color:#141414;font-weight:normal;transform:scaleX(0.83);-webkit-text-stroke:0.2px currentColor;transform-origin:100% 0;">1</span>
<span style="left:-205.70px;width:300px;text-align:right;top:288.46px;font-size:8.31px;line-height:12px;color:#141414;font-weight:normal;transform:scaleX(0.83);-webkit-text-stroke:0.2px currentColor;transform-origin:100% 0;">1400</span>
<span style="left:96.90px;top:288.46px;font-size:8.31px;line-height:12px;color:#141414;font-weight:normal;transform:scaleX(0.83);-webkit-text-stroke:0.2px currentColor;transform-origin:0 0;">Gilom</span>
<span style="left:154.20px;top:288.46px;font-size:8.31px;line-height:12px;color:#141414;font-weight:normal;transform:scaleX(0.83);-webkit-text-stroke:0.2px currentColor;transform-origin:0 0;">Nlimmal</span>
<span style="left:211.20px;top:288.46px;font-size:8.31px;line-height:12px;color:#141414;font-weight:normal;transform:scaleX(0.83);-webkit-text-stroke:0.2px currentColor;transform-origin:0 0;">19.06.1957</span>
<span style="left:264.60px;top:288.46px;font-size:8.31px;line-height:12px;color:#141414;font-weight:normal;transform:scaleX(0.83);-webkit-text-stroke:0.2px currentColor;transform-origin:0 0;">04.07.2022</span>
<span style="left:304.60px;top:288.46px;font-size:8.31px;line-height:12px;color:#141414;font-weight:normal;transform:scaleX(0.83);-webkit-text-stroke:0.2px currentColor;transform-origin:0 0;">07.07.2022</span>
<span style="left:344.90px;top:288.46px;font-size:8.31px;line-height:12px;color:#141414;font-weight:normal;transform:scaleX(0.83);-webkit-text-stroke:0.2px currentColor;transform-origin:0 0;">03.02.2024</span>
<span style="left:406.40px;top:288.46px;font-size:8.31px;line-height:12px;color:#141414;font-weight:normal;transform:scaleX(0.83);-webkit-text-stroke:0.2px currentColor;transform-origin:0 0;">21.07.2023</span>
<span style="left:479.80px;top:288.46px;font-size:8.31px;line-height:12px;color:#141414;font-weight:normal;transform:scaleX(0.83);-webkit-text-stroke:0.2px currentColor;transform-origin:0 0;">03.02.2024</span>
<span style="left:248.40px;width:300px;text-align:right;top:288.46px;font-size:8.31px;line-height:12px;color:#fff;font-weight:normal;transform:scaleX(0.83);-webkit-text-stroke:0.2px currentColor;transform-origin:100% 0;">28</span>
<span style="left:377.70px;width:300px;text-align:right;top:288.46px;font-size:8.31px;line-height:12px;color:#fff;font-weight:normal;transform:scaleX(0.83);-webkit-text-stroke:0.2px currentColor;transform-origin:100% 0;">1</span>
<span style="left:745.20px;top:288.46px;font-size:8.31px;line-height:12px;color:#141414;font-weight:normal;transform:scaleX(0.83);-webkit-text-stroke:0.2px currentColor;transform-origin:0 0;">KKH</span>
<span style="left:941.40px;top:288.46px;font-size:8.31px;line-height:12px;color:#141414;font-weight:normal;transform:scaleX(0.83);-webkit-text-stroke:0.2px currentColor;transform-origin:0 0;">102171012</span>
<span style="left:981.20px;top:288.46px;font-size:8.31px;line-height:12px;color:#141414;font-weight:normal;transform:scaleX(0.83);-webkit-text-stroke:0.2px currentColor;transform-origin:0 0;">441112212</span>
<span style="left:-264.50px;width:300px;text-align:right;top:298.78px;font-size:8.31px;line-height:12px;color:#141414;font-weight:normal;transform:scaleX(0.83);-webkit-text-stroke:0.2px currentColor;transform-origin:100% 0;">2547</span>
<span style="left:-243.10px;width:300px;text-align:right;top:298.78px;font-size:8.31px;line-height:12px;color:#141414;font-weight:normal;transform:scaleX(0.83);-webkit-text-stroke:0.2px currentColor;transform-origin:100% 0;">2486</span>
<span style="left:-227.60px;width:300px;text-align:right;top:298.78px;font-size:8.31px;line-height:12px;color:#141414;font-weight:normal;transform:scaleX(0.83);-webkit-text-stroke:0.2px currentColor;transform-origin:100% 0;">1</span>
<span style="left:-205.70px;width:300px;text-align:right;top:298.78px;font-size:8.31px;line-height:12px;color:#141414;font-weight:normal;transform:scaleX(0.83);-webkit-text-stroke:0.2px currentColor;transform-origin:100% 0;">2049</span>
<span style="left:96.90px;top:298.78px;font-size:8.31px;line-height:12px;color:#141414;font-weight:normal;transform:scaleX(0.83);-webkit-text-stroke:0.2px currentColor;transform-origin:0 0;">Echos</span>
<span style="left:154.20px;top:298.78px;font-size:8.31px;line-height:12px;color:#141414;font-weight:normal;transform:scaleX(0.83);-webkit-text-stroke:0.2px currentColor;transform-origin:0 0;">Zacpal</span>
<span style="left:211.20px;top:298.78px;font-size:8.31px;line-height:12px;color:#141414;font-weight:normal;transform:scaleX(0.83);-webkit-text-stroke:0.2px currentColor;transform-origin:0 0;">21.04.1942</span>
<span style="left:264.60px;top:298.78px;font-size:8.31px;line-height:12px;color:#141414;font-weight:normal;transform:scaleX(0.83);-webkit-text-stroke:0.2px currentColor;transform-origin:0 0;">11.07.2022</span>
<span style="left:304.60px;top:298.78px;font-size:8.31px;line-height:12px;color:#141414;font-weight:normal;transform:scaleX(0.83);-webkit-text-stroke:0.2px currentColor;transform-origin:0 0;">12.07.2022</span>
<span style="left:344.90px;top:298.78px;font-size:8.31px;line-height:12px;color:#141414;font-weight:normal;transform:scaleX(0.83);-webkit-text-stroke:0.2px currentColor;transform-origin:0 0;">24.01.2024</span>
<span style="left:406.40px;top:298.78px;font-size:8.31px;line-height:12px;color:#141414;font-weight:normal;transform:scaleX(0.83);-webkit-text-stroke:0.2px currentColor;transform-origin:0 0;">07.07.2023</span>
<span style="left:479.80px;top:298.78px;font-size:8.31px;line-height:12px;color:#141414;font-weight:normal;transform:scaleX(0.83);-webkit-text-stroke:0.2px currentColor;transform-origin:0 0;">24.01.2024</span>
<span style="left:248.40px;width:300px;text-align:right;top:298.78px;font-size:8.31px;line-height:12px;color:#fff;font-weight:normal;transform:scaleX(0.83);-webkit-text-stroke:0.2px currentColor;transform-origin:100% 0;">32</span>
<span style="left:377.70px;width:300px;text-align:right;top:298.78px;font-size:8.31px;line-height:12px;color:#fff;font-weight:normal;transform:scaleX(0.83);-webkit-text-stroke:0.2px currentColor;transform-origin:100% 0;">1</span>
<span style="left:745.20px;top:298.78px;font-size:8.31px;line-height:12px;color:#141414;font-weight:normal;transform:scaleX(0.83);-webkit-text-stroke:0.2px currentColor;transform-origin:0 0;">DAK Gesundheit</span>
<span style="left:941.40px;top:298.78px;font-size:8.31px;line-height:12px;color:#141414;font-weight:normal;transform:scaleX(0.83);-webkit-text-stroke:0.2px currentColor;transform-origin:0 0;">105836717</span>
<span style="left:981.20px;top:298.78px;font-size:8.31px;line-height:12px;color:#141414;font-weight:normal;transform:scaleX(0.83);-webkit-text-stroke:0.2px currentColor;transform-origin:0 0;">441612217</span>
<span style="left:-264.50px;width:300px;text-align:right;top:309.11px;font-size:8.31px;line-height:12px;color:#141414;font-weight:normal;transform:scaleX(0.83);-webkit-text-stroke:0.2px currentColor;transform-origin:100% 0;">2552</span>
<span style="left:-243.10px;width:300px;text-align:right;top:309.11px;font-size:8.31px;line-height:12px;color:#141414;font-weight:normal;transform:scaleX(0.83);-webkit-text-stroke:0.2px currentColor;transform-origin:100% 0;">2489</span>
<span style="left:-227.60px;width:300px;text-align:right;top:309.11px;font-size:8.31px;line-height:12px;color:#141414;font-weight:normal;transform:scaleX(0.83);-webkit-text-stroke:0.2px currentColor;transform-origin:100% 0;">1</span>
<span style="left:-205.70px;width:300px;text-align:right;top:309.11px;font-size:8.31px;line-height:12px;color:#141414;font-weight:normal;transform:scaleX(0.83);-webkit-text-stroke:0.2px currentColor;transform-origin:100% 0;">2050</span>
<span style="left:96.90px;top:309.11px;font-size:8.31px;line-height:12px;color:#141414;font-weight:normal;transform:scaleX(0.83);-webkit-text-stroke:0.2px currentColor;transform-origin:0 0;">Palmnon</span>
<span style="left:154.20px;top:309.11px;font-size:8.31px;line-height:12px;color:#141414;font-weight:normal;transform:scaleX(0.83);-webkit-text-stroke:0.2px currentColor;transform-origin:0 0;">Dünnoch</span>
<span style="left:211.20px;top:309.11px;font-size:8.31px;line-height:12px;color:#141414;font-weight:normal;transform:scaleX(0.83);-webkit-text-stroke:0.2px currentColor;transform-origin:0 0;">23.10.1967</span>
<span style="left:264.60px;top:309.11px;font-size:8.31px;line-height:12px;color:#141414;font-weight:normal;transform:scaleX(0.83);-webkit-text-stroke:0.2px currentColor;transform-origin:0 0;">18.05.2022</span>
<span style="left:304.60px;top:309.11px;font-size:8.31px;line-height:12px;color:#141414;font-weight:normal;transform:scaleX(0.83);-webkit-text-stroke:0.2px currentColor;transform-origin:0 0;">21.06.2022</span>
<span style="left:344.90px;top:309.11px;font-size:8.31px;line-height:12px;color:#141414;font-weight:normal;transform:scaleX(0.83);-webkit-text-stroke:0.2px currentColor;transform-origin:0 0;">03.02.2024</span>
<span style="left:406.40px;top:309.11px;font-size:8.31px;line-height:12px;color:#141414;font-weight:normal;transform:scaleX(0.83);-webkit-text-stroke:0.2px currentColor;transform-origin:0 0;">12.07.2023</span>
<span style="left:479.80px;top:309.11px;font-size:8.31px;line-height:12px;color:#141414;font-weight:normal;transform:scaleX(0.83);-webkit-text-stroke:0.2px currentColor;transform-origin:0 0;">03.02.2024</span>
<span style="left:248.40px;width:300px;text-align:right;top:309.11px;font-size:8.31px;line-height:12px;color:#fff;font-weight:normal;transform:scaleX(0.83);-webkit-text-stroke:0.2px currentColor;transform-origin:100% 0;">24</span>
<span style="left:377.70px;width:300px;text-align:right;top:309.11px;font-size:8.31px;line-height:12px;color:#fff;font-weight:normal;transform:scaleX(0.83);-webkit-text-stroke:0.2px currentColor;transform-origin:100% 0;">1</span>
<span style="left:745.20px;top:309.11px;font-size:8.31px;line-height:12px;color:#141414;font-weight:normal;transform:scaleX(0.83);-webkit-text-stroke:0.2px currentColor;transform-origin:0 0;">AOK Plus</span>
<span style="left:941.40px;top:309.11px;font-size:8.31px;line-height:12px;color:#141414;font-weight:normal;transform:scaleX(0.83);-webkit-text-stroke:0.2px currentColor;transform-origin:0 0;">105998018</span>
<span style="left:981.20px;top:309.11px;font-size:8.31px;line-height:12px;color:#141414;font-weight:normal;transform:scaleX(0.83);-webkit-text-stroke:0.2px currentColor;transform-origin:0 0;">441612217</span>
<span style="left:-264.50px;width:300px;text-align:right;top:319.44px;font-size:8.31px;line-height:12px;color:#141414;font-weight:normal;transform:scaleX(0.83);-webkit-text-stroke:0.2px currentColor;transform-origin:100% 0;">2560</span>
<span style="left:-243.10px;width:300px;text-align:right;top:319.44px;font-size:8.31px;line-height:12px;color:#141414;font-weight:normal;transform:scaleX(0.83);-webkit-text-stroke:0.2px currentColor;transform-origin:100% 0;">2495</span>
<span style="left:-227.60px;width:300px;text-align:right;top:319.44px;font-size:8.31px;line-height:12px;color:#141414;font-weight:normal;transform:scaleX(0.83);-webkit-text-stroke:0.2px currentColor;transform-origin:100% 0;">1</span>
<span style="left:-205.70px;width:300px;text-align:right;top:319.44px;font-size:8.31px;line-height:12px;color:#141414;font-weight:normal;transform:scaleX(0.83);-webkit-text-stroke:0.2px currentColor;transform-origin:100% 0;">2047</span>
<span style="left:96.90px;top:319.44px;font-size:8.31px;line-height:12px;color:#141414;font-weight:normal;transform:scaleX(0.83);-webkit-text-stroke:0.2px currentColor;transform-origin:0 0;">Haoglun</span>
<span style="left:154.20px;top:319.44px;font-size:8.31px;line-height:12px;color:#141414;font-weight:normal;transform:scaleX(0.83);-webkit-text-stroke:0.2px currentColor;transform-origin:0 0;">Mchaagal</span>
<span style="left:211.20px;top:319.44px;font-size:8.31px;line-height:12px;color:#141414;font-weight:normal;transform:scaleX(0.83);-webkit-text-stroke:0.2px currentColor;transform-origin:0 0;">19.11.1973</span>
<span style="left:264.60px;top:319.44px;font-size:8.31px;line-height:12px;color:#141414;font-weight:normal;transform:scaleX(0.83);-webkit-text-stroke:0.2px currentColor;transform-origin:0 0;">24.06.2022</span>
<span style="left:304.60px;top:319.44px;font-size:8.31px;line-height:12px;color:#141414;font-weight:normal;transform:scaleX(0.83);-webkit-text-stroke:0.2px currentColor;transform-origin:0 0;">05.07.2022</span>
<span style="left:344.90px;top:319.44px;font-size:8.31px;line-height:12px;color:#141414;font-weight:normal;transform:scaleX(0.83);-webkit-text-stroke:0.2px currentColor;transform-origin:0 0;">21.12.2023</span>
<span style="left:406.40px;top:319.44px;font-size:8.31px;line-height:12px;color:#141414;font-weight:normal;transform:scaleX(0.83);-webkit-text-stroke:0.2px currentColor;transform-origin:0 0;">03.07.2023</span>
<span style="left:479.80px;top:319.44px;font-size:8.31px;line-height:12px;color:#141414;font-weight:normal;transform:scaleX(0.83);-webkit-text-stroke:0.2px currentColor;transform-origin:0 0;">21.12.2023</span>
<span style="left:248.40px;width:300px;text-align:right;top:319.44px;font-size:8.31px;line-height:12px;color:#fff;font-weight:normal;transform:scaleX(0.83);-webkit-text-stroke:0.2px currentColor;transform-origin:100% 0;">29</span>
<span style="left:377.70px;width:300px;text-align:right;top:319.44px;font-size:8.31px;line-height:12px;color:#fff;font-weight:normal;transform:scaleX(0.83);-webkit-text-stroke:0.2px currentColor;transform-origin:100% 0;">1</span>
<span style="left:745.20px;top:319.44px;font-size:8.31px;line-height:12px;color:#141414;font-weight:normal;transform:scaleX(0.83);-webkit-text-stroke:0.2px currentColor;transform-origin:0 0;">IKK Classic (Ost)</span>
<span style="left:941.40px;top:319.44px;font-size:8.31px;line-height:12px;color:#141414;font-weight:normal;transform:scaleX(0.83);-webkit-text-stroke:0.2px currentColor;transform-origin:0 0;">107202793</span>
<span style="left:981.20px;top:319.44px;font-size:8.31px;line-height:12px;color:#141414;font-weight:normal;transform:scaleX(0.83);-webkit-text-stroke:0.2px currentColor;transform-origin:0 0;">441612217</span>
<span style="left:-264.50px;width:300px;text-align:right;top:329.76px;font-size:8.31px;line-height:12px;color:#141414;font-weight:normal;transform:scaleX(0.83);-webkit-text-stroke:0.2px currentColor;transform-origin:100% 0;">2562</span>
<span style="left:-243.10px;width:300px;text-align:right;top:329.76px;font-size:8.31px;line-height:12px;color:#141414;font-weight:normal;transform:scaleX(0.83);-webkit-text-stroke:0.2px currentColor;transform-origin:100% 0;">2497</span>
<span style="left:-227.60px;width:300px;text-align:right;top:329.76px;font-size:8.31px;line-height:12px;color:#141414;font-weight:normal;transform:scaleX(0.83);-webkit-text-stroke:0.2px currentColor;transform-origin:100% 0;">1</span>
<span style="left:-205.70px;width:300px;text-align:right;top:329.76px;font-size:8.31px;line-height:12px;color:#141414;font-weight:normal;transform:scaleX(0.83);-webkit-text-stroke:0.2px currentColor;transform-origin:100% 0;">2054</span>
<span style="left:96.90px;top:329.76px;font-size:8.31px;line-height:12px;color:#141414;font-weight:normal;transform:scaleX(0.83);-webkit-text-stroke:0.2px currentColor;transform-origin:0 0;">Gedsel</span>
<span style="left:154.20px;top:329.76px;font-size:8.31px;line-height:12px;color:#141414;font-weight:normal;transform:scaleX(0.83);-webkit-text-stroke:0.2px currentColor;transform-origin:0 0;">Wloagloch</span>
<span style="left:211.20px;top:329.76px;font-size:8.31px;line-height:12px;color:#141414;font-weight:normal;transform:scaleX(0.83);-webkit-text-stroke:0.2px currentColor;transform-origin:0 0;">28.05.1957</span>
<span style="left:264.60px;top:329.76px;font-size:8.31px;line-height:12px;color:#141414;font-weight:normal;transform:scaleX(0.83);-webkit-text-stroke:0.2px currentColor;transform-origin:0 0;">12.07.2022</span>
<span style="left:304.60px;top:329.76px;font-size:8.31px;line-height:12px;color:#141414;font-weight:normal;transform:scaleX(0.83);-webkit-text-stroke:0.2px currentColor;transform-origin:0 0;">13.07.2022</span>
<span style="left:344.90px;top:329.76px;font-size:8.31px;line-height:12px;color:#141414;font-weight:normal;transform:scaleX(0.83);-webkit-text-stroke:0.2px currentColor;transform-origin:0 0;">08.01.2024</span>
<span style="left:406.40px;top:329.76px;font-size:8.31px;line-height:12px;color:#141414;font-weight:normal;transform:scaleX(0.83);-webkit-text-stroke:0.2px currentColor;transform-origin:0 0;">12.06.2023</span>
<span style="left:479.80px;top:329.76px;font-size:8.31px;line-height:12px;color:#141414;font-weight:normal;transform:scaleX(0.83);-webkit-text-stroke:0.2px currentColor;transform-origin:0 0;">03.01.2024</span>
<span style="left:248.40px;width:300px;text-align:right;top:329.76px;font-size:8.31px;line-height:12px;color:#fff;font-weight:normal;transform:scaleX(0.83);-webkit-text-stroke:0.2px currentColor;transform-origin:100% 0;">11</span>
<span style="left:377.70px;width:300px;text-align:right;top:329.76px;font-size:8.31px;line-height:12px;color:#fff;font-weight:normal;transform:scaleX(0.83);-webkit-text-stroke:0.2px currentColor;transform-origin:100% 0;">1</span>
<span style="left:745.20px;top:329.76px;font-size:8.31px;line-height:12px;color:#141414;font-weight:normal;transform:scaleX(0.83);-webkit-text-stroke:0.2px currentColor;transform-origin:0 0;">IKK Classic (Ost)</span>
<span style="left:941.40px;top:329.76px;font-size:8.31px;line-height:12px;color:#141414;font-weight:normal;transform:scaleX(0.83);-webkit-text-stroke:0.2px currentColor;transform-origin:0 0;">107202793</span>
<span style="left:981.20px;top:329.76px;font-size:8.31px;line-height:12px;color:#141414;font-weight:normal;transform:scaleX(0.83);-webkit-text-stroke:0.2px currentColor;transform-origin:0 0;">441612217</span>
<span style="left:-264.50px;width:300px;text-align:right;top:340.09px;font-size:8.31px;line-height:12px;color:#141414;font-weight:normal;transform:scaleX(0.83);-webkit-text-stroke:0.2px currentColor;transform-origin:100% 0;">2563</span>
<span style="left:-243.10px;width:300px;text-align:right;top:340.09px;font-size:8.31px;line-height:12px;color:#141414;font-weight:normal;transform:scaleX(0.83);-webkit-text-stroke:0.2px currentColor;transform-origin:100% 0;">2498</span>
<span style="left:-227.60px;width:300px;text-align:right;top:340.09px;font-size:8.31px;line-height:12px;color:#141414;font-weight:normal;transform:scaleX(0.83);-webkit-text-stroke:0.2px currentColor;transform-origin:100% 0;">1</span>
<span style="left:-205.70px;width:300px;text-align:right;top:340.09px;font-size:8.31px;line-height:12px;color:#141414;font-weight:normal;transform:scaleX(0.83);-webkit-text-stroke:0.2px currentColor;transform-origin:100% 0;">2056</span>
<span style="left:96.90px;top:340.09px;font-size:8.31px;line-height:12px;color:#141414;font-weight:normal;transform:scaleX(0.83);-webkit-text-stroke:0.2px currentColor;transform-origin:0 0;">Domare</span>
<span style="left:154.20px;top:340.09px;font-size:8.31px;line-height:12px;color:#141414;font-weight:normal;transform:scaleX(0.83);-webkit-text-stroke:0.2px currentColor;transform-origin:0 0;">Mürral</span>
<span style="left:211.20px;top:340.09px;font-size:8.31px;line-height:12px;color:#141414;font-weight:normal;transform:scaleX(0.83);-webkit-text-stroke:0.2px currentColor;transform-origin:0 0;">25.12.1956</span>
<span style="left:264.60px;top:340.09px;font-size:8.31px;line-height:12px;color:#141414;font-weight:normal;transform:scaleX(0.83);-webkit-text-stroke:0.2px currentColor;transform-origin:0 0;">06.07.2022</span>
<span style="left:304.60px;top:340.09px;font-size:8.31px;line-height:12px;color:#141414;font-weight:normal;transform:scaleX(0.83);-webkit-text-stroke:0.2px currentColor;transform-origin:0 0;">11.07.2022</span>
<span style="left:344.90px;top:340.09px;font-size:8.31px;line-height:12px;color:#141414;font-weight:normal;transform:scaleX(0.83);-webkit-text-stroke:0.2px currentColor;transform-origin:0 0;">02.01.2024</span>
<span style="left:406.40px;top:340.09px;font-size:8.31px;line-height:12px;color:#141414;font-weight:normal;transform:scaleX(0.83);-webkit-text-stroke:0.2px currentColor;transform-origin:0 0;">18.07.2023</span>
<span style="left:479.80px;top:340.09px;font-size:8.31px;line-height:12px;color:#141414;font-weight:normal;transform:scaleX(0.83);-webkit-text-stroke:0.2px currentColor;transform-origin:0 0;">02.01.2024</span>
<span style="left:248.40px;width:300px;text-align:right;top:340.09px;font-size:8.31px;line-height:12px;color:#fff;font-weight:normal;transform:scaleX(0.83);-webkit-text-stroke:0.2px currentColor;transform-origin:100% 0;">21</span>
<span style="left:377.70px;width:300px;text-align:right;top:340.09px;font-size:8.31px;line-height:12px;color:#fff;font-weight:normal;transform:scaleX(0.83);-webkit-text-stroke:0.2px currentColor;transform-origin:100% 0;">1</span>
<span style="left:745.20px;top:340.09px;font-size:8.31px;line-height:12px;color:#141414;font-weight:normal;transform:scaleX(0.83);-webkit-text-stroke:0.2px currentColor;transform-origin:0 0;">KKH</span>
<span style="left:941.40px;top:340.09px;font-size:8.31px;line-height:12px;color:#141414;font-weight:normal;transform:scaleX(0.83);-webkit-text-stroke:0.2px currentColor;transform-origin:0 0;">105075502</span>
<span style="left:981.20px;top:340.09px;font-size:8.31px;line-height:12px;color:#141414;font-weight:normal;transform:scaleX(0.83);-webkit-text-stroke:0.2px currentColor;transform-origin:0 0;">441612217</span>
<span style="left:-264.50px;width:300px;text-align:right;top:350.42px;font-size:8.31px;line-height:12px;color:#141414;font-weight:normal;transform:scaleX(0.83);-webkit-text-stroke:0.2px currentColor;transform-origin:100% 0;">2567</span>
<span style="left:-243.10px;width:300px;text-align:right;top:350.42px;font-size:8.31px;line-height:12px;color:#141414;font-weight:normal;transform:scaleX(0.83);-webkit-text-stroke:0.2px currentColor;transform-origin:100% 0;">2502</span>
<span style="left:-227.60px;width:300px;text-align:right;top:350.42px;font-size:8.31px;line-height:12px;color:#141414;font-weight:normal;transform:scaleX(0.83);-webkit-text-stroke:0.2px currentColor;transform-origin:100% 0;">1</span>
<span style="left:-205.70px;width:300px;text-align:right;top:350.42px;font-size:8.31px;line-height:12px;color:#141414;font-weight:normal;transform:scaleX(0.83);-webkit-text-stroke:0.2px currentColor;transform-origin:100% 0;">2059</span>
<span style="left:96.90px;top:350.42px;font-size:8.31px;line-height:12px;color:#141414;font-weight:normal;transform:scaleX(0.83);-webkit-text-stroke:0.2px currentColor;transform-origin:0 0;">Donne</span>
<span style="left:154.20px;top:350.42px;font-size:8.31px;line-height:12px;color:#141414;font-weight:normal;transform:scaleX(0.83);-webkit-text-stroke:0.2px currentColor;transform-origin:0 0;">Dlißa</span>
<span style="left:211.20px;top:350.42px;font-size:8.31px;line-height:12px;color:#141414;font-weight:normal;transform:scaleX(0.83);-webkit-text-stroke:0.2px currentColor;transform-origin:0 0;">13.08.1968</span>
<span style="left:264.60px;top:350.42px;font-size:8.31px;line-height:12px;color:#141414;font-weight:normal;transform:scaleX(0.83);-webkit-text-stroke:0.2px currentColor;transform-origin:0 0;">09.06.2022</span>
<span style="left:304.60px;top:350.42px;font-size:8.31px;line-height:12px;color:#141414;font-weight:normal;transform:scaleX(0.83);-webkit-text-stroke:0.2px currentColor;transform-origin:0 0;">30.06.2022</span>
<span style="left:344.90px;top:350.42px;font-size:8.31px;line-height:12px;color:#141414;font-weight:normal;transform:scaleX(0.83);-webkit-text-stroke:0.2px currentColor;transform-origin:0 0;">06.12.2023</span>
<span style="left:406.40px;top:350.42px;font-size:8.31px;line-height:12px;color:#141414;font-weight:normal;transform:scaleX(0.83);-webkit-text-stroke:0.2px currentColor;transform-origin:0 0;"></span>
<span style="left:479.80px;top:350.42px;font-size:8.31px;line-height:12px;color:#fff;font-weight:normal;transform:scaleX(0.83);-webkit-text-stroke:0.2px currentColor;transform-origin:0 0;">26.07.2022</span>
<span style="left:248.40px;width:300px;text-align:right;top:350.42px;font-size:8.31px;line-height:12px;color:#141414;font-weight:normal;transform:scaleX(0.83);-webkit-text-stroke:0.2px currentColor;transform-origin:100% 0;"></span>
<span style="left:377.70px;width:300px;text-align:right;top:350.42px;font-size:8.31px;line-height:12px;color:#141414;font-weight:normal;transform:scaleX(0.83);-webkit-text-stroke:0.2px currentColor;transform-origin:100% 0;">1</span>
<span style="left:745.20px;top:350.42px;font-size:8.31px;line-height:12px;color:#141414;font-weight:normal;transform:scaleX(0.83);-webkit-text-stroke:0.2px currentColor;transform-origin:0 0;">IKK Classic (Ost)</span>
<span style="left:941.40px;top:350.42px;font-size:8.31px;line-height:12px;color:#141414;font-weight:normal;transform:scaleX(0.83);-webkit-text-stroke:0.2px currentColor;transform-origin:0 0;">107202793</span>
<span style="left:981.20px;top:350.42px;font-size:8.31px;line-height:12px;color:#141414;font-weight:normal;transform:scaleX(0.83);-webkit-text-stroke:0.2px currentColor;transform-origin:0 0;">441612217</span>
<span style="left:-264.50px;width:300px;text-align:right;top:360.74px;font-size:8.31px;line-height:12px;color:#141414;font-weight:normal;transform:scaleX(0.83);-webkit-text-stroke:0.2px currentColor;transform-origin:100% 0;">2570</span>
<span style="left:-243.10px;width:300px;text-align:right;top:360.74px;font-size:8.31px;line-height:12px;color:#141414;font-weight:normal;transform:scaleX(0.83);-webkit-text-stroke:0.2px currentColor;transform-origin:100% 0;">2506</span>
<span style="left:-227.60px;width:300px;text-align:right;top:360.74px;font-size:8.31px;line-height:12px;color:#141414;font-weight:normal;transform:scaleX(0.83);-webkit-text-stroke:0.2px currentColor;transform-origin:100% 0;">1</span>
<span style="left:-205.70px;width:300px;text-align:right;top:360.74px;font-size:8.31px;line-height:12px;color:#141414;font-weight:normal;transform:scaleX(0.83);-webkit-text-stroke:0.2px currentColor;transform-origin:100% 0;">2062</span>
<span style="left:96.90px;top:360.74px;font-size:8.31px;line-height:12px;color:#141414;font-weight:normal;transform:scaleX(0.83);-webkit-text-stroke:0.2px currentColor;transform-origin:0 0;">Jaennanna</span>
<span style="left:154.20px;top:360.74px;font-size:8.31px;line-height:12px;color:#141414;font-weight:normal;transform:scaleX(0.83);-webkit-text-stroke:0.2px currentColor;transform-origin:0 0;">Kokkod</span>
<span style="left:211.20px;top:360.74px;font-size:8.31px;line-height:12px;color:#141414;font-weight:normal;transform:scaleX(0.83);-webkit-text-stroke:0.2px currentColor;transform-origin:0 0;">19.01.1969</span>
<span style="left:264.60px;top:360.74px;font-size:8.31px;line-height:12px;color:#141414;font-weight:normal;transform:scaleX(0.83);-webkit-text-stroke:0.2px currentColor;transform-origin:0 0;">16.04.2022</span>
<span style="left:304.60px;top:360.74px;font-size:8.31px;line-height:12px;color:#141414;font-weight:normal;transform:scaleX(0.83);-webkit-text-stroke:0.2px currentColor;transform-origin:0 0;">19.07.2022</span>
<span style="left:344.90px;top:360.74px;font-size:8.31px;line-height:12px;color:#141414;font-weight:normal;transform:scaleX(0.83);-webkit-text-stroke:0.2px currentColor;transform-origin:0 0;">17.01.2024</span>
<span style="left:406.40px;top:360.74px;font-size:8.31px;line-height:12px;color:#141414;font-weight:normal;transform:scaleX(0.83);-webkit-text-stroke:0.2px currentColor;transform-origin:0 0;">06.07.2023</span>
<span style="left:479.80px;top:360.74px;font-size:8.31px;line-height:12px;color:#141414;font-weight:normal;transform:scaleX(0.83);-webkit-text-stroke:0.2px currentColor;transform-origin:0 0;">17.01.2024</span>
<span style="left:248.40px;width:300px;text-align:right;top:360.74px;font-size:8.31px;line-height:12px;color:#fff;font-weight:normal;transform:scaleX(0.83);-webkit-text-stroke:0.2px currentColor;transform-origin:100% 0;">20</span>
<span style="left:377.70px;width:300px;text-align:right;top:360.74px;font-size:8.31px;line-height:12px;color:#fff;font-weight:normal;transform:scaleX(0.83);-webkit-text-stroke:0.2px currentColor;transform-origin:100% 0;">1</span>
<span style="left:745.20px;top:360.74px;font-size:8.31px;line-height:12px;color:#141414;font-weight:normal;transform:scaleX(0.83);-webkit-text-stroke:0.2px currentColor;transform-origin:0 0;">AOK Plus</span>
<span style="left:941.40px;top:360.74px;font-size:8.31px;line-height:12px;color:#141414;font-weight:normal;transform:scaleX(0.83);-webkit-text-stroke:0.2px currentColor;transform-origin:0 0;">105998018</span>
<span style="left:981.20px;top:360.74px;font-size:8.31px;line-height:12px;color:#141414;font-weight:normal;transform:scaleX(0.83);-webkit-text-stroke:0.2px currentColor;transform-origin:0 0;">441612217</span>
<span style="left:-264.50px;width:300px;text-align:right;top:371.07px;font-size:8.31px;line-height:12px;color:#141414;font-weight:normal;transform:scaleX(0.83);-webkit-text-stroke:0.2px currentColor;transform-origin:100% 0;">2572</span>
<span style="left:-243.10px;width:300px;text-align:right;top:371.07px;font-size:8.31px;line-height:12px;color:#141414;font-weight:normal;transform:scaleX(0.83);-webkit-text-stroke:0.2px currentColor;transform-origin:100% 0;">2508</span>
<span style="left:-227.60px;width:300px;text-align:right;top:371.07px;font-size:8.31px;line-height:12px;color:#141414;font-weight:normal;transform:scaleX(0.83);-webkit-text-stroke:0.2px currentColor;transform-origin:100% 0;">1</span>
<span style="left:-205.70px;width:300px;text-align:right;top:371.07px;font-size:8.31px;line-height:12px;color:#141414;font-weight:normal;transform:scaleX(0.83);-webkit-text-stroke:0.2px currentColor;transform-origin:100% 0;">2064</span>
<span style="left:96.90px;top:371.07px;font-size:8.31px;line-height:12px;color:#141414;font-weight:normal;transform:scaleX(0.83);-webkit-text-stroke:0.2px currentColor;transform-origin:0 0;">Duglun</span>
<span style="left:154.20px;top:371.07px;font-size:8.31px;line-height:12px;color:#141414;font-weight:normal;transform:scaleX(0.83);-webkit-text-stroke:0.2px currentColor;transform-origin:0 0;">Cumma</span>
<span style="left:211.20px;top:371.07px;font-size:8.31px;line-height:12px;color:#141414;font-weight:normal;transform:scaleX(0.83);-webkit-text-stroke:0.2px currentColor;transform-origin:0 0;">02.07.1948</span>
<span style="left:264.60px;top:371.07px;font-size:8.31px;line-height:12px;color:#141414;font-weight:normal;transform:scaleX(0.83);-webkit-text-stroke:0.2px currentColor;transform-origin:0 0;">05.07.2022</span>
<span style="left:304.60px;top:371.07px;font-size:8.31px;line-height:12px;color:#141414;font-weight:normal;transform:scaleX(0.83);-webkit-text-stroke:0.2px currentColor;transform-origin:0 0;">15.07.2022</span>
<span style="left:344.90px;top:371.07px;font-size:8.31px;line-height:12px;color:#141414;font-weight:normal;transform:scaleX(0.83);-webkit-text-stroke:0.2px currentColor;transform-origin:0 0;">21.02.2024</span>
<span style="left:406.40px;top:371.07px;font-size:8.31px;line-height:12px;color:#141414;font-weight:normal;transform:scaleX(0.83);-webkit-text-stroke:0.2px currentColor;transform-origin:0 0;">23.06.2023</span>
<span style="left:479.80px;top:371.07px;font-size:8.31px;line-height:12px;color:#141414;font-weight:normal;transform:scaleX(0.83);-webkit-text-stroke:0.2px currentColor;transform-origin:0 0;">21.02.2024</span>
<span style="left:248.40px;width:300px;text-align:right;top:371.07px;font-size:8.31px;line-height:12px;color:#fff;font-weight:normal;transform:scaleX(0.83);-webkit-text-stroke:0.2px currentColor;transform-origin:100% 0;">23</span>
<span style="left:377.70px;width:300px;text-align:right;top:371.07px;font-size:8.31px;line-height:12px;color:#fff;font-weight:normal;transform:scaleX(0.83);-webkit-text-stroke:0.2px currentColor;transform-origin:100% 0;">1</span>
<span style="left:745.20px;top:371.07px;font-size:8.31px;line-height:12px;color:#141414;font-weight:normal;transform:scaleX(0.83);-webkit-text-stroke:0.2px currentColor;transform-origin:0 0;">TECHNIKER KRANKENKASSE</span>
<span style="left:941.40px;top:371.07px;font-size:8.31px;line-height:12px;color:#141414;font-weight:normal;transform:scaleX(0.83);-webkit-text-stroke:0.2px currentColor;transform-origin:0 0;">105077504</span>
<span style="left:981.20px;top:371.07px;font-size:8.31px;line-height:12px;color:#141414;font-weight:normal;transform:scaleX(0.83);-webkit-text-stroke:0.2px currentColor;transform-origin:0 0;">441112212</span>
<span style="left:-264.50px;width:300px;text-align:right;top:381.40px;font-size:8.31px;line-height:12px;color:#141414;font-weight:normal;transform:scaleX(0.83);-webkit-text-stroke:0.2px currentColor;transform-origin:100% 0;">2578</span>
<span style="left:-243.10px;width:300px;text-align:right;top:381.40px;font-size:8.31px;line-height:12px;color:#141414;font-weight:normal;transform:scaleX(0.83);-webkit-text-stroke:0.2px currentColor;transform-origin:100% 0;">2514</span>
<span style="left:-227.60px;width:300px;text-align:right;top:381.40px;font-size:8.31px;line-height:12px;color:#141414;font-weight:normal;transform:scaleX(0.83);-webkit-text-stroke:0.2px currentColor;transform-origin:100% 0;">1</span>
<span style="left:-205.70px;width:300px;text-align:right;top:381.40px;font-size:8.31px;line-height:12px;color:#141414;font-weight:normal;transform:scaleX(0.83);-webkit-text-stroke:0.2px currentColor;transform-origin:100% 0;">2069</span>
<span style="left:96.90px;top:381.40px;font-size:8.31px;line-height:12px;color:#141414;font-weight:normal;transform:scaleX(0.83);-webkit-text-stroke:0.2px currentColor;transform-origin:0 0;">Jene</span>
<span style="left:154.20px;top:381.40px;font-size:8.31px;line-height:12px;color:#141414;font-weight:normal;transform:scaleX(0.83);-webkit-text-stroke:0.2px currentColor;transform-origin:0 0;">Pralotd</span>
<span style="left:211.20px;top:381.40px;font-size:8.31px;line-height:12px;color:#141414;font-weight:normal;transform:scaleX(0.83);-webkit-text-stroke:0.2px currentColor;transform-origin:0 0;">13.05.1968</span>
<span style="left:264.60px;top:381.40px;font-size:8.31px;line-height:12px;color:#141414;font-weight:normal;transform:scaleX(0.83);-webkit-text-stroke:0.2px currentColor;transform-origin:0 0;">17.05.2022</span>
<span style="left:304.60px;top:381.40px;font-size:8.31px;line-height:12px;color:#141414;font-weight:normal;transform:scaleX(0.83);-webkit-text-stroke:0.2px currentColor;transform-origin:0 0;">11.07.2022</span>
<span style="left:344.90px;top:381.40px;font-size:8.31px;line-height:12px;color:#141414;font-weight:normal;transform:scaleX(0.83);-webkit-text-stroke:0.2px currentColor;transform-origin:0 0;">09.01.2024</span>
<span style="left:406.40px;top:381.40px;font-size:8.31px;line-height:12px;color:#141414;font-weight:normal;transform:scaleX(0.83);-webkit-text-stroke:0.2px currentColor;transform-origin:0 0;">12.07.2023</span>
<span style="left:479.80px;top:381.40px;font-size:8.31px;line-height:12px;color:#141414;font-weight:normal;transform:scaleX(0.83);-webkit-text-stroke:0.2px currentColor;transform-origin:0 0;">09.01.2024</span>
<span style="left:248.40px;width:300px;text-align:right;top:381.40px;font-size:8.31px;line-height:12px;color:#fff;font-weight:normal;transform:scaleX(0.83);-webkit-text-stroke:0.2px currentColor;transform-origin:100% 0;">18</span>
<span style="left:377.70px;width:300px;text-align:right;top:381.40px;font-size:8.31px;line-height:12px;color:#fff;font-weight:normal;transform:scaleX(0.83);-webkit-text-stroke:0.2px currentColor;transform-origin:100% 0;">1</span>
<span style="left:745.20px;top:381.40px;font-size:8.31px;line-height:12px;color:#141414;font-weight:normal;transform:scaleX(0.83);-webkit-text-stroke:0.2px currentColor;transform-origin:0 0;">AOK Niedersachsen</span>
<span style="left:941.40px;top:381.40px;font-size:8.31px;line-height:12px;color:#141414;font-weight:normal;transform:scaleX(0.83);-webkit-text-stroke:0.2px currentColor;transform-origin:0 0;">102114819</span>
<span style="left:981.20px;top:381.40px;font-size:8.31px;line-height:12px;color:#141414;font-weight:normal;transform:scaleX(0.83);-webkit-text-stroke:0.2px currentColor;transform-origin:0 0;">441612217</span>
<span style="left:-264.50px;width:300px;text-align:right;top:391.73px;font-size:8.31px;line-height:12px;color:#141414;font-weight:normal;transform:scaleX(0.83);-webkit-text-stroke:0.2px currentColor;transform-origin:100% 0;">2580</span>
<span style="left:-243.10px;width:300px;text-align:right;top:391.73px;font-size:8.31px;line-height:12px;color:#141414;font-weight:normal;transform:scaleX(0.83);-webkit-text-stroke:0.2px currentColor;transform-origin:100% 0;">1160</span>
<span style="left:-227.60px;width:300px;text-align:right;top:391.73px;font-size:8.31px;line-height:12px;color:#141414;font-weight:normal;transform:scaleX(0.83);-webkit-text-stroke:0.2px currentColor;transform-origin:100% 0;">2</span>
<span style="left:-205.70px;width:300px;text-align:right;top:391.73px;font-size:8.31px;line-height:12px;color:#141414;font-weight:normal;transform:scaleX(0.83);-webkit-text-stroke:0.2px currentColor;transform-origin:100% 0;">807</span>
<span style="left:96.90px;top:391.73px;font-size:8.31px;line-height:12px;color:#141414;font-weight:normal;transform:scaleX(0.83);-webkit-text-stroke:0.2px currentColor;transform-origin:0 0;">Urmana</span>
<span style="left:154.20px;top:391.73px;font-size:8.31px;line-height:12px;color:#141414;font-weight:normal;transform:scaleX(0.83);-webkit-text-stroke:0.2px currentColor;transform-origin:0 0;">Gzaalnhr</span>
<span style="left:211.20px;top:391.73px;font-size:8.31px;line-height:12px;color:#141414;font-weight:normal;transform:scaleX(0.83);-webkit-text-stroke:0.2px currentColor;transform-origin:0 0;">06.05.1981</span>
<span style="left:264.60px;top:391.73px;font-size:8.31px;line-height:12px;color:#141414;font-weight:normal;transform:scaleX(0.83);-webkit-text-stroke:0.2px currentColor;transform-origin:0 0;">17.05.2022</span>
<span style="left:304.60px;top:391.73px;font-size:8.31px;line-height:12px;color:#141414;font-weight:normal;transform:scaleX(0.83);-webkit-text-stroke:0.2px currentColor;transform-origin:0 0;">12.07.2022</span>
<span style="left:344.90px;top:391.73px;font-size:8.31px;line-height:12px;color:#141414;font-weight:normal;transform:scaleX(0.83);-webkit-text-stroke:0.2px currentColor;transform-origin:0 0;">03.02.2024</span>
<span style="left:406.40px;top:391.73px;font-size:8.31px;line-height:12px;color:#141414;font-weight:normal;transform:scaleX(0.83);-webkit-text-stroke:0.2px currentColor;transform-origin:0 0;">24.01.2023</span>
<span style="left:479.80px;top:391.73px;font-size:8.31px;line-height:12px;color:#fff;font-weight:normal;transform:scaleX(0.83);-webkit-text-stroke:0.2px currentColor;transform-origin:0 0;">24.01.2023</span>
<span style="left:248.40px;width:300px;text-align:right;top:391.73px;font-size:8.31px;line-height:12px;color:#fff;font-weight:normal;transform:scaleX(0.83);-webkit-text-stroke:0.2px currentColor;transform-origin:100% 0;">14</span>
<span style="left:377.70px;width:300px;text-align:right;top:391.73px;font-size:8.31px;line-height:12px;color:#fff;font-weight:normal;transform:scaleX(0.83);-webkit-text-stroke:0.2px currentColor;transform-origin:100% 0;">1</span>
<span style="left:745.20px;top:391.73px;font-size:8.31px;line-height:12px;color:#141414;font-weight:normal;transform:scaleX(0.83);-webkit-text-stroke:0.2px currentColor;transform-origin:0 0;">AOK Plus Thüringen</span>
<span style="left:941.40px;top:391.73px;font-size:8.31px;line-height:12px;color:#141414;font-weight:normal;transform:scaleX(0.83);-webkit-text-stroke:0.2px currentColor;transform-origin:0 0;">105998018</span>
<span style="left:981.20px;top:391.73px;font-size:8.31px;line-height:12px;color:#141414;font-weight:normal;transform:scaleX(0.83);-webkit-text-stroke:0.2px currentColor;transform-origin:0 0;">441612217</span>
<span style="left:-264.50px;width:300px;text-align:right;top:402.05px;font-size:8.31px;line-height:12px;color:#141414;font-weight:normal;transform:scaleX(0.83);-webkit-text-stroke:0.2px currentColor;transform-origin:100% 0;">2599</span>
<span style="left:-243.10px;width:300px;text-align:right;top:402.05px;font-size:8.31px;line-height:12px;color:#141414;font-weight:normal;transform:scaleX(0.83);-webkit-text-stroke:0.2px currentColor;transform-origin:100% 0;">2545</span>
<span style="left:-227.60px;width:300px;text-align:right;top:402.05px;font-size:8.31px;line-height:12px;color:#141414;font-weight:normal;transform:scaleX(0.83);-webkit-text-stroke:0.2px currentColor;transform-origin:100% 0;">1</span>
<span style="left:-205.70px;width:300px;text-align:right;top:402.05px;font-size:8.31px;line-height:12px;color:#141414;font-weight:normal;transform:scaleX(0.83);-webkit-text-stroke:0.2px currentColor;transform-origin:100% 0;">2092</span>
<span style="left:96.90px;top:402.05px;font-size:8.31px;line-height:12px;color:#141414;font-weight:normal;transform:scaleX(0.83);-webkit-text-stroke:0.2px currentColor;transform-origin:0 0;">Nilsou</span>
<span style="left:154.20px;top:402.05px;font-size:8.31px;line-height:12px;color:#141414;font-weight:normal;transform:scaleX(0.83);-webkit-text-stroke:0.2px currentColor;transform-origin:0 0;">Petsaln</span>
<span style="left:211.20px;top:402.05px;font-size:8.31px;line-height:12px;color:#141414;font-weight:normal;transform:scaleX(0.83);-webkit-text-stroke:0.2px currentColor;transform-origin:0 0;">22.09.1990</span>
<span style="left:264.60px;top:402.05px;font-size:8.31px;line-height:12px;color:#141414;font-weight:normal;transform:scaleX(0.83);-webkit-text-stroke:0.2px currentColor;transform-origin:0 0;">28.07.2022</span>
<span style="left:304.60px;top:402.05px;font-size:8.31px;line-height:12px;color:#141414;font-weight:normal;transform:scaleX(0.83);-webkit-text-stroke:0.2px currentColor;transform-origin:0 0;">02.08.2022</span>
<span style="left:344.90px;top:402.05px;font-size:8.31px;line-height:12px;color:#141414;font-weight:normal;transform:scaleX(0.83);-webkit-text-stroke:0.2px currentColor;transform-origin:0 0;">04.02.2024</span>
<span style="left:406.40px;top:402.05px;font-size:8.31px;line-height:12px;color:#141414;font-weight:normal;transform:scaleX(0.83);-webkit-text-stroke:0.2px currentColor;transform-origin:0 0;">22.06.2023</span>
<span style="left:479.80px;top:402.05px;font-size:8.31px;line-height:12px;color:#141414;font-weight:normal;transform:scaleX(0.83);-webkit-text-stroke:0.2px currentColor;transform-origin:0 0;">04.02.2024</span>
<span style="left:248.40px;width:300px;text-align:right;top:402.05px;font-size:8.31px;line-height:12px;color:#fff;font-weight:normal;transform:scaleX(0.83);-webkit-text-stroke:0.2px currentColor;transform-origin:100% 0;">21</span>
<span style="left:377.70px;width:300px;text-align:right;top:402.05px;font-size:8.31px;line-height:12px;color:#fff;font-weight:normal;transform:scaleX(0.83);-webkit-text-stroke:0.2px currentColor;transform-origin:100% 0;">1</span>
<span style="left:745.20px;top:402.05px;font-size:8.31px;line-height:12px;color:#141414;font-weight:normal;transform:scaleX(0.83);-webkit-text-stroke:0.2px currentColor;transform-origin:0 0;">TECHNIKER KRANKENKASSE</span>
<span style="left:941.40px;top:402.05px;font-size:8.31px;line-height:12px;color:#141414;font-weight:normal;transform:scaleX(0.83);-webkit-text-stroke:0.2px currentColor;transform-origin:0 0;">101575819</span>
<span style="left:981.20px;top:402.05px;font-size:8.31px;line-height:12px;color:#141414;font-weight:normal;transform:scaleX(0.83);-webkit-text-stroke:0.2px currentColor;transform-origin:0 0;">441112212</span>
</div>
<div style="left:1119.3px;top:297px;width:11.5px;height:417.5px;background:#f7f7f7;"></div>
<div style="left:1119.3px;top:297px;width:11.5px;height:10.8px;background:#f0f0f0;box-sizing:border-box;border-right:1px solid #a0a0a0;border-bottom:1px solid #a0a0a0;"></div>
<svg style="position:absolute;left:1122.5px;top:300.6px" width="5" height="3" viewBox="0 0 5 3"><path d="M0 3 L2.5 0 L5 3Z" fill="#111"/></svg>
<div style="left:1119.3px;top:308px;width:11.5px;height:11px;background:#f0f0f0;box-sizing:border-box;border-right:1px solid #a0a0a0;border-bottom:1px solid #a0a0a0;"></div>
<div style="left:1119.3px;top:705px;width:11px;height:9.5px;background:#f0f0f0;box-sizing:border-box;border-right:1px solid #a0a0a0;border-bottom:1px solid #a0a0a0;"></div>
<span style="left:99.60px;top:721.15px;font-size:8.19px;line-height:12px;color:#222;font-weight:normal;transform:scaleX(0.83);-webkit-text-stroke:0.2px currentColor;transform-origin:0 0;">DRUCKEN</span>
<span style="left:135.50px;top:721.15px;font-size:8.19px;line-height:12px;color:#222;font-weight:normal;transform:scaleX(0.83);-webkit-text-stroke:0.2px currentColor;transform-origin:0 0;">EXPORT</span>
<span style="left:171.80px;top:721.15px;font-size:8.19px;line-height:12px;color:#222;font-weight:normal;transform:scaleX(0.83);-webkit-text-stroke:0.2px currentColor;transform-origin:0 0;">TEILN.LISTE</span>
<span style="left:217.80px;top:721.15px;font-size:8.19px;line-height:12px;color:#222;font-weight:normal;transform:scaleX(0.83);-webkit-text-stroke:0.2px currentColor;transform-origin:0 0;">ABRECHNEN</span>
<span style="left:598.70px;top:721.15px;font-size:8.19px;line-height:12px;color:#222;font-weight:normal;transform:scaleX(0.83);-webkit-text-stroke:0.2px currentColor;transform-origin:0 0;">AUFTRÄGE</span>
<span style="left:882.00px;top:721.15px;font-size:8.19px;line-height:12px;color:#222;font-weight:normal;transform:scaleX(0.83);-webkit-text-stroke:0.2px currentColor;transform-origin:0 0;">DB REFRESH</span>
<span style="left:935.80px;top:721.15px;font-size:8.19px;line-height:12px;color:#222;font-weight:normal;transform:scaleX(0.83);-webkit-text-stroke:0.2px currentColor;transform-origin:0 0;">STATUS REZEPT</span>
<span style="left:1002.00px;top:721.15px;font-size:8.19px;line-height:12px;color:#222;font-weight:normal;transform:scaleX(0.83);-webkit-text-stroke:0.2px currentColor;transform-origin:0 0;">PATIENT-BEARB.</span>
<span style="left:1065.80px;top:721.15px;font-size:8.19px;line-height:12px;color:#222;font-weight:normal;transform:scaleX(0.83);-webkit-text-stroke:0.2px currentColor;transform-origin:0 0;">FALL BEARB.</span>
<span style="left:1119.30px;top:721.15px;font-size:8.19px;line-height:12px;color:#222;font-weight:normal;transform:scaleX(0.83);-webkit-text-stroke:0.2px currentColor;transform-origin:0 0;">OK</span>
<div style="left:1119.4px;top:729.6px;width:4.6px;height:0.9px;background:#777;"></div>
<div style="left:96px;top:739px;width:1042px;height:11px;background:#f0f0f0;border-top:1px solid #d8d8d8;box-sizing:border-box;"></div>
<div style="left:469px;top:740px;width:63px;height:10px;box-sizing:border-box;border-left:1px solid #c8c8c8;border-top:1px solid #c8c8c8;"></div>
<div style="left:534.3px;top:740px;width:60.5px;height:10px;box-sizing:border-box;border-left:1px solid #c8c8c8;border-top:1px solid #c8c8c8;"></div>
<span style="left:99.00px;top:739.46px;font-size:8.92px;line-height:12px;color:#111;font-weight:bold;transform:scaleX(0.83);transform-origin:0 0;">Status</span>
<span style="left:475.00px;top:739.48px;font-size:9.76px;line-height:12px;color:#111;font-weight:bold;transform:scaleX(0.83);transform-origin:0 0;">27.07.2023</span>
<span style="left:537.60px;top:739.48px;font-size:9.76px;line-height:12px;color:#111;font-weight:bold;transform:scaleX(0.83);transform-origin:0 0;">15:00</span>
<svg style="position:absolute;left:1130px;top:742px" width="8" height="8" viewBox="0 0 8 8"><path d="M7.5 0.5 L0.5 7.5 M7.5 3.5 L3.5 7.5 M7.5 6.2 L6.2 7.5" stroke="#9a9a9a" stroke-width="0.9" stroke-dasharray="1 0.8"/></svg>
<svg style="position:absolute;left:632px;top:282.5px" width="256" height="31" viewBox="0 0 256 31"><path d="M4.5 1 H250 Q253.5 1 253.5 4.5 V18.5 Q253.5 22 250 22 H25 L12.8 29 L12.5 22 H4.5 Q1 22 1 18.5 V4.5 Q1 1 4.5 1Z" fill="#fbf7d6" stroke="#4a4a4a" stroke-width="0.9"/></svg>
<span style="left:641.00px;top:288.06px;font-size:8.90px;line-height:12px;color:#222;font-weight:normal;transform:scaleX(0.86);-webkit-text-stroke:0.2px currentColor;transform-origin:0 0;">Schein wurde seit der letzten Abrechnung mindestens 18 mal signiert.</span>
<div style="left:89px;top:702px;width:182px;height:43px;box-sizing:border-box;border:6px solid #ef7804;"></div>
<div style="left:72.4px;top:686.3000000000001px;width:37.8px;height:37.8px;border-radius:50%;background:#ef7804;"></div>
<span style="left:66.7px;top:686px;width:50px;height:40px;line-height:40px;text-align:center;color:#fff;font-weight:bold;font-size:30px;-webkit-text-stroke:0.35px #fff;">7</span>
<div style="left:581.3px;top:709.7px;width:63.90000000000009px;height:30.59999999999991px;box-sizing:border-box;border:6px solid #ef7804;"></div>
<div style="left:564.5999999999999px;top:693.5px;width:38.4px;height:38.4px;border-radius:50%;background:#ef7804;"></div>
<span style="left:559.3px;top:693.6px;width:50px;height:40px;line-height:40px;text-align:center;color:#fff;font-weight:bold;font-size:30px;-webkit-text-stroke:0.35px #fff;">8</span>
<div style="left:858.7px;top:705px;width:280.5px;height:37px;box-sizing:border-box;border:6px solid #ef7804;"></div>
<div style="left:842.0px;top:689.3px;width:37.4px;height:37.4px;border-radius:50%;background:#ef7804;"></div>
<span style="left:836.4px;top:689px;width:50px;height:40px;line-height:40px;text-align:center;color:#fff;font-weight:bold;font-size:30px;-webkit-text-stroke:0.35px #fff;">9</span>
</div>
</body></html>
